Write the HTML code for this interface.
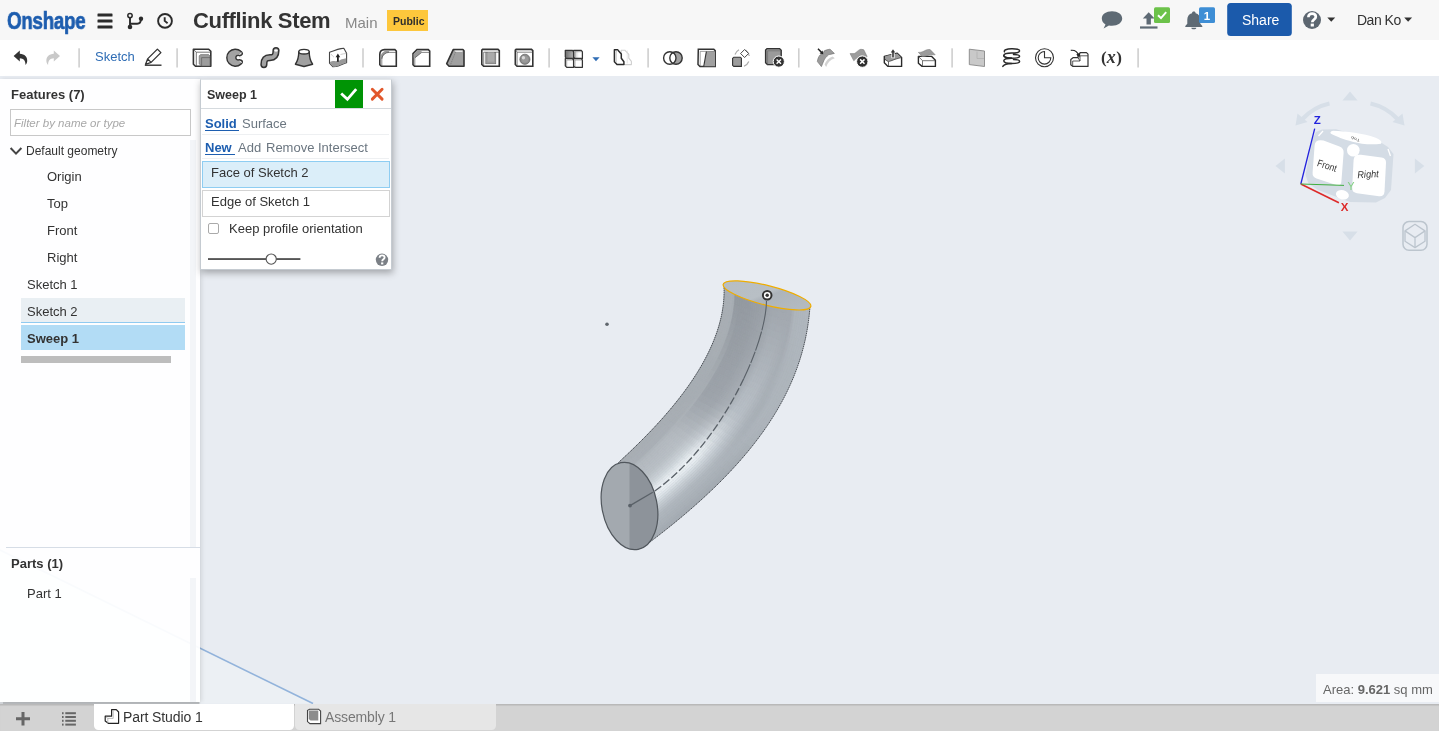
<!DOCTYPE html>
<html><head><meta charset="utf-8">
<style>
*{box-sizing:border-box}
html,body{margin:0;padding:0}
body{width:1439px;height:731px;overflow:hidden;position:relative;background:#e8ecf2;font-family:"Liberation Sans",sans-serif;color:#333}
.a{position:absolute;white-space:nowrap;line-height:1;will-change:transform}
svg{position:absolute;overflow:visible}
</style></head><body>
<!-- HEADER -->
<div class="a" style="left:0;top:0;width:1439px;height:40px;background:#f7f7f7"></div>
<div class="a" style="left:6.5px;top:9.8px;font-size:23px;font-weight:bold;color:#1d5daf;transform:scaleX(0.815);transform-origin:0 0;letter-spacing:-0.3px;-webkit-text-stroke:0.7px #1e5eae">Onshape</div>
<svg style="left:0;top:0" width="200" height="40">
 <g fill="#2b2b2b"><rect x="97.5" y="13.4" width="15" height="3.1" rx="0.6"/><rect x="97.5" y="19.4" width="15" height="3.1" rx="0.6"/><rect x="97.5" y="25.4" width="15" height="3.1" rx="0.6"/></g>
 <g stroke="#2b2b2b" fill="none" stroke-width="1.9"><circle cx="130" cy="15.6" r="2.2" stroke-width="1.5"/><path d="M130 17.8V27M130 23.7H137.2Q141 23.7 141 19"/><circle cx="165" cy="20.9" r="6.9"/><path d="M164.7 17.3V20.9L167.6 23.3"/></g>
 <g fill="#2b2b2b"><circle cx="130" cy="27" r="2.3"/><circle cx="141" cy="18.8" r="2.2"/></g>
</svg>
<div class="a" style="left:192.5px;top:10.4px;font-size:22px;font-weight:bold;color:#333;letter-spacing:-0.35px">Cufflink Stem</div>
<div class="a" style="left:344.8px;top:15.3px;font-size:15px;color:#888">Main</div>
<div class="a" style="left:387px;top:10px;width:41px;height:21px;background:#fdc73c"></div>
<div class="a" style="left:392.5px;top:15.5px;font-size:10.5px;font-weight:bold;color:#2d2d2d">Public</div>
<svg style="left:0;top:0" width="1439" height="40">
 <path fill="#5e6a74" d="M1112 11.3C1117.8 11.3 1122.2 14.4 1122.2 18.5C1122.2 22.6 1117.8 25.7 1112 25.7C1110.9 25.7 1109.9 25.6 1108.9 25.4L1103.6 28.6L1105.5 24.5C1103.2 23.2 1101.8 21 1101.8 18.5C1101.8 14.4 1106.2 11.3 1112 11.3Z"/>
 <g fill="#5e6a74"><rect x="1140" y="26.4" width="17.5" height="2.2"/><path d="M1148.7 12.3L1154.6 18.6H1150.9V24.6H1146.5V18.6H1142.8Z"/></g>
 <rect x="1154" y="7.3" width="16" height="15.8" rx="1.5" fill="#6cc24a"/>
 <path d="M1158 15.3L1161 18.2L1166.2 12.2" stroke="#fff" stroke-width="1.9" fill="none"/>
 <path fill="#5e6a74" d="M1193.8 11.5C1194.9 11.5 1195.6 12.2 1195.6 13.2C1198.6 13.9 1200.3 16.4 1200.3 19.6V23.8L1202.3 26.1V27H1185.3V26.1L1187.3 23.8V19.6C1187.3 16.4 1189 13.9 1192 13.2C1192 12.2 1192.7 11.5 1193.8 11.5ZM1191.3 27.7H1196.3C1196.3 28.7 1195.2 29.2 1193.8 29.2C1192.4 29.2 1191.3 28.7 1191.3 27.7Z"/>
 <rect x="1199" y="7.3" width="16" height="15.8" rx="1.5" fill="#3e8ed5"/>
 <text x="1207" y="19.6" font-family="Liberation Sans" font-size="11.5" font-weight="bold" fill="#fff" text-anchor="middle">1</text>
 <rect x="1227.2" y="3" width="64.6" height="32.9" rx="3.5" fill="#1b5aab"/>
 <circle cx="1312" cy="20" r="9" fill="#5c6670"/>
 <path d="M1308.4 17.2C1308.4 14.8 1310 13.6 1312.1 13.6C1314.3 13.6 1315.8 14.9 1315.8 16.8C1315.8 19.4 1312.3 19.6 1312.3 22.2" fill="none" stroke="#fff" stroke-width="2.7"/><rect x="1310.7" y="23.6" width="3.2" height="2.9" fill="#fff"/>
 <path d="M1327.3 17.5H1335.2L1331.25 21.7Z" fill="#333"/>
 <path d="M1404.2 17.5H1412.1L1408.15 21.7Z" fill="#333"/>
</svg>
<div class="a" style="left:1241.5px;top:13.2px;font-size:14px;color:#fff">Share</div>
<div class="a" style="left:1357px;top:13.3px;font-size:14px;color:#333;letter-spacing:-0.5px">Dan Ko</div>
<!-- TOOLBAR -->
<div class="a" style="left:0;top:40px;width:1439px;height:36px;background:#fff"></div>
<svg style="left:0;top:0" width="1439" height="76">
 <g fill="#cfcfcf"><rect x="78.3" y="48.3" width="1.6" height="19.2"/><rect x="176.3" y="48.3" width="1.6" height="19.2"/><rect x="362.2" y="48.3" width="1.6" height="19.2"/><rect x="548.3" y="48.3" width="1.6" height="19.2"/><rect x="647.3" y="48.3" width="1.6" height="19.2"/><rect x="798" y="48.3" width="1.6" height="19.2"/><rect x="951.3" y="48.3" width="1.6" height="19.2"/><rect x="1137.3" y="48.3" width="1.6" height="19.2"/></g>
 <path fill="#333" d="M13.6 56L19.8 50.4V53.7C24.6 53.9 27.6 56.8 27.2 61.2C27 62.8 26.3 64.1 25.5 65C25.6 60.8 23.6 58.3 19.8 58.2V61.5Z"/>
 <path fill="#c9c9c9" d="M60 56L53.8 50.4V53.7C49 53.9 46 56.8 46.4 61.2C46.6 62.8 47.3 64.1 48.1 65C48 60.8 50 58.3 53.8 58.2V61.5Z"/>
 <g fill="none" stroke="#333" stroke-width="1.3" stroke-linejoin="round"><path d="M145.6 64.3L147.6 58.9L157.4 49.1L160.9 52.6L151.1 62.4Z M147.6 58.9L151.1 62.4"/><path d="M144.8 65.2H161.5" stroke-width="1.4"/></g>
 <!-- extrude -->
 <path d="M193.4 49.2H208.7L210.8 51.3V66.3H195.5L193.4 64.2Z" fill="#fff" stroke="#333" stroke-width="1.6" stroke-linejoin="round"/>
 <path d="M196.3 66V52.2H210.6M193.6 49.5L196.3 52.2" fill="none" stroke="#555" stroke-width="0.8"/>
 <path d="M199.2 55.8L200.6 54.6H208.6L210 56V66H201.6L199.2 64Z" fill="#9c9c9c" stroke="#666" stroke-width="0.6"/>
 <path d="M201.6 66V57.6H210" fill="none" stroke="#555" stroke-width="0.6"/>
 <!-- revolve -->
 <path d="M240.9 51.3A8.5 8.5 0 1 0 240.9 64.1C242.7 63 242.9 61 241.2 60.2L239.3 59.7A2.3 2.3 0 1 1 239.3 55.7L241.2 55.2C242.9 54.4 242.7 52.4 240.9 51.3Z" fill="#a3a3a3" stroke="#333" stroke-width="1.4" stroke-linejoin="round"/><path d="M239.6 54.6L241.6 52.6M239.6 60.8L241.6 62.8M238.8 57.7H242" stroke="#eee" stroke-width="1"/>
 <!-- sweep -->
 <path d="M263.9 64.6C263.9 59.4 265.4 57.6 270 57.6C274.6 57.6 276 55.6 276 50.6" fill="none" stroke="#333" stroke-width="7.2" stroke-linecap="round"/>
 <path d="M263.9 64.6C263.9 59.4 265.4 57.6 270 57.6C274.6 57.6 276 55.6 276 50.6" fill="none" stroke="#a3a3a3" stroke-width="4.2" stroke-linecap="round"/>
 <ellipse cx="276" cy="50.6" rx="1.8" ry="1.1" fill="#fff"/>
 <!-- loft -->
 <path d="M298.8 51.7C298.8 58 297.6 61 295.4 64.2L304 66.5L312.6 64.2C310.4 61 309.2 58 309.2 51.7Z" fill="#a0a0a0" stroke="#333" stroke-width="1.4" stroke-linejoin="round"/>
 <ellipse cx="304" cy="51.7" rx="5.2" ry="2.3" fill="#fff" stroke="#333" stroke-width="1.4"/>
 <!-- thicken -->
 <path d="M329.5 52.3C333 51.2 337 49.2 341 48.6L343.8 48.3L346.6 53.3V62.8C343 63.5 340 65.5 336 66.5L333 66.8L329.5 63.2Z" fill="#fff" stroke="#444" stroke-width="1.1" stroke-linejoin="round"/>
 <path d="M330 62C333 60 337 62.5 341 59.5L346.2 58.2V63C343 63.5 340 65.5 336 66.4L333 66.6L330 63.5Z" fill="#999"/>
 <path d="M331 54C332 55.5 333 56.5 334 57M340.5 54.5C342.5 54 344.5 53.6 346.4 53.5" fill="none" stroke="#aaa" stroke-width="0.6"/><path d="M337.9 61.8V55.5" stroke="#222" stroke-width="1.8"/><path d="M335.6 57.2L337.9 53.4L340.2 57.2Z" fill="#222"/>
 <!-- fillet -->
 <path d="M384.3 49.6H394.9L396.3 51V66.2H381.3L379.8 64.7V54.2C379.8 51.6 381.6 49.6 384.3 49.6Z" fill="#fff" stroke="#333" stroke-width="1.6"/>
 <path d="M380.4 58.6C380.4 53.2 383.8 50.2 388.8 50.2L389.4 52.6C385.6 52.8 382.8 55.2 382.4 59Z" fill="#999"/>
 <path d="M381.8 66V58.2C382.6 54.6 385.6 52.4 389.2 52.4H396" fill="none" stroke="#555" stroke-width="0.7"/>
 <!-- chamfer -->
 <path d="M413 53.6L417 49.6H428.3L429.7 51V66.2H414.5L413 64.7Z" fill="#fff" stroke="#333" stroke-width="1.6"/>
 <path d="M413.7 53.9L417.3 50.3H421.8L421.4 52.5L415.2 58L413.7 57.5Z" fill="#999"/>
 <path d="M414.8 66V57.8L421.8 52.4H429.5" fill="none" stroke="#555" stroke-width="0.7"/>
 <!-- draft -->
 <path d="M453.2 49.6H462.9L464 50.8V66.2H449.1L446.7 63.7Z" fill="#a0a0a0" stroke="#333" stroke-width="1.6" stroke-linejoin="round"/>
 <path d="M454.3 50.4H462.8L462.3 51.8H455.5Z" fill="#fff"/>
 <path d="M455.6 51.8L450 66" stroke="#666" stroke-width="0.6" stroke-dasharray="1.2 0.8"/>
 <!-- shell -->
 <path d="M482.6 49.4H498L499.3 50.7V66.2H483.6L481.8 64.5V50.1Z" fill="#fff" stroke="#333" stroke-width="1.6"/>
 <path d="M483.7 66V52.2H499.2" fill="none" stroke="#555" stroke-width="0.7"/>
 <rect x="485.8" y="52.4" width="10" height="11.4" fill="#9c9c9c" stroke="#666" stroke-width="0.6"/>
 <rect x="487.7" y="52.4" width="6.3" height="9.3" fill="#ababab"/>
 <!-- hole -->
 <path d="M516.1 49.4H531.5L532.8 50.7V66.2H517L515.3 64.5V50.1Z" fill="#fff" stroke="#333" stroke-width="1.6"/>
 <path d="M517.1 66V52.2H532.6M515.6 49.8L517.1 52.2" fill="none" stroke="#555" stroke-width="0.7"/>
 <circle cx="524.9" cy="59.3" r="5.1" fill="#8c8c8c" stroke="#555" stroke-width="0.6"/>
 <circle cx="524.9" cy="59.3" r="3.4" fill="#9a9a9a"/>
 <circle cx="523.4" cy="57.8" r="1.7" fill="#d8d8d8"/>
 <!-- pattern -->
 <defs><linearGradient id="pg1" x1="0" y1="0" x2="1" y2="0"><stop offset="0" stop-color="#6f6f6f"/><stop offset="1" stop-color="#b5b5b5"/></linearGradient><linearGradient id="pg2" x1="0" y1="0" x2="1" y2="0"><stop offset="0" stop-color="#bdbdbd"/><stop offset="0.6" stop-color="#fff"/></linearGradient></defs>
 <path d="M565.3 50.3H572.2L573.6 51.7V58.4H566.7L565.3 57.0Z" fill="url(#pg1)" stroke="#333" stroke-width="1.25" stroke-linejoin="round"/><path d="M566.7 58.4V51.7H573.6" fill="none" stroke="#777" stroke-width="0.6"/><path d="M573.6 50.3H581.0L582.4 51.7V58.4H575.0L573.6 57.0Z" fill="url(#pg2)" stroke="#333" stroke-width="1.25" stroke-linejoin="round"/><path d="M575.0 58.4V51.7H582.4" fill="none" stroke="#777" stroke-width="0.6"/><path d="M565.3 58.6H572.2L573.6 60.0V67.3H566.7L565.3 65.9Z" fill="#fff" stroke="#333" stroke-width="1.25" stroke-linejoin="round"/><path d="M566.7 67.3V60.0H573.6" fill="none" stroke="#777" stroke-width="0.6"/><path d="M573.6 58.6H581.0L582.4 60.0V67.3H575.0L573.6 65.9Z" fill="#fff" stroke="#333" stroke-width="1.25" stroke-linejoin="round"/><path d="M575.0 67.3V60.0H582.4" fill="none" stroke="#777" stroke-width="0.6"/>
 <path d="M592.4 57.2H599.6L596 61.3Z" fill="#2f6db5"/>
 <!-- mirror -->
 <path d="M621.2 50.2H624.8L628.8 54.4V58.2L631.4 61.4V64.6H624.3L621 61.6Z" fill="#fff" stroke="#cfcfcf" stroke-width="1.1" stroke-linejoin="round"/>
 <path d="M627.2 50.6V63.5" stroke="#ddd" stroke-width="0.7"/>
 <path d="M614.4 49.8H617.6L621.3 53.9V58.2L623.9 61.8V64.5H617L614.4 61.8Z" fill="#fff" stroke="#2a2a2a" stroke-width="1.5" stroke-linejoin="round"/>
 <path d="M616.2 52V62.5M616.2 52L617.6 50.2" fill="none" stroke="#999" stroke-width="0.6"/>
 <!-- boolean -->
 <circle cx="676" cy="58" r="6.2" fill="#a0a0a0"/>
 <path d="M672.9 52.6A6.2 6.2 0 0 1 672.9 63.4A6.2 6.2 0 0 1 672.9 52.6Z" fill="#fff"/>
 <g fill="none" stroke="#333" stroke-width="1.4"><circle cx="669.8" cy="58" r="6.2"/><circle cx="676" cy="58" r="6.2"/></g>
 <!-- split -->
 <path d="M698.3 49.2H713.8L715.2 50.6V66.5H700L698 64.5Z" fill="#fff" stroke="#333" stroke-width="1.5"/>
 <path d="M706.2 51.5L712.5 51.3L715 51.6V66.2H704.2Z" fill="#a0a0a0"/>
 <path d="M706.4 51.4L703.8 66.2" stroke="#333" stroke-width="1.1"/>
 <path d="M700.2 66V51.4H715" fill="none" stroke="#666" stroke-width="0.6"/>
 <!-- transform -->
 <path d="M735 54.5A9 9 0 0 1 739 49.8M745.5 50A9 9 0 0 1 749.3 56M748.8 61.5A9 9 0 0 1 744 66.3" fill="none" stroke="#aaa" stroke-width="1.2"/>
 <path d="M732.6 58.3L733.8 57.2H740.4L741.4 58.2V66.4H733.8L732.6 65.3Z" fill="#9c9c9c" stroke="#333" stroke-width="1.1"/>
 <path d="M744.6 49.5L748.6 53.5L744.6 57.5L740.6 53.5Z" fill="#fff" stroke="#333" stroke-width="0.9"/>
 <!-- delete part -->
 <path d="M767 48.6H779.6L781.2 50.2V64.6H767.4L765.6 62.8V50Z" fill="#9a9a9a" stroke="#333" stroke-width="1.4"/>
 <path d="M767.6 64.4V50.8H781" fill="none" stroke="#666" stroke-width="0.6"/>
 <circle cx="778.8" cy="61.6" r="5.6" fill="#333" stroke="#fff" stroke-width="1"/>
 <path d="M776.6 59.4L781 63.8M781 59.4L776.6 63.8" stroke="#fff" stroke-width="1.4"/>
 <!-- move face -->
 <path d="M821.4 66.6L817.4 61.6C817.6 59 818.5 56.8 820 55L823 53.5L824.3 50.8C826 50 828 49.3 830 49.2L834.4 53.4C831.8 54 829.8 54.6 828.8 54.6C826.5 56.5 824.6 58.5 823.8 60.8Z" fill="#9c9c9c" stroke="#666" stroke-width="0.6" stroke-linejoin="round"/>
 <path d="M834.8 58.2C830.5 59.4 827.5 62.6 826.2 67L824.6 64.6C825.8 60.6 829 57.8 832.6 56.4Z" fill="#d2d2d2"/>
 <path d="M818 48.7L821.6 52.6" stroke="#222" stroke-width="1.5"/><path d="M819.6 53.6L823.3 54.3L822.6 50.6Z" fill="#222"/>
 <!-- delete face -->
 <path d="M850 53.6L853.8 60.8C856.3 58.6 858.5 56.2 861 55.3L867.2 56.6L863.8 49.8C862.5 49.3 861 49.2 860 49.4C857.8 50.5 856 52.8 854.2 53.6Z" fill="#9c9c9c" stroke="#777" stroke-width="0.5" stroke-linejoin="round"/>
 <circle cx="862.3" cy="61.6" r="5.7" fill="#2e2e2e" stroke="#fff" stroke-width="1"/>
 <path d="M860.1 59.4L864.5 63.8M864.5 59.4L860.1 63.8" stroke="#fff" stroke-width="1.5"/>
 <!-- replace face -->
 <path d="M884.3 56.4V62.8L888 66.4H901.6V57.4L897.2 53.3L884.3 56.4Z" fill="#fff" stroke="#2a2a2a" stroke-width="1.4" stroke-linejoin="round"/>
 <path d="M885 56.6C886.8 55.6 888.5 55.2 890 55C892.5 54.6 895 54 897.1 53.6L901.2 57.4C898.5 57.6 896 59.2 893.6 59.9C891.5 60.6 889.8 61.3 888.4 61.6L885 60.2Z" fill="#9a9a9a"/>
 <path d="M888.5 61.6V66.2M884.6 58.5C885.6 60 886.8 61 888.4 61.6C891.5 61 894.5 59 901.4 57.6" fill="none" stroke="#444" stroke-width="0.8"/>
 <path d="M893 58.2V51.8" stroke="#fff" stroke-width="3.2"/>
 <path d="M893 57.6V51.6" stroke="#333" stroke-width="1.6"/><path d="M890.8 52.6L893 49.3L895.2 52.6Z" fill="#333"/>
 <!-- modify fillet -->
 <path d="M918.4 56.4H931.7L935.4 60.3V66.4H922.1L918.4 63.2Z" fill="#fff" stroke="#2a2a2a" stroke-width="1.4" stroke-linejoin="round"/>
 <path d="M918.6 56.6L922.5 60.7H935.2M922.5 60.7V66.2" fill="none" stroke="#555" stroke-width="0.8"/>
 <path d="M918.3 52.4C921 52.6 923.5 51.5 925.5 50.3C927 49.5 928.5 49.3 930.2 49.6L935.2 54.8C933 54.8 930.5 54.4 928.6 55.2C926.4 56 924 56.6 921.8 56.5C921 55 919.8 53.6 918.3 52.4Z" fill="#9c9c9c" stroke="#777" stroke-width="0.5"/>
 <!-- plane -->
 <path d="M969.3 49.2L984.5 51V66.5L969.3 64.6Z" fill="#c9c9c9" stroke="#888" stroke-width="0.9"/>
 <path d="M977 51.5V58.5H984" fill="none" stroke="#aaa" stroke-width="0.6"/>
 <!-- helix -->
 <g fill="none" stroke="#2a2a2a" stroke-width="1.5" stroke-linecap="round">
  <path d="M1004.5 51.8C1003.5 50.2 1006.5 48.9 1011.5 48.8C1016.5 48.7 1019.8 49.6 1019.6 50.8C1019.4 52.2 1015.5 53 1011.5 53C1007.5 53 1004 53.8 1003.8 55.6C1003.6 57.3 1007.5 58.2 1011.5 58.2C1015.5 58.2 1019.6 57.6 1019.6 56.2C1019.6 55 1016.5 54.4 1013.5 54.4"/>
  <path d="M1003.8 55.6C1003.6 57.3 1007.5 58.2 1011.5 58.2"/>
  <path d="M1011.5 58.2C1007.5 58.2 1003.8 59 1003.8 60.8C1003.8 62.5 1007.5 63.4 1011.5 63.4C1015.5 63.4 1019.6 62.8 1019.6 61.4C1019.6 60.2 1016.5 59.6 1013.5 59.6"/>
  <path d="M1011.5 63.4C1007.5 63.4 1004 64.2 1002.8 66.4"/>
 </g>
 <!-- mate connector pie -->
 <g fill="none" stroke="#333"><circle cx="1044.5" cy="57.7" r="9" stroke-width="1.1"/><path d="M1044.5 51.5A6.3 6.3 0 1 0 1050.8 57.8H1044.5Z" stroke-width="1.1"/></g>
 <!-- import -->
 <path d="M1070.8 59.5L1073 57.7H1078V54.6L1080.2 52.7H1086.5L1088 54.2V66.4H1072.7L1070.8 64.7Z" fill="#fff" stroke="#333" stroke-width="1.2" stroke-linejoin="round"/>
 <path d="M1072.7 66.2V61H1080V55.8H1087.8M1080 61L1078 57.7M1080 55.8L1078 54.6" fill="none" stroke="#333" stroke-width="0.8"/>
 <path d="M1070.8 50.3C1074.8 49.9 1077.5 51.5 1078.6 55.5" fill="none" stroke="#222" stroke-width="1.2"/><path d="M1076.2 54.6L1079.4 57.6L1080.4 53.3Z" fill="#222"/>
</svg>
<div class="a" style="left:95.3px;top:49.8px;font-size:13px;color:#2f6db5">Sketch</div>
<div class="a" style="left:1101.2px;top:48.2px;font-size:17px;font-family:'Liberation Serif',serif;font-weight:bold;color:#333">(<span style="font-style:italic;font-size:18px;letter-spacing:0.5px">x</span>)</div>

<!-- VIEWPORT -->
<svg id="vp" style="left:0;top:0" width="1439" height="731">
 <defs>
  <clipPath id="bodyclip"><path d="M723.8 283C729.4 356.8 656.4 427.4 618 463L648 543.5C751.3 466 804.1 392.7 810 306Z"/></clipPath>
  <clipPath id="capc"><ellipse cx="629.5" cy="506" rx="44.2" ry="27.5" transform="rotate(78.6 629.5 506)"/></clipPath>
  <linearGradient id="capg" x1="0" y1="0" x2="1" y2="0.3"><stop offset="0" stop-color="#b6bdc3"/><stop offset="0.55" stop-color="#b8bfc5"/><stop offset="0.62" stop-color="#adb4bb"/><stop offset="1" stop-color="#b3bac0"/></linearGradient>
  <filter id="bl" x="-10%" y="-10%" width="120%" height="120%"><feGaussianBlur stdDeviation="0.7"/></filter>
 </defs>
 <path d="M0 550L313 703.5L0 703.5Z" fill="#ecf0f4"/>
 <path d="M0 550L313 703.5" stroke="#92b3db" stroke-width="1.6"/>
 <circle cx="607" cy="324.3" r="1.8" fill="#5f666d"/>
 <g clip-path="url(#bodyclip)">
  <path d="M723.8 283C729.4 356.8 656.4 427.4 618 463L648 543.5C751.3 466 804.1 392.7 810 306Z" fill="#a6acb3"/>
  <g filter="url(#bl)"><path d="M723.8 283.0L726.0 283.6L726.2 289.7L724.1 289.1Z" fill="#a8aeb4" stroke="#a8aeb4" stroke-width="0.4"/><path d="M726.0 283.6L728.1 284.1L728.4 290.3L726.2 289.7Z" fill="#a8aeb4" stroke="#a8aeb4" stroke-width="0.4"/><path d="M728.1 284.1L730.3 284.7L730.5 290.9L728.4 290.3Z" fill="#a9afb5" stroke="#a9afb5" stroke-width="0.4"/><path d="M730.3 284.7L732.4 285.3L732.6 291.5L730.5 290.9Z" fill="#a9afb5" stroke="#a9afb5" stroke-width="0.4"/><path d="M732.4 285.3L734.6 285.9L734.8 292.1L732.6 291.5Z" fill="#a7adb3" stroke="#a7adb3" stroke-width="0.4"/><path d="M734.6 285.9L736.7 286.4L736.9 292.7L734.8 292.1Z" fill="#92989f" stroke="#92989f" stroke-width="0.4"/><path d="M736.7 286.4L738.9 287.0L739.0 293.4L736.9 292.7Z" fill="#92989f" stroke="#92989f" stroke-width="0.4"/><path d="M738.9 287.0L741.0 287.6L741.1 294.0L739.0 293.4Z" fill="#9399a0" stroke="#9399a0" stroke-width="0.4"/><path d="M741.0 287.6L743.2 288.2L743.3 294.6L741.1 294.0Z" fill="#9399a0" stroke="#9399a0" stroke-width="0.4"/><path d="M743.2 288.2L745.3 288.8L745.4 295.2L743.3 294.6Z" fill="#9399a0" stroke="#9399a0" stroke-width="0.4"/><path d="M745.3 288.8L747.5 289.3L747.5 295.8L745.4 295.2Z" fill="#949aa1" stroke="#949aa1" stroke-width="0.4"/><path d="M747.5 289.3L749.7 289.9L749.7 296.4L747.5 295.8Z" fill="#949aa1" stroke="#949aa1" stroke-width="0.4"/><path d="M749.7 289.9L751.8 290.5L751.8 297.0L749.7 296.4Z" fill="#949aa1" stroke="#949aa1" stroke-width="0.4"/><path d="M751.8 290.5L754.0 291.1L753.9 297.6L751.8 297.0Z" fill="#959ba2" stroke="#959ba2" stroke-width="0.4"/><path d="M754.0 291.1L756.1 291.6L756.1 298.2L753.9 297.6Z" fill="#969ca3" stroke="#969ca3" stroke-width="0.4"/><path d="M756.1 291.6L758.3 292.2L758.2 298.8L756.1 298.2Z" fill="#979da4" stroke="#979da4" stroke-width="0.4"/><path d="M758.3 292.2L760.4 292.8L760.3 299.4L758.2 298.8Z" fill="#989ea5" stroke="#989ea5" stroke-width="0.4"/><path d="M760.4 292.8L762.6 293.4L762.5 300.0L760.3 299.4Z" fill="#999fa6" stroke="#999fa6" stroke-width="0.4"/><path d="M762.6 293.4L764.7 293.9L764.6 300.6L762.5 300.0Z" fill="#9aa0a7" stroke="#9aa0a7" stroke-width="0.4"/><path d="M764.7 293.9L766.9 294.5L766.7 301.2L764.6 300.6Z" fill="#9ba1a8" stroke="#9ba1a8" stroke-width="0.4"/><path d="M766.9 294.5L769.1 295.1L768.9 301.8L766.7 301.2Z" fill="#9ca2a9" stroke="#9ca2a9" stroke-width="0.4"/><path d="M769.1 295.1L771.2 295.6L771.0 302.4L768.9 301.8Z" fill="#9ea4ab" stroke="#9ea4ab" stroke-width="0.4"/><path d="M771.2 295.6L773.4 296.2L773.1 303.0L771.0 302.4Z" fill="#a0a6ad" stroke="#a0a6ad" stroke-width="0.4"/><path d="M773.4 296.2L775.5 296.8L775.3 303.6L773.1 303.0Z" fill="#a1a7ae" stroke="#a1a7ae" stroke-width="0.4"/><path d="M775.5 296.8L777.7 297.4L777.4 304.2L775.3 303.6Z" fill="#a1a7ae" stroke="#a1a7ae" stroke-width="0.4"/><path d="M777.7 297.4L779.8 297.9L779.5 304.8L777.4 304.2Z" fill="#a2a8af" stroke="#a2a8af" stroke-width="0.4"/><path d="M779.8 297.9L782.0 298.5L781.7 305.4L779.5 304.8Z" fill="#a2a8af" stroke="#a2a8af" stroke-width="0.4"/><path d="M782.0 298.5L784.1 299.1L783.8 306.0L781.7 305.4Z" fill="#a2a8af" stroke="#a2a8af" stroke-width="0.4"/><path d="M784.1 299.1L786.3 299.7L785.9 306.6L783.8 306.0Z" fill="#a2a8af" stroke="#a2a8af" stroke-width="0.4"/><path d="M786.3 299.7L788.5 300.2L788.1 307.2L785.9 306.6Z" fill="#a2a8af" stroke="#a2a8af" stroke-width="0.4"/><path d="M788.5 300.2L790.6 300.8L790.2 307.8L788.1 307.2Z" fill="#a3a9b0" stroke="#a3a9b0" stroke-width="0.4"/><path d="M790.6 300.8L792.8 301.4L792.3 308.4L790.2 307.8Z" fill="#a3a9b0" stroke="#a3a9b0" stroke-width="0.4"/><path d="M792.8 301.4L794.9 302.0L794.5 309.0L792.3 308.4Z" fill="#a8afb6" stroke="#a8afb6" stroke-width="0.4"/><path d="M794.9 302.0L797.1 302.6L796.6 309.6L794.5 309.0Z" fill="#aeb5bc" stroke="#aeb5bc" stroke-width="0.4"/><path d="M797.1 302.6L799.2 303.1L798.7 310.2L796.6 309.6Z" fill="#aeb5bc" stroke="#aeb5bc" stroke-width="0.4"/><path d="M799.2 303.1L801.4 303.7L800.9 310.8L798.7 310.2Z" fill="#afb6bd" stroke="#afb6bd" stroke-width="0.4"/><path d="M801.4 303.7L803.5 304.3L803.0 311.4L800.9 310.8Z" fill="#afb6bd" stroke="#afb6bd" stroke-width="0.4"/><path d="M803.5 304.3L805.7 304.9L805.1 312.0L803.0 311.4Z" fill="#afb6bd" stroke="#afb6bd" stroke-width="0.4"/><path d="M805.7 304.9L807.8 305.4L807.3 312.6L805.1 312.0Z" fill="#b0b7be" stroke="#b0b7be" stroke-width="0.4"/><path d="M807.8 305.4L810.0 306.0L809.4 313.2L807.3 312.6Z" fill="#b0b7be" stroke="#b0b7be" stroke-width="0.4"/><path d="M724.1 289.1L726.2 289.7L726.1 295.9L724.0 295.3Z" fill="#a8aeb4" stroke="#a8aeb4" stroke-width="0.4"/><path d="M726.2 289.7L728.4 290.3L728.3 296.5L726.1 295.9Z" fill="#a8aeb4" stroke="#a8aeb4" stroke-width="0.4"/><path d="M728.4 290.3L730.5 290.9L730.4 297.1L728.3 296.5Z" fill="#a9afb5" stroke="#a9afb5" stroke-width="0.4"/><path d="M730.5 290.9L732.6 291.5L732.5 297.8L730.4 297.1Z" fill="#a9afb5" stroke="#a9afb5" stroke-width="0.4"/><path d="M732.6 291.5L734.8 292.1L734.6 298.4L732.5 297.8Z" fill="#a7adb3" stroke="#a7adb3" stroke-width="0.4"/><path d="M734.8 292.1L736.9 292.7L736.7 299.0L734.6 298.4Z" fill="#92989f" stroke="#92989f" stroke-width="0.4"/><path d="M736.9 292.7L739.0 293.4L738.8 299.7L736.7 299.0Z" fill="#92989f" stroke="#92989f" stroke-width="0.4"/><path d="M739.0 293.4L741.1 294.0L740.9 300.3L738.8 299.7Z" fill="#9399a0" stroke="#9399a0" stroke-width="0.4"/><path d="M741.1 294.0L743.3 294.6L743.1 300.9L740.9 300.3Z" fill="#9399a0" stroke="#9399a0" stroke-width="0.4"/><path d="M743.3 294.6L745.4 295.2L745.2 301.5L743.1 300.9Z" fill="#9399a0" stroke="#9399a0" stroke-width="0.4"/><path d="M745.4 295.2L747.5 295.8L747.3 302.2L745.2 301.5Z" fill="#949aa1" stroke="#949aa1" stroke-width="0.4"/><path d="M747.5 295.8L749.7 296.4L749.4 302.8L747.3 302.2Z" fill="#949aa1" stroke="#949aa1" stroke-width="0.4"/><path d="M749.7 296.4L751.8 297.0L751.5 303.4L749.4 302.8Z" fill="#949aa1" stroke="#949aa1" stroke-width="0.4"/><path d="M751.8 297.0L753.9 297.6L753.6 304.0L751.5 303.4Z" fill="#959ba2" stroke="#959ba2" stroke-width="0.4"/><path d="M753.9 297.6L756.1 298.2L755.7 304.7L753.6 304.0Z" fill="#969ca3" stroke="#969ca3" stroke-width="0.4"/><path d="M756.1 298.2L758.2 298.8L757.8 305.3L755.7 304.7Z" fill="#979da4" stroke="#979da4" stroke-width="0.4"/><path d="M758.2 298.8L760.3 299.4L760.0 305.9L757.8 305.3Z" fill="#989ea5" stroke="#989ea5" stroke-width="0.4"/><path d="M760.3 299.4L762.5 300.0L762.1 306.5L760.0 305.9Z" fill="#999fa6" stroke="#999fa6" stroke-width="0.4"/><path d="M762.5 300.0L764.6 300.6L764.2 307.2L762.1 306.5Z" fill="#9aa0a7" stroke="#9aa0a7" stroke-width="0.4"/><path d="M764.6 300.6L766.7 301.2L766.3 307.8L764.2 307.2Z" fill="#9ba1a8" stroke="#9ba1a8" stroke-width="0.4"/><path d="M766.7 301.2L768.9 301.8L768.4 308.4L766.3 307.8Z" fill="#9ca2a9" stroke="#9ca2a9" stroke-width="0.4"/><path d="M768.9 301.8L771.0 302.4L770.5 309.1L768.4 308.4Z" fill="#9ea4ab" stroke="#9ea4ab" stroke-width="0.4"/><path d="M771.0 302.4L773.1 303.0L772.6 309.7L770.5 309.1Z" fill="#a0a6ad" stroke="#a0a6ad" stroke-width="0.4"/><path d="M773.1 303.0L775.3 303.6L774.8 310.3L772.6 309.7Z" fill="#a1a7ae" stroke="#a1a7ae" stroke-width="0.4"/><path d="M775.3 303.6L777.4 304.2L776.9 310.9L774.8 310.3Z" fill="#a1a7ae" stroke="#a1a7ae" stroke-width="0.4"/><path d="M777.4 304.2L779.5 304.8L779.0 311.6L776.9 310.9Z" fill="#a2a8af" stroke="#a2a8af" stroke-width="0.4"/><path d="M779.5 304.8L781.7 305.4L781.1 312.2L779.0 311.6Z" fill="#a2a8af" stroke="#a2a8af" stroke-width="0.4"/><path d="M781.7 305.4L783.8 306.0L783.2 312.8L781.1 312.2Z" fill="#a2a8af" stroke="#a2a8af" stroke-width="0.4"/><path d="M783.8 306.0L785.9 306.6L785.3 313.4L783.2 312.8Z" fill="#a2a8af" stroke="#a2a8af" stroke-width="0.4"/><path d="M785.9 306.6L788.1 307.2L787.4 314.1L785.3 313.4Z" fill="#a2a8af" stroke="#a2a8af" stroke-width="0.4"/><path d="M788.1 307.2L790.2 307.8L789.6 314.7L787.4 314.1Z" fill="#a3a9b0" stroke="#a3a9b0" stroke-width="0.4"/><path d="M790.2 307.8L792.3 308.4L791.7 315.3L789.6 314.7Z" fill="#a3a9b0" stroke="#a3a9b0" stroke-width="0.4"/><path d="M792.3 308.4L794.5 309.0L793.8 315.9L791.7 315.3Z" fill="#a8afb6" stroke="#a8afb6" stroke-width="0.4"/><path d="M794.5 309.0L796.6 309.6L795.9 316.6L793.8 315.9Z" fill="#aeb5bc" stroke="#aeb5bc" stroke-width="0.4"/><path d="M796.6 309.6L798.7 310.2L798.0 317.2L795.9 316.6Z" fill="#aeb5bc" stroke="#aeb5bc" stroke-width="0.4"/><path d="M798.7 310.2L800.9 310.8L800.1 317.8L798.0 317.2Z" fill="#afb6bd" stroke="#afb6bd" stroke-width="0.4"/><path d="M800.9 310.8L803.0 311.4L802.2 318.4L800.1 317.8Z" fill="#afb6bd" stroke="#afb6bd" stroke-width="0.4"/><path d="M803.0 311.4L805.1 312.0L804.4 319.1L802.2 318.4Z" fill="#afb6bd" stroke="#afb6bd" stroke-width="0.4"/><path d="M805.1 312.0L807.3 312.6L806.5 319.7L804.4 319.1Z" fill="#b0b7be" stroke="#b0b7be" stroke-width="0.4"/><path d="M807.3 312.6L809.4 313.2L808.6 320.3L806.5 319.7Z" fill="#b0b7be" stroke="#b0b7be" stroke-width="0.4"/><path d="M724.0 295.3L726.1 295.9L725.7 302.0L723.6 301.4Z" fill="#a8aeb4" stroke="#a8aeb4" stroke-width="0.4"/><path d="M726.1 295.9L728.3 296.5L727.8 302.7L725.7 302.0Z" fill="#a8aeb4" stroke="#a8aeb4" stroke-width="0.4"/><path d="M728.3 296.5L730.4 297.1L729.9 303.3L727.8 302.7Z" fill="#a8aeb4" stroke="#a8aeb4" stroke-width="0.4"/><path d="M730.4 297.1L732.5 297.8L732.0 304.0L729.9 303.3Z" fill="#a9afb5" stroke="#a9afb5" stroke-width="0.4"/><path d="M732.5 297.8L734.6 298.4L734.1 304.6L732.0 304.0Z" fill="#a7adb3" stroke="#a7adb3" stroke-width="0.4"/><path d="M734.6 298.4L736.7 299.0L736.2 305.3L734.1 304.6Z" fill="#9399a0" stroke="#9399a0" stroke-width="0.4"/><path d="M736.7 299.0L738.8 299.7L738.3 305.9L736.2 305.3Z" fill="#9399a0" stroke="#9399a0" stroke-width="0.4"/><path d="M738.8 299.7L740.9 300.3L740.4 306.6L738.3 305.9Z" fill="#9399a0" stroke="#9399a0" stroke-width="0.4"/><path d="M740.9 300.3L743.1 300.9L742.5 307.2L740.4 306.6Z" fill="#9399a0" stroke="#9399a0" stroke-width="0.4"/><path d="M743.1 300.9L745.2 301.5L744.6 307.9L742.5 307.2Z" fill="#949aa1" stroke="#949aa1" stroke-width="0.4"/><path d="M745.2 301.5L747.3 302.2L746.7 308.5L744.6 307.9Z" fill="#949aa1" stroke="#949aa1" stroke-width="0.4"/><path d="M747.3 302.2L749.4 302.8L748.8 309.2L746.7 308.5Z" fill="#949aa1" stroke="#949aa1" stroke-width="0.4"/><path d="M749.4 302.8L751.5 303.4L750.9 309.8L748.8 309.2Z" fill="#959ba2" stroke="#959ba2" stroke-width="0.4"/><path d="M751.5 303.4L753.6 304.0L753.0 310.5L750.9 309.8Z" fill="#969ca3" stroke="#969ca3" stroke-width="0.4"/><path d="M753.6 304.0L755.7 304.7L755.1 311.1L753.0 310.5Z" fill="#979da4" stroke="#979da4" stroke-width="0.4"/><path d="M755.7 304.7L757.8 305.3L757.2 311.8L755.1 311.1Z" fill="#979da4" stroke="#979da4" stroke-width="0.4"/><path d="M757.8 305.3L760.0 305.9L759.3 312.4L757.2 311.8Z" fill="#989ea5" stroke="#989ea5" stroke-width="0.4"/><path d="M760.0 305.9L762.1 306.5L761.4 313.1L759.3 312.4Z" fill="#999fa6" stroke="#999fa6" stroke-width="0.4"/><path d="M762.1 306.5L764.2 307.2L763.5 313.7L761.4 313.1Z" fill="#9aa0a7" stroke="#9aa0a7" stroke-width="0.4"/><path d="M764.2 307.2L766.3 307.8L765.6 314.4L763.5 313.7Z" fill="#9ba1a8" stroke="#9ba1a8" stroke-width="0.4"/><path d="M766.3 307.8L768.4 308.4L767.7 315.0L765.6 314.4Z" fill="#9da3aa" stroke="#9da3aa" stroke-width="0.4"/><path d="M768.4 308.4L770.5 309.1L769.8 315.7L767.7 315.0Z" fill="#9fa5ac" stroke="#9fa5ac" stroke-width="0.4"/><path d="M770.5 309.1L772.6 309.7L771.9 316.3L769.8 315.7Z" fill="#a1a7ae" stroke="#a1a7ae" stroke-width="0.4"/><path d="M772.6 309.7L774.8 310.3L774.0 317.0L771.9 316.3Z" fill="#a2a8af" stroke="#a2a8af" stroke-width="0.4"/><path d="M774.8 310.3L776.9 310.9L776.1 317.6L774.0 317.0Z" fill="#a2a8af" stroke="#a2a8af" stroke-width="0.4"/><path d="M776.9 310.9L779.0 311.6L778.2 318.3L776.1 317.6Z" fill="#a2a9b0" stroke="#a2a9b0" stroke-width="0.4"/><path d="M779.0 311.6L781.1 312.2L780.3 318.9L778.2 318.3Z" fill="#a3a9b0" stroke="#a3a9b0" stroke-width="0.4"/><path d="M781.1 312.2L783.2 312.8L782.4 319.6L780.3 318.9Z" fill="#a3a9b0" stroke="#a3a9b0" stroke-width="0.4"/><path d="M783.2 312.8L785.3 313.4L784.5 320.2L782.4 319.6Z" fill="#a3a9b0" stroke="#a3a9b0" stroke-width="0.4"/><path d="M785.3 313.4L787.4 314.1L786.6 320.9L784.5 320.2Z" fill="#a3a9b0" stroke="#a3a9b0" stroke-width="0.4"/><path d="M787.4 314.1L789.6 314.7L788.7 321.5L786.6 320.9Z" fill="#a3a9b0" stroke="#a3a9b0" stroke-width="0.4"/><path d="M789.6 314.7L791.7 315.3L790.8 322.2L788.7 321.5Z" fill="#a3a9b0" stroke="#a3a9b0" stroke-width="0.4"/><path d="M791.7 315.3L793.8 315.9L792.9 322.8L790.8 322.2Z" fill="#a9afb6" stroke="#a9afb6" stroke-width="0.4"/><path d="M793.8 315.9L795.9 316.6L795.0 323.5L792.9 322.8Z" fill="#aeb5bc" stroke="#aeb5bc" stroke-width="0.4"/><path d="M795.9 316.6L798.0 317.2L797.1 324.2L795.0 323.5Z" fill="#aeb5bc" stroke="#aeb5bc" stroke-width="0.4"/><path d="M798.0 317.2L800.1 317.8L799.2 324.8L797.1 324.2Z" fill="#afb6bd" stroke="#afb6bd" stroke-width="0.4"/><path d="M800.1 317.8L802.2 318.4L801.3 325.5L799.2 324.8Z" fill="#afb6bd" stroke="#afb6bd" stroke-width="0.4"/><path d="M802.2 318.4L804.4 319.1L803.3 326.1L801.3 325.5Z" fill="#afb6bd" stroke="#afb6bd" stroke-width="0.4"/><path d="M804.4 319.1L806.5 319.7L805.4 326.8L803.3 326.1Z" fill="#afb6bd" stroke="#afb6bd" stroke-width="0.4"/><path d="M806.5 319.7L808.6 320.3L807.5 327.4L805.4 326.8Z" fill="#b0b7be" stroke="#b0b7be" stroke-width="0.4"/><path d="M723.6 301.4L725.7 302.0L725.0 308.1L722.9 307.4Z" fill="#a8aeb4" stroke="#a8aeb4" stroke-width="0.4"/><path d="M725.7 302.0L727.8 302.7L727.1 308.8L725.0 308.1Z" fill="#a8aeb4" stroke="#a8aeb4" stroke-width="0.4"/><path d="M727.8 302.7L729.9 303.3L729.2 309.5L727.1 308.8Z" fill="#a8aeb4" stroke="#a8aeb4" stroke-width="0.4"/><path d="M729.9 303.3L732.0 304.0L731.2 310.1L729.2 309.5Z" fill="#a9afb5" stroke="#a9afb5" stroke-width="0.4"/><path d="M732.0 304.0L734.1 304.6L733.3 310.8L731.2 310.1Z" fill="#a7adb3" stroke="#a7adb3" stroke-width="0.4"/><path d="M734.1 304.6L736.2 305.3L735.4 311.5L733.3 310.8Z" fill="#959ba1" stroke="#959ba1" stroke-width="0.4"/><path d="M736.2 305.3L738.3 305.9L737.5 312.2L735.4 311.5Z" fill="#959ba2" stroke="#959ba2" stroke-width="0.4"/><path d="M738.3 305.9L740.4 306.6L739.6 312.8L737.5 312.2Z" fill="#949aa1" stroke="#949aa1" stroke-width="0.4"/><path d="M740.4 306.6L742.5 307.2L741.7 313.5L739.6 312.8Z" fill="#949aa1" stroke="#949aa1" stroke-width="0.4"/><path d="M742.5 307.2L744.6 307.9L743.8 314.2L741.7 313.5Z" fill="#949aa1" stroke="#949aa1" stroke-width="0.4"/><path d="M744.6 307.9L746.7 308.5L745.8 314.9L743.8 314.2Z" fill="#959ba2" stroke="#959ba2" stroke-width="0.4"/><path d="M746.7 308.5L748.8 309.2L747.9 315.5L745.8 314.9Z" fill="#959ba2" stroke="#959ba2" stroke-width="0.4"/><path d="M748.8 309.2L750.9 309.8L750.0 316.2L747.9 315.5Z" fill="#959ba2" stroke="#959ba2" stroke-width="0.4"/><path d="M750.9 309.8L753.0 310.5L752.1 316.9L750.0 316.2Z" fill="#969ca3" stroke="#969ca3" stroke-width="0.4"/><path d="M753.0 310.5L755.1 311.1L754.2 317.6L752.1 316.9Z" fill="#979da4" stroke="#979da4" stroke-width="0.4"/><path d="M755.1 311.1L757.2 311.8L756.3 318.2L754.2 317.6Z" fill="#989ea5" stroke="#989ea5" stroke-width="0.4"/><path d="M757.2 311.8L759.3 312.4L758.3 318.9L756.3 318.2Z" fill="#999fa6" stroke="#999fa6" stroke-width="0.4"/><path d="M759.3 312.4L761.4 313.1L760.4 319.6L758.3 318.9Z" fill="#9aa0a7" stroke="#9aa0a7" stroke-width="0.4"/><path d="M761.4 313.1L763.5 313.7L762.5 320.3L760.4 319.6Z" fill="#9ba1a8" stroke="#9ba1a8" stroke-width="0.4"/><path d="M763.5 313.7L765.6 314.4L764.6 320.9L762.5 320.3Z" fill="#9ca2a9" stroke="#9ca2a9" stroke-width="0.4"/><path d="M765.6 314.4L767.7 315.0L766.7 321.6L764.6 320.9Z" fill="#9ea4ab" stroke="#9ea4ab" stroke-width="0.4"/><path d="M767.7 315.0L769.8 315.7L768.8 322.3L766.7 321.6Z" fill="#a0a6ad" stroke="#a0a6ad" stroke-width="0.4"/><path d="M769.8 315.7L771.9 316.3L770.9 323.0L768.8 322.3Z" fill="#a2a8af" stroke="#a2a8af" stroke-width="0.4"/><path d="M771.9 316.3L774.0 317.0L772.9 323.6L770.9 323.0Z" fill="#a3aab1" stroke="#a3aab1" stroke-width="0.4"/><path d="M774.0 317.0L776.1 317.6L775.0 324.3L772.9 323.6Z" fill="#a4aab1" stroke="#a4aab1" stroke-width="0.4"/><path d="M776.1 317.6L778.2 318.3L777.1 325.0L775.0 324.3Z" fill="#a4aab1" stroke="#a4aab1" stroke-width="0.4"/><path d="M778.2 318.3L780.3 318.9L779.2 325.7L777.1 325.0Z" fill="#a4aab1" stroke="#a4aab1" stroke-width="0.4"/><path d="M780.3 318.9L782.4 319.6L781.3 326.3L779.2 325.7Z" fill="#a4aab1" stroke="#a4aab1" stroke-width="0.4"/><path d="M782.4 319.6L784.5 320.2L783.4 327.0L781.3 326.3Z" fill="#a4aab1" stroke="#a4aab1" stroke-width="0.4"/><path d="M784.5 320.2L786.6 320.9L785.4 327.7L783.4 327.0Z" fill="#a4aab1" stroke="#a4aab1" stroke-width="0.4"/><path d="M786.6 320.9L788.7 321.5L787.5 328.4L785.4 327.7Z" fill="#a4aab1" stroke="#a4aab1" stroke-width="0.4"/><path d="M788.7 321.5L790.8 322.2L789.6 329.0L787.5 328.4Z" fill="#a4aab1" stroke="#a4aab1" stroke-width="0.4"/><path d="M790.8 322.2L792.9 322.8L791.7 329.7L789.6 329.0Z" fill="#a9afb6" stroke="#a9afb6" stroke-width="0.4"/><path d="M792.9 322.8L795.0 323.5L793.8 330.4L791.7 329.7Z" fill="#aeb5bc" stroke="#aeb5bc" stroke-width="0.4"/><path d="M795.0 323.5L797.1 324.2L795.9 331.1L793.8 330.4Z" fill="#aeb5bc" stroke="#aeb5bc" stroke-width="0.4"/><path d="M797.1 324.2L799.2 324.8L798.0 331.7L795.9 331.1Z" fill="#afb6bd" stroke="#afb6bd" stroke-width="0.4"/><path d="M799.2 324.8L801.3 325.5L800.0 332.4L798.0 331.7Z" fill="#afb6bd" stroke="#afb6bd" stroke-width="0.4"/><path d="M801.3 325.5L803.3 326.1L802.1 333.1L800.0 332.4Z" fill="#afb6bd" stroke="#afb6bd" stroke-width="0.4"/><path d="M803.3 326.1L805.4 326.8L804.2 333.8L802.1 333.1Z" fill="#afb6bd" stroke="#afb6bd" stroke-width="0.4"/><path d="M805.4 326.8L807.5 327.4L806.3 334.4L804.2 333.8Z" fill="#b0b7be" stroke="#b0b7be" stroke-width="0.4"/><path d="M722.9 307.4L725.0 308.1L724.0 314.2L721.9 313.5Z" fill="#a8aeb4" stroke="#a8aeb4" stroke-width="0.4"/><path d="M725.0 308.1L727.1 308.8L726.0 314.9L724.0 314.2Z" fill="#a8aeb4" stroke="#a8aeb4" stroke-width="0.4"/><path d="M727.1 308.8L729.2 309.5L728.1 315.6L726.0 314.9Z" fill="#a8aeb4" stroke="#a8aeb4" stroke-width="0.4"/><path d="M729.2 309.5L731.2 310.1L730.2 316.3L728.1 315.6Z" fill="#a8aeb4" stroke="#a8aeb4" stroke-width="0.4"/><path d="M731.2 310.1L733.3 310.8L732.3 317.0L730.2 316.3Z" fill="#a7adb3" stroke="#a7adb3" stroke-width="0.4"/><path d="M733.3 310.8L735.4 311.5L734.3 317.7L732.3 317.0Z" fill="#969ca3" stroke="#969ca3" stroke-width="0.4"/><path d="M735.4 311.5L737.5 312.2L736.4 318.4L734.3 317.7Z" fill="#969ca3" stroke="#969ca3" stroke-width="0.4"/><path d="M737.5 312.2L739.6 312.8L738.5 319.1L736.4 318.4Z" fill="#949aa1" stroke="#949aa1" stroke-width="0.4"/><path d="M739.6 312.8L741.7 313.5L740.5 319.8L738.5 319.1Z" fill="#959ba2" stroke="#959ba2" stroke-width="0.4"/><path d="M741.7 313.5L743.8 314.2L742.6 320.5L740.5 319.8Z" fill="#959ba2" stroke="#959ba2" stroke-width="0.4"/><path d="M743.8 314.2L745.8 314.9L744.7 321.2L742.6 320.5Z" fill="#959ba2" stroke="#959ba2" stroke-width="0.4"/><path d="M745.8 314.9L747.9 315.5L746.8 321.9L744.7 321.2Z" fill="#959ba2" stroke="#959ba2" stroke-width="0.4"/><path d="M747.9 315.5L750.0 316.2L748.8 322.6L746.8 321.9Z" fill="#969ca3" stroke="#969ca3" stroke-width="0.4"/><path d="M750.0 316.2L752.1 316.9L750.9 323.3L748.8 322.6Z" fill="#979da4" stroke="#979da4" stroke-width="0.4"/><path d="M752.1 316.9L754.2 317.6L753.0 323.9L750.9 323.3Z" fill="#989ea5" stroke="#989ea5" stroke-width="0.4"/><path d="M754.2 317.6L756.3 318.2L755.1 324.6L753.0 323.9Z" fill="#999fa6" stroke="#999fa6" stroke-width="0.4"/><path d="M756.3 318.2L758.3 318.9L757.1 325.3L755.1 324.6Z" fill="#9aa0a7" stroke="#9aa0a7" stroke-width="0.4"/><path d="M758.3 318.9L760.4 319.6L759.2 326.0L757.1 325.3Z" fill="#9ba1a8" stroke="#9ba1a8" stroke-width="0.4"/><path d="M760.4 319.6L762.5 320.3L761.3 326.7L759.2 326.0Z" fill="#9ca2a9" stroke="#9ca2a9" stroke-width="0.4"/><path d="M762.5 320.3L764.6 320.9L763.4 327.4L761.3 326.7Z" fill="#9da3aa" stroke="#9da3aa" stroke-width="0.4"/><path d="M764.6 320.9L766.7 321.6L765.4 328.1L763.4 327.4Z" fill="#9fa5ac" stroke="#9fa5ac" stroke-width="0.4"/><path d="M766.7 321.6L768.8 322.3L767.5 328.8L765.4 328.1Z" fill="#a1a7ae" stroke="#a1a7ae" stroke-width="0.4"/><path d="M768.8 322.3L770.9 323.0L769.6 329.5L767.5 328.8Z" fill="#a3a9b0" stroke="#a3a9b0" stroke-width="0.4"/><path d="M770.9 323.0L772.9 323.6L771.6 330.2L769.6 329.5Z" fill="#a5abb2" stroke="#a5abb2" stroke-width="0.4"/><path d="M772.9 323.6L775.0 324.3L773.7 330.9L771.6 330.2Z" fill="#a5abb2" stroke="#a5abb2" stroke-width="0.4"/><path d="M775.0 324.3L777.1 325.0L775.8 331.6L773.7 330.9Z" fill="#a5abb2" stroke="#a5abb2" stroke-width="0.4"/><path d="M777.1 325.0L779.2 325.7L777.9 332.3L775.8 331.6Z" fill="#a6acb3" stroke="#a6acb3" stroke-width="0.4"/><path d="M779.2 325.7L781.3 326.3L779.9 333.0L777.9 332.3Z" fill="#a6acb3" stroke="#a6acb3" stroke-width="0.4"/><path d="M781.3 326.3L783.4 327.0L782.0 333.7L779.9 333.0Z" fill="#a5abb2" stroke="#a5abb2" stroke-width="0.4"/><path d="M783.4 327.0L785.4 327.7L784.1 334.4L782.0 333.7Z" fill="#a5abb2" stroke="#a5abb2" stroke-width="0.4"/><path d="M785.4 327.7L787.5 328.4L786.2 335.1L784.1 334.4Z" fill="#a5abb2" stroke="#a5abb2" stroke-width="0.4"/><path d="M787.5 328.4L789.6 329.0L788.2 335.8L786.2 335.1Z" fill="#a4aab1" stroke="#a4aab1" stroke-width="0.4"/><path d="M789.6 329.0L791.7 329.7L790.3 336.5L788.2 335.8Z" fill="#a9afb6" stroke="#a9afb6" stroke-width="0.4"/><path d="M791.7 329.7L793.8 330.4L792.4 337.2L790.3 336.5Z" fill="#adb4bb" stroke="#adb4bb" stroke-width="0.4"/><path d="M793.8 330.4L795.9 331.1L794.5 337.9L792.4 337.2Z" fill="#aeb5bc" stroke="#aeb5bc" stroke-width="0.4"/><path d="M795.9 331.1L798.0 331.7L796.5 338.6L794.5 337.9Z" fill="#afb6bd" stroke="#afb6bd" stroke-width="0.4"/><path d="M798.0 331.7L800.0 332.4L798.6 339.3L796.5 338.6Z" fill="#afb6bd" stroke="#afb6bd" stroke-width="0.4"/><path d="M800.0 332.4L802.1 333.1L800.7 340.0L798.6 339.3Z" fill="#afb6bd" stroke="#afb6bd" stroke-width="0.4"/><path d="M802.1 333.1L804.2 333.8L802.7 340.7L800.7 340.0Z" fill="#afb6bd" stroke="#afb6bd" stroke-width="0.4"/><path d="M804.2 333.8L806.3 334.4L804.8 341.4L802.7 340.7Z" fill="#afb6bd" stroke="#afb6bd" stroke-width="0.4"/><path d="M721.9 313.5L724.0 314.2L722.6 320.2L720.6 319.5Z" fill="#a8aeb4" stroke="#a8aeb4" stroke-width="0.4"/><path d="M724.0 314.2L726.0 314.9L724.7 320.9L722.6 320.2Z" fill="#a8aeb4" stroke="#a8aeb4" stroke-width="0.4"/><path d="M726.0 314.9L728.1 315.6L726.8 321.6L724.7 320.9Z" fill="#a8aeb4" stroke="#a8aeb4" stroke-width="0.4"/><path d="M728.1 315.6L730.2 316.3L728.8 322.4L726.8 321.6Z" fill="#a8aeb4" stroke="#a8aeb4" stroke-width="0.4"/><path d="M730.2 316.3L732.3 317.0L730.9 323.1L728.8 322.4Z" fill="#a7adb3" stroke="#a7adb3" stroke-width="0.4"/><path d="M732.3 317.0L734.3 317.7L733.0 323.8L730.9 323.1Z" fill="#979da4" stroke="#979da4" stroke-width="0.4"/><path d="M734.3 317.7L736.4 318.4L735.0 324.5L733.0 323.8Z" fill="#989ea4" stroke="#989ea4" stroke-width="0.4"/><path d="M736.4 318.4L738.5 319.1L737.1 325.3L735.0 324.5Z" fill="#959ba2" stroke="#959ba2" stroke-width="0.4"/><path d="M738.5 319.1L740.5 319.8L739.1 326.0L737.1 325.3Z" fill="#959ba2" stroke="#959ba2" stroke-width="0.4"/><path d="M740.5 319.8L742.6 320.5L741.2 326.7L739.1 326.0Z" fill="#959ba2" stroke="#959ba2" stroke-width="0.4"/><path d="M742.6 320.5L744.7 321.2L743.3 327.4L741.2 326.7Z" fill="#969ca3" stroke="#969ca3" stroke-width="0.4"/><path d="M744.7 321.2L746.8 321.9L745.3 328.1L743.3 327.4Z" fill="#969ca3" stroke="#969ca3" stroke-width="0.4"/><path d="M746.8 321.9L748.8 322.6L747.4 328.9L745.3 328.1Z" fill="#979da4" stroke="#979da4" stroke-width="0.4"/><path d="M748.8 322.6L750.9 323.3L749.5 329.6L747.4 328.9Z" fill="#979da4" stroke="#979da4" stroke-width="0.4"/><path d="M750.9 323.3L753.0 323.9L751.5 330.3L749.5 329.6Z" fill="#989ea5" stroke="#989ea5" stroke-width="0.4"/><path d="M753.0 323.9L755.1 324.6L753.6 331.0L751.5 330.3Z" fill="#999fa6" stroke="#999fa6" stroke-width="0.4"/><path d="M755.1 324.6L757.1 325.3L755.7 331.7L753.6 331.0Z" fill="#9aa0a7" stroke="#9aa0a7" stroke-width="0.4"/><path d="M757.1 325.3L759.2 326.0L757.7 332.5L755.7 331.7Z" fill="#9ca2a9" stroke="#9ca2a9" stroke-width="0.4"/><path d="M759.2 326.0L761.3 326.7L759.8 333.2L757.7 332.5Z" fill="#9da3aa" stroke="#9da3aa" stroke-width="0.4"/><path d="M761.3 326.7L763.4 327.4L761.8 333.9L759.8 333.2Z" fill="#9ea4ab" stroke="#9ea4ab" stroke-width="0.4"/><path d="M763.4 327.4L765.4 328.1L763.9 334.6L761.8 333.9Z" fill="#a0a6ad" stroke="#a0a6ad" stroke-width="0.4"/><path d="M765.4 328.1L767.5 328.8L766.0 335.3L763.9 334.6Z" fill="#a2a8af" stroke="#a2a8af" stroke-width="0.4"/><path d="M767.5 328.8L769.6 329.5L768.0 336.1L766.0 335.3Z" fill="#a4abb2" stroke="#a4abb2" stroke-width="0.4"/><path d="M769.6 329.5L771.6 330.2L770.1 336.8L768.0 336.1Z" fill="#a6acb3" stroke="#a6acb3" stroke-width="0.4"/><path d="M771.6 330.2L773.7 330.9L772.2 337.5L770.1 336.8Z" fill="#a6adb4" stroke="#a6adb4" stroke-width="0.4"/><path d="M773.7 330.9L775.8 331.6L774.2 338.2L772.2 337.5Z" fill="#a7adb4" stroke="#a7adb4" stroke-width="0.4"/><path d="M775.8 331.6L777.9 332.3L776.3 338.9L774.2 338.2Z" fill="#a7adb4" stroke="#a7adb4" stroke-width="0.4"/><path d="M777.9 332.3L779.9 333.0L778.4 339.7L776.3 338.9Z" fill="#a7adb4" stroke="#a7adb4" stroke-width="0.4"/><path d="M779.9 333.0L782.0 333.7L780.4 340.4L778.4 339.7Z" fill="#a6adb4" stroke="#a6adb4" stroke-width="0.4"/><path d="M782.0 333.7L784.1 334.4L782.5 341.1L780.4 340.4Z" fill="#a6acb3" stroke="#a6acb3" stroke-width="0.4"/><path d="M784.1 334.4L786.2 335.1L784.6 341.8L782.5 341.1Z" fill="#a5acb3" stroke="#a5acb3" stroke-width="0.4"/><path d="M786.2 335.1L788.2 335.8L786.6 342.5L784.6 341.8Z" fill="#a5abb2" stroke="#a5abb2" stroke-width="0.4"/><path d="M788.2 335.8L790.3 336.5L788.7 343.3L786.6 342.5Z" fill="#a9afb6" stroke="#a9afb6" stroke-width="0.4"/><path d="M790.3 336.5L792.4 337.2L790.7 344.0L788.7 343.3Z" fill="#adb4bb" stroke="#adb4bb" stroke-width="0.4"/><path d="M792.4 337.2L794.5 337.9L792.8 344.7L790.7 344.0Z" fill="#aeb5bc" stroke="#aeb5bc" stroke-width="0.4"/><path d="M794.5 337.9L796.5 338.6L794.9 345.4L792.8 344.7Z" fill="#aeb5bc" stroke="#aeb5bc" stroke-width="0.4"/><path d="M796.5 338.6L798.6 339.3L796.9 346.2L794.9 345.4Z" fill="#afb6bd" stroke="#afb6bd" stroke-width="0.4"/><path d="M798.6 339.3L800.7 340.0L799.0 346.9L796.9 346.2Z" fill="#afb6bd" stroke="#afb6bd" stroke-width="0.4"/><path d="M800.7 340.0L802.7 340.7L801.1 347.6L799.0 346.9Z" fill="#afb6bd" stroke="#afb6bd" stroke-width="0.4"/><path d="M802.7 340.7L804.8 341.4L803.1 348.3L801.1 347.6Z" fill="#afb6bd" stroke="#afb6bd" stroke-width="0.4"/><path d="M720.6 319.5L722.6 320.2L721.0 326.2L719.0 325.5Z" fill="#a8aeb4" stroke="#a8aeb4" stroke-width="0.4"/><path d="M722.6 320.2L724.7 320.9L723.1 326.9L721.0 326.2Z" fill="#a8aeb4" stroke="#a8aeb4" stroke-width="0.4"/><path d="M724.7 320.9L726.8 321.6L725.2 327.7L723.1 326.9Z" fill="#a8aeb4" stroke="#a8aeb4" stroke-width="0.4"/><path d="M726.8 321.6L728.8 322.4L727.2 328.4L725.2 327.7Z" fill="#a8aeb4" stroke="#a8aeb4" stroke-width="0.4"/><path d="M728.8 322.4L730.9 323.1L729.3 329.2L727.2 328.4Z" fill="#a7adb3" stroke="#a7adb3" stroke-width="0.4"/><path d="M730.9 323.1L733.0 323.8L731.3 329.9L729.3 329.2Z" fill="#999fa6" stroke="#999fa6" stroke-width="0.4"/><path d="M733.0 323.8L735.0 324.5L733.4 330.7L731.3 329.9Z" fill="#999fa6" stroke="#999fa6" stroke-width="0.4"/><path d="M735.0 324.5L737.1 325.3L735.4 331.4L733.4 330.7Z" fill="#969ca3" stroke="#969ca3" stroke-width="0.4"/><path d="M737.1 325.3L739.1 326.0L737.5 332.1L735.4 331.4Z" fill="#969ca3" stroke="#969ca3" stroke-width="0.4"/><path d="M739.1 326.0L741.2 326.7L739.5 332.9L737.5 332.1Z" fill="#969ca3" stroke="#969ca3" stroke-width="0.4"/><path d="M741.2 326.7L743.3 327.4L741.6 333.6L739.5 332.9Z" fill="#969ca3" stroke="#969ca3" stroke-width="0.4"/><path d="M743.3 327.4L745.3 328.1L743.7 334.4L741.6 333.6Z" fill="#979da4" stroke="#979da4" stroke-width="0.4"/><path d="M745.3 328.1L747.4 328.9L745.7 335.1L743.7 334.4Z" fill="#979da4" stroke="#979da4" stroke-width="0.4"/><path d="M747.4 328.9L749.5 329.6L747.8 335.9L745.7 335.1Z" fill="#989ea5" stroke="#989ea5" stroke-width="0.4"/><path d="M749.5 329.6L751.5 330.3L749.8 336.6L747.8 335.9Z" fill="#999fa6" stroke="#999fa6" stroke-width="0.4"/><path d="M751.5 330.3L753.6 331.0L751.9 337.3L749.8 336.6Z" fill="#9aa0a7" stroke="#9aa0a7" stroke-width="0.4"/><path d="M753.6 331.0L755.7 331.7L753.9 338.1L751.9 337.3Z" fill="#9ba1a8" stroke="#9ba1a8" stroke-width="0.4"/><path d="M755.7 331.7L757.7 332.5L756.0 338.8L753.9 338.1Z" fill="#9ca2a9" stroke="#9ca2a9" stroke-width="0.4"/><path d="M757.7 332.5L759.8 333.2L758.0 339.6L756.0 338.8Z" fill="#9da3aa" stroke="#9da3aa" stroke-width="0.4"/><path d="M759.8 333.2L761.8 333.9L760.1 340.3L758.0 339.6Z" fill="#9fa5ac" stroke="#9fa5ac" stroke-width="0.4"/><path d="M761.8 333.9L763.9 334.6L762.2 341.1L760.1 340.3Z" fill="#a1a7ae" stroke="#a1a7ae" stroke-width="0.4"/><path d="M763.9 334.6L766.0 335.3L764.2 341.8L762.2 341.1Z" fill="#a3a9b0" stroke="#a3a9b0" stroke-width="0.4"/><path d="M766.0 335.3L768.0 336.1L766.3 342.5L764.2 341.8Z" fill="#a6acb3" stroke="#a6acb3" stroke-width="0.4"/><path d="M768.0 336.1L770.1 336.8L768.3 343.3L766.3 342.5Z" fill="#a8aeb5" stroke="#a8aeb5" stroke-width="0.4"/><path d="M770.1 336.8L772.2 337.5L770.4 344.0L768.3 343.3Z" fill="#a8aeb5" stroke="#a8aeb5" stroke-width="0.4"/><path d="M772.2 337.5L774.2 338.2L772.4 344.8L770.4 344.0Z" fill="#a8aeb5" stroke="#a8aeb5" stroke-width="0.4"/><path d="M774.2 338.2L776.3 338.9L774.5 345.5L772.4 344.8Z" fill="#a8afb6" stroke="#a8afb6" stroke-width="0.4"/><path d="M776.3 338.9L778.4 339.7L776.5 346.3L774.5 345.5Z" fill="#a8afb6" stroke="#a8afb6" stroke-width="0.4"/><path d="M778.4 339.7L780.4 340.4L778.6 347.0L776.5 346.3Z" fill="#a8aeb5" stroke="#a8aeb5" stroke-width="0.4"/><path d="M780.4 340.4L782.5 341.1L780.7 347.8L778.6 347.0Z" fill="#a7adb4" stroke="#a7adb4" stroke-width="0.4"/><path d="M782.5 341.1L784.6 341.8L782.7 348.5L780.7 347.8Z" fill="#a6acb3" stroke="#a6acb3" stroke-width="0.4"/><path d="M784.6 341.8L786.6 342.5L784.8 349.2L782.7 348.5Z" fill="#a5acb3" stroke="#a5acb3" stroke-width="0.4"/><path d="M786.6 342.5L788.7 343.3L786.8 350.0L784.8 349.2Z" fill="#a9afb6" stroke="#a9afb6" stroke-width="0.4"/><path d="M788.7 343.3L790.7 344.0L788.9 350.7L786.8 350.0Z" fill="#acb3ba" stroke="#acb3ba" stroke-width="0.4"/><path d="M790.7 344.0L792.8 344.7L790.9 351.5L788.9 350.7Z" fill="#aeb5bc" stroke="#aeb5bc" stroke-width="0.4"/><path d="M792.8 344.7L794.9 345.4L793.0 352.2L790.9 351.5Z" fill="#aeb5bc" stroke="#aeb5bc" stroke-width="0.4"/><path d="M794.9 345.4L796.9 346.2L795.0 353.0L793.0 352.2Z" fill="#afb6bd" stroke="#afb6bd" stroke-width="0.4"/><path d="M796.9 346.2L799.0 346.9L797.1 353.7L795.0 353.0Z" fill="#afb6bd" stroke="#afb6bd" stroke-width="0.4"/><path d="M799.0 346.9L801.1 347.6L799.2 354.4L797.1 353.7Z" fill="#afb6bd" stroke="#afb6bd" stroke-width="0.4"/><path d="M801.1 347.6L803.1 348.3L801.2 355.2L799.2 354.4Z" fill="#afb6bd" stroke="#afb6bd" stroke-width="0.4"/><path d="M719.0 325.5L721.0 326.2L719.2 332.1L717.1 331.4Z" fill="#a8aeb4" stroke="#a8aeb4" stroke-width="0.4"/><path d="M721.0 326.2L723.1 326.9L721.2 332.9L719.2 332.1Z" fill="#a8aeb4" stroke="#a8aeb4" stroke-width="0.4"/><path d="M723.1 326.9L725.2 327.7L723.3 333.7L721.2 332.9Z" fill="#a8aeb4" stroke="#a8aeb4" stroke-width="0.4"/><path d="M725.2 327.7L727.2 328.4L725.3 334.4L723.3 333.7Z" fill="#a8aeb4" stroke="#a8aeb4" stroke-width="0.4"/><path d="M727.2 328.4L729.3 329.2L727.4 335.2L725.3 334.4Z" fill="#a7adb3" stroke="#a7adb3" stroke-width="0.4"/><path d="M729.3 329.2L731.3 329.9L729.4 336.0L727.4 335.2Z" fill="#9aa0a7" stroke="#9aa0a7" stroke-width="0.4"/><path d="M731.3 329.9L733.4 330.7L731.5 336.7L729.4 336.0Z" fill="#9ba1a7" stroke="#9ba1a7" stroke-width="0.4"/><path d="M733.4 330.7L735.4 331.4L733.5 337.5L731.5 336.7Z" fill="#979da3" stroke="#979da3" stroke-width="0.4"/><path d="M735.4 331.4L737.5 332.1L735.6 338.3L733.5 337.5Z" fill="#969ca3" stroke="#969ca3" stroke-width="0.4"/><path d="M737.5 332.1L739.5 332.9L737.6 339.0L735.6 338.3Z" fill="#979da4" stroke="#979da4" stroke-width="0.4"/><path d="M739.5 332.9L741.6 333.6L739.7 339.8L737.6 339.0Z" fill="#979da4" stroke="#979da4" stroke-width="0.4"/><path d="M741.6 333.6L743.7 334.4L741.7 340.6L739.7 339.8Z" fill="#979da4" stroke="#979da4" stroke-width="0.4"/><path d="M743.7 334.4L745.7 335.1L743.8 341.3L741.7 340.6Z" fill="#989ea5" stroke="#989ea5" stroke-width="0.4"/><path d="M745.7 335.1L747.8 335.9L745.8 342.1L743.8 341.3Z" fill="#989ea5" stroke="#989ea5" stroke-width="0.4"/><path d="M747.8 335.9L749.8 336.6L747.9 342.9L745.8 342.1Z" fill="#999fa6" stroke="#999fa6" stroke-width="0.4"/><path d="M749.8 336.6L751.9 337.3L749.9 343.6L747.9 342.9Z" fill="#9ba1a8" stroke="#9ba1a8" stroke-width="0.4"/><path d="M751.9 337.3L753.9 338.1L752.0 344.4L749.9 343.6Z" fill="#9ca2a9" stroke="#9ca2a9" stroke-width="0.4"/><path d="M753.9 338.1L756.0 338.8L754.0 345.2L752.0 344.4Z" fill="#9da3aa" stroke="#9da3aa" stroke-width="0.4"/><path d="M756.0 338.8L758.0 339.6L756.1 345.9L754.0 345.2Z" fill="#9ea4ab" stroke="#9ea4ab" stroke-width="0.4"/><path d="M758.0 339.6L760.1 340.3L758.1 346.7L756.1 345.9Z" fill="#a0a6ad" stroke="#a0a6ad" stroke-width="0.4"/><path d="M760.1 340.3L762.2 341.1L760.2 347.5L758.1 346.7Z" fill="#a2a8af" stroke="#a2a8af" stroke-width="0.4"/><path d="M762.2 341.1L764.2 341.8L762.2 348.2L760.2 347.5Z" fill="#a4aab1" stroke="#a4aab1" stroke-width="0.4"/><path d="M764.2 341.8L766.3 342.5L764.3 349.0L762.2 348.2Z" fill="#a7adb4" stroke="#a7adb4" stroke-width="0.4"/><path d="M766.3 342.5L768.3 343.3L766.3 349.8L764.3 349.0Z" fill="#a9afb6" stroke="#a9afb6" stroke-width="0.4"/><path d="M768.3 343.3L770.4 344.0L768.3 350.5L766.3 349.8Z" fill="#a9b0b7" stroke="#a9b0b7" stroke-width="0.4"/><path d="M770.4 344.0L772.4 344.8L770.4 351.3L768.3 350.5Z" fill="#a9b0b7" stroke="#a9b0b7" stroke-width="0.4"/><path d="M772.4 344.8L774.5 345.5L772.4 352.1L770.4 351.3Z" fill="#aab0b7" stroke="#aab0b7" stroke-width="0.4"/><path d="M774.5 345.5L776.5 346.3L774.5 352.8L772.4 352.1Z" fill="#aab0b7" stroke="#aab0b7" stroke-width="0.4"/><path d="M776.5 346.3L778.6 347.0L776.5 353.6L774.5 352.8Z" fill="#a9afb6" stroke="#a9afb6" stroke-width="0.4"/><path d="M778.6 347.0L780.7 347.8L778.6 354.4L776.5 353.6Z" fill="#a8aeb5" stroke="#a8aeb5" stroke-width="0.4"/><path d="M780.7 347.8L782.7 348.5L780.6 355.1L778.6 354.4Z" fill="#a7adb4" stroke="#a7adb4" stroke-width="0.4"/><path d="M782.7 348.5L784.8 349.2L782.7 355.9L780.6 355.1Z" fill="#a6acb3" stroke="#a6acb3" stroke-width="0.4"/><path d="M784.8 349.2L786.8 350.0L784.7 356.6L782.7 355.9Z" fill="#a9afb6" stroke="#a9afb6" stroke-width="0.4"/><path d="M786.8 350.0L788.9 350.7L786.8 357.4L784.7 356.6Z" fill="#acb3ba" stroke="#acb3ba" stroke-width="0.4"/><path d="M788.9 350.7L790.9 351.5L788.8 358.2L786.8 357.4Z" fill="#aeb5bc" stroke="#aeb5bc" stroke-width="0.4"/><path d="M790.9 351.5L793.0 352.2L790.9 358.9L788.8 358.2Z" fill="#aeb5bc" stroke="#aeb5bc" stroke-width="0.4"/><path d="M793.0 352.2L795.0 353.0L792.9 359.7L790.9 358.9Z" fill="#aeb5bc" stroke="#aeb5bc" stroke-width="0.4"/><path d="M795.0 353.0L797.1 353.7L795.0 360.5L792.9 359.7Z" fill="#afb6bd" stroke="#afb6bd" stroke-width="0.4"/><path d="M797.1 353.7L799.2 354.4L797.0 361.2L795.0 360.5Z" fill="#afb6bd" stroke="#afb6bd" stroke-width="0.4"/><path d="M799.2 354.4L801.2 355.2L799.1 362.0L797.0 361.2Z" fill="#afb6bd" stroke="#afb6bd" stroke-width="0.4"/><path d="M717.1 331.4L719.2 332.1L717.1 338.0L715.0 337.3Z" fill="#a8aeb4" stroke="#a8aeb4" stroke-width="0.4"/><path d="M719.2 332.1L721.2 332.9L719.1 338.8L717.1 338.0Z" fill="#a8aeb4" stroke="#a8aeb4" stroke-width="0.4"/><path d="M721.2 332.9L723.3 333.7L721.2 339.6L719.1 338.8Z" fill="#a8aeb4" stroke="#a8aeb4" stroke-width="0.4"/><path d="M723.3 333.7L725.3 334.4L723.2 340.4L721.2 339.6Z" fill="#a8aeb4" stroke="#a8aeb4" stroke-width="0.4"/><path d="M725.3 334.4L727.4 335.2L725.2 341.2L723.2 340.4Z" fill="#a7adb3" stroke="#a7adb3" stroke-width="0.4"/><path d="M727.4 335.2L729.4 336.0L727.3 342.0L725.2 341.2Z" fill="#9ca2a8" stroke="#9ca2a8" stroke-width="0.4"/><path d="M729.4 336.0L731.5 336.7L729.3 342.8L727.3 342.0Z" fill="#9ca2a8" stroke="#9ca2a8" stroke-width="0.4"/><path d="M731.5 336.7L733.5 337.5L731.4 343.6L729.3 342.8Z" fill="#979da4" stroke="#979da4" stroke-width="0.4"/><path d="M733.5 337.5L735.6 338.3L733.4 344.3L731.4 343.6Z" fill="#979da4" stroke="#979da4" stroke-width="0.4"/><path d="M735.6 338.3L737.6 339.0L735.5 345.1L733.4 344.3Z" fill="#979da4" stroke="#979da4" stroke-width="0.4"/><path d="M737.6 339.0L739.7 339.8L737.5 345.9L735.5 345.1Z" fill="#979da4" stroke="#979da4" stroke-width="0.4"/><path d="M739.7 339.8L741.7 340.6L739.5 346.7L737.5 345.9Z" fill="#989ea5" stroke="#989ea5" stroke-width="0.4"/><path d="M741.7 340.6L743.8 341.3L741.6 347.5L739.5 346.7Z" fill="#989ea5" stroke="#989ea5" stroke-width="0.4"/><path d="M743.8 341.3L745.8 342.1L743.6 348.3L741.6 347.5Z" fill="#999fa6" stroke="#999fa6" stroke-width="0.4"/><path d="M745.8 342.1L747.9 342.9L745.7 349.1L743.6 348.3Z" fill="#9aa0a7" stroke="#9aa0a7" stroke-width="0.4"/><path d="M747.9 342.9L749.9 343.6L747.7 349.9L745.7 349.1Z" fill="#9ba1a8" stroke="#9ba1a8" stroke-width="0.4"/><path d="M749.9 343.6L752.0 344.4L749.8 350.7L747.7 349.9Z" fill="#9ca2a9" stroke="#9ca2a9" stroke-width="0.4"/><path d="M752.0 344.4L754.0 345.2L751.8 351.4L749.8 350.7Z" fill="#9ea4ab" stroke="#9ea4ab" stroke-width="0.4"/><path d="M754.0 345.2L756.1 345.9L753.8 352.2L751.8 351.4Z" fill="#9fa5ac" stroke="#9fa5ac" stroke-width="0.4"/><path d="M756.1 345.9L758.1 346.7L755.9 353.0L753.8 352.2Z" fill="#a0a6ad" stroke="#a0a6ad" stroke-width="0.4"/><path d="M758.1 346.7L760.2 347.5L757.9 353.8L755.9 353.0Z" fill="#a2a9b0" stroke="#a2a9b0" stroke-width="0.4"/><path d="M760.2 347.5L762.2 348.2L760.0 354.6L757.9 353.8Z" fill="#a5acb3" stroke="#a5acb3" stroke-width="0.4"/><path d="M762.2 348.2L764.3 349.0L762.0 355.4L760.0 354.6Z" fill="#a8afb6" stroke="#a8afb6" stroke-width="0.4"/><path d="M764.3 349.0L766.3 349.8L764.0 356.2L762.0 355.4Z" fill="#aab1b8" stroke="#aab1b8" stroke-width="0.4"/><path d="M766.3 349.8L768.3 350.5L766.1 357.0L764.0 356.2Z" fill="#abb1b8" stroke="#abb1b8" stroke-width="0.4"/><path d="M768.3 350.5L770.4 351.3L768.1 357.8L766.1 357.0Z" fill="#abb1b8" stroke="#abb1b8" stroke-width="0.4"/><path d="M770.4 351.3L772.4 352.1L770.2 358.5L768.1 357.8Z" fill="#abb2b9" stroke="#abb2b9" stroke-width="0.4"/><path d="M772.4 352.1L774.5 352.8L772.2 359.3L770.2 358.5Z" fill="#abb1b8" stroke="#abb1b8" stroke-width="0.4"/><path d="M774.5 352.8L776.5 353.6L774.3 360.1L772.2 359.3Z" fill="#aab0b7" stroke="#aab0b7" stroke-width="0.4"/><path d="M776.5 353.6L778.6 354.4L776.3 360.9L774.3 360.1Z" fill="#a9afb6" stroke="#a9afb6" stroke-width="0.4"/><path d="M778.6 354.4L780.6 355.1L778.3 361.7L776.3 360.9Z" fill="#a7aeb5" stroke="#a7aeb5" stroke-width="0.4"/><path d="M780.6 355.1L782.7 355.9L780.4 362.5L778.3 361.7Z" fill="#a6adb4" stroke="#a6adb4" stroke-width="0.4"/><path d="M782.7 355.9L784.7 356.6L782.4 363.3L780.4 362.5Z" fill="#a9afb6" stroke="#a9afb6" stroke-width="0.4"/><path d="M784.7 356.6L786.8 357.4L784.5 364.1L782.4 363.3Z" fill="#acb3ba" stroke="#acb3ba" stroke-width="0.4"/><path d="M786.8 357.4L788.8 358.2L786.5 364.8L784.5 364.1Z" fill="#adb4bb" stroke="#adb4bb" stroke-width="0.4"/><path d="M788.8 358.2L790.9 358.9L788.6 365.6L786.5 364.8Z" fill="#aeb5bc" stroke="#aeb5bc" stroke-width="0.4"/><path d="M790.9 358.9L792.9 359.7L790.6 366.4L788.6 365.6Z" fill="#aeb5bc" stroke="#aeb5bc" stroke-width="0.4"/><path d="M792.9 359.7L795.0 360.5L792.6 367.2L790.6 366.4Z" fill="#aeb5bc" stroke="#aeb5bc" stroke-width="0.4"/><path d="M795.0 360.5L797.0 361.2L794.7 368.0L792.6 367.2Z" fill="#afb6bd" stroke="#afb6bd" stroke-width="0.4"/><path d="M797.0 361.2L799.1 362.0L796.7 368.8L794.7 368.0Z" fill="#afb6bd" stroke="#afb6bd" stroke-width="0.4"/><path d="M715.0 337.3L717.1 338.0L714.7 343.9L712.7 343.1Z" fill="#a8aeb4" stroke="#a8aeb4" stroke-width="0.4"/><path d="M717.1 338.0L719.1 338.8L716.8 344.7L714.7 343.9Z" fill="#a8aeb4" stroke="#a8aeb4" stroke-width="0.4"/><path d="M719.1 338.8L721.2 339.6L718.8 345.5L716.8 344.7Z" fill="#a8aeb4" stroke="#a8aeb4" stroke-width="0.4"/><path d="M721.2 339.6L723.2 340.4L720.8 346.3L718.8 345.5Z" fill="#a8aeb4" stroke="#a8aeb4" stroke-width="0.4"/><path d="M723.2 340.4L725.2 341.2L722.9 347.1L720.8 346.3Z" fill="#a7adb3" stroke="#a7adb3" stroke-width="0.4"/><path d="M725.2 341.2L727.3 342.0L724.9 347.9L722.9 347.1Z" fill="#9da3aa" stroke="#9da3aa" stroke-width="0.4"/><path d="M727.3 342.0L729.3 342.8L727.0 348.8L724.9 347.9Z" fill="#9da3aa" stroke="#9da3aa" stroke-width="0.4"/><path d="M729.3 342.8L731.4 343.6L729.0 349.6L727.0 348.8Z" fill="#989ea5" stroke="#989ea5" stroke-width="0.4"/><path d="M731.4 343.6L733.4 344.3L731.0 350.4L729.0 349.6Z" fill="#979da4" stroke="#979da4" stroke-width="0.4"/><path d="M733.4 344.3L735.5 345.1L733.1 351.2L731.0 350.4Z" fill="#989ea5" stroke="#989ea5" stroke-width="0.4"/><path d="M735.5 345.1L737.5 345.9L735.1 352.0L733.1 351.2Z" fill="#989ea5" stroke="#989ea5" stroke-width="0.4"/><path d="M737.5 345.9L739.5 346.7L737.1 352.8L735.1 352.0Z" fill="#989ea5" stroke="#989ea5" stroke-width="0.4"/><path d="M739.5 346.7L741.6 347.5L739.2 353.6L737.1 352.8Z" fill="#999fa6" stroke="#999fa6" stroke-width="0.4"/><path d="M741.6 347.5L743.6 348.3L741.2 354.4L739.2 353.6Z" fill="#999fa6" stroke="#999fa6" stroke-width="0.4"/><path d="M743.6 348.3L745.7 349.1L743.2 355.2L741.2 354.4Z" fill="#9aa0a7" stroke="#9aa0a7" stroke-width="0.4"/><path d="M745.7 349.1L747.7 349.9L745.3 356.1L743.2 355.2Z" fill="#9ca2a9" stroke="#9ca2a9" stroke-width="0.4"/><path d="M747.7 349.9L749.8 350.7L747.3 356.9L745.3 356.1Z" fill="#9da3aa" stroke="#9da3aa" stroke-width="0.4"/><path d="M749.8 350.7L751.8 351.4L749.4 357.7L747.3 356.9Z" fill="#9ea4ab" stroke="#9ea4ab" stroke-width="0.4"/><path d="M751.8 351.4L753.8 352.2L751.4 358.5L749.4 357.7Z" fill="#a0a6ad" stroke="#a0a6ad" stroke-width="0.4"/><path d="M753.8 352.2L755.9 353.0L753.4 359.3L751.4 358.5Z" fill="#a1a7ae" stroke="#a1a7ae" stroke-width="0.4"/><path d="M755.9 353.0L757.9 353.8L755.5 360.1L753.4 359.3Z" fill="#a3aab1" stroke="#a3aab1" stroke-width="0.4"/><path d="M757.9 353.8L760.0 354.6L757.5 360.9L755.5 360.1Z" fill="#a7adb4" stroke="#a7adb4" stroke-width="0.4"/><path d="M760.0 354.6L762.0 355.4L759.5 361.7L757.5 360.9Z" fill="#aab0b7" stroke="#aab0b7" stroke-width="0.4"/><path d="M762.0 355.4L764.0 356.2L761.6 362.5L759.5 361.7Z" fill="#acb2b9" stroke="#acb2b9" stroke-width="0.4"/><path d="M764.0 356.2L766.1 357.0L763.6 363.4L761.6 362.5Z" fill="#acb3ba" stroke="#acb3ba" stroke-width="0.4"/><path d="M766.1 357.0L768.1 357.8L765.6 364.2L763.6 363.4Z" fill="#acb3ba" stroke="#acb3ba" stroke-width="0.4"/><path d="M768.1 357.8L770.2 358.5L767.7 365.0L765.6 364.2Z" fill="#acb3ba" stroke="#acb3ba" stroke-width="0.4"/><path d="M770.2 358.5L772.2 359.3L769.7 365.8L767.7 365.0Z" fill="#acb3ba" stroke="#acb3ba" stroke-width="0.4"/><path d="M772.2 359.3L774.3 360.1L771.8 366.6L769.7 365.8Z" fill="#abb1b8" stroke="#abb1b8" stroke-width="0.4"/><path d="M774.3 360.1L776.3 360.9L773.8 367.4L771.8 366.6Z" fill="#aab0b7" stroke="#aab0b7" stroke-width="0.4"/><path d="M776.3 360.9L778.3 361.7L775.8 368.2L773.8 367.4Z" fill="#a8afb6" stroke="#a8afb6" stroke-width="0.4"/><path d="M778.3 361.7L780.4 362.5L777.9 369.0L775.8 368.2Z" fill="#a7adb4" stroke="#a7adb4" stroke-width="0.4"/><path d="M780.4 362.5L782.4 363.3L779.9 369.8L777.9 369.0Z" fill="#a9b0b7" stroke="#a9b0b7" stroke-width="0.4"/><path d="M782.4 363.3L784.5 364.1L781.9 370.7L779.9 369.8Z" fill="#abb2b9" stroke="#abb2b9" stroke-width="0.4"/><path d="M784.5 364.1L786.5 364.8L784.0 371.5L781.9 370.7Z" fill="#adb4bb" stroke="#adb4bb" stroke-width="0.4"/><path d="M786.5 364.8L788.6 365.6L786.0 372.3L784.0 371.5Z" fill="#aeb5bc" stroke="#aeb5bc" stroke-width="0.4"/><path d="M788.6 365.6L790.6 366.4L788.0 373.1L786.0 372.3Z" fill="#aeb5bc" stroke="#aeb5bc" stroke-width="0.4"/><path d="M790.6 366.4L792.6 367.2L790.1 373.9L788.0 373.1Z" fill="#aeb5bc" stroke="#aeb5bc" stroke-width="0.4"/><path d="M792.6 367.2L794.7 368.0L792.1 374.7L790.1 373.9Z" fill="#aeb5bc" stroke="#aeb5bc" stroke-width="0.4"/><path d="M794.7 368.0L796.7 368.8L794.1 375.5L792.1 374.7Z" fill="#aeb5bc" stroke="#aeb5bc" stroke-width="0.4"/><path d="M712.7 343.1L714.7 343.9L712.2 349.7L710.1 348.8Z" fill="#a7adb3" stroke="#a7adb3" stroke-width="0.4"/><path d="M714.7 343.9L716.8 344.7L714.2 350.5L712.2 349.7Z" fill="#a8aeb4" stroke="#a8aeb4" stroke-width="0.4"/><path d="M716.8 344.7L718.8 345.5L716.2 351.3L714.2 350.5Z" fill="#a8aeb4" stroke="#a8aeb4" stroke-width="0.4"/><path d="M718.8 345.5L720.8 346.3L718.3 352.2L716.2 351.3Z" fill="#a8aeb4" stroke="#a8aeb4" stroke-width="0.4"/><path d="M720.8 346.3L722.9 347.1L720.3 353.0L718.3 352.2Z" fill="#a7adb3" stroke="#a7adb3" stroke-width="0.4"/><path d="M722.9 347.1L724.9 347.9L722.3 353.9L720.3 353.0Z" fill="#9fa5ab" stroke="#9fa5ab" stroke-width="0.4"/><path d="M724.9 347.9L727.0 348.8L724.4 354.7L722.3 353.9Z" fill="#9fa5ab" stroke="#9fa5ab" stroke-width="0.4"/><path d="M727.0 348.8L729.0 349.6L726.4 355.5L724.4 354.7Z" fill="#999fa6" stroke="#999fa6" stroke-width="0.4"/><path d="M729.0 349.6L731.0 350.4L728.4 356.4L726.4 355.5Z" fill="#989ea5" stroke="#989ea5" stroke-width="0.4"/><path d="M731.0 350.4L733.1 351.2L730.4 357.2L728.4 356.4Z" fill="#989ea5" stroke="#989ea5" stroke-width="0.4"/><path d="M733.1 351.2L735.1 352.0L732.5 358.0L730.4 357.2Z" fill="#999fa6" stroke="#999fa6" stroke-width="0.4"/><path d="M735.1 352.0L737.1 352.8L734.5 358.9L732.5 358.0Z" fill="#999fa6" stroke="#999fa6" stroke-width="0.4"/><path d="M737.1 352.8L739.2 353.6L736.5 359.7L734.5 358.9Z" fill="#999fa6" stroke="#999fa6" stroke-width="0.4"/><path d="M739.2 353.6L741.2 354.4L738.6 360.5L736.5 359.7Z" fill="#9aa0a7" stroke="#9aa0a7" stroke-width="0.4"/><path d="M741.2 354.4L743.2 355.2L740.6 361.4L738.6 360.5Z" fill="#9ba1a8" stroke="#9ba1a8" stroke-width="0.4"/><path d="M743.2 355.2L745.3 356.1L742.6 362.2L740.6 361.4Z" fill="#9ca2a9" stroke="#9ca2a9" stroke-width="0.4"/><path d="M745.3 356.1L747.3 356.9L744.7 363.0L742.6 362.2Z" fill="#9ea4ab" stroke="#9ea4ab" stroke-width="0.4"/><path d="M747.3 356.9L749.4 357.7L746.7 363.9L744.7 363.0Z" fill="#9fa5ac" stroke="#9fa5ac" stroke-width="0.4"/><path d="M749.4 357.7L751.4 358.5L748.7 364.7L746.7 363.9Z" fill="#a1a7ae" stroke="#a1a7ae" stroke-width="0.4"/><path d="M751.4 358.5L753.4 359.3L750.8 365.5L748.7 364.7Z" fill="#a2a8af" stroke="#a2a8af" stroke-width="0.4"/><path d="M753.4 359.3L755.5 360.1L752.8 366.4L750.8 365.5Z" fill="#a4abb2" stroke="#a4abb2" stroke-width="0.4"/><path d="M755.5 360.1L757.5 360.9L754.8 367.2L752.8 366.4Z" fill="#a8aeb5" stroke="#a8aeb5" stroke-width="0.4"/><path d="M757.5 360.9L759.5 361.7L756.8 368.0L754.8 367.2Z" fill="#abb1b8" stroke="#abb1b8" stroke-width="0.4"/><path d="M759.5 361.7L761.6 362.5L758.9 368.9L756.8 368.0Z" fill="#adb4bb" stroke="#adb4bb" stroke-width="0.4"/><path d="M761.6 362.5L763.6 363.4L760.9 369.7L758.9 368.9Z" fill="#adb4bb" stroke="#adb4bb" stroke-width="0.4"/><path d="M763.6 363.4L765.6 364.2L762.9 370.5L760.9 369.7Z" fill="#aeb4bb" stroke="#aeb4bb" stroke-width="0.4"/><path d="M765.6 364.2L767.7 365.0L765.0 371.4L762.9 370.5Z" fill="#aeb4bb" stroke="#aeb4bb" stroke-width="0.4"/><path d="M767.7 365.0L769.7 365.8L767.0 372.2L765.0 371.4Z" fill="#aeb4bb" stroke="#aeb4bb" stroke-width="0.4"/><path d="M769.7 365.8L771.8 366.6L769.0 373.0L767.0 372.2Z" fill="#acb3ba" stroke="#acb3ba" stroke-width="0.4"/><path d="M771.8 366.6L773.8 367.4L771.1 373.9L769.0 373.0Z" fill="#aab1b8" stroke="#aab1b8" stroke-width="0.4"/><path d="M773.8 367.4L775.8 368.2L773.1 374.7L771.1 373.9Z" fill="#a9b0b7" stroke="#a9b0b7" stroke-width="0.4"/><path d="M775.8 368.2L777.9 369.0L775.1 375.5L773.1 374.7Z" fill="#a7aeb5" stroke="#a7aeb5" stroke-width="0.4"/><path d="M777.9 369.0L779.9 369.8L777.1 376.4L775.1 375.5Z" fill="#a9b0b7" stroke="#a9b0b7" stroke-width="0.4"/><path d="M779.9 369.8L781.9 370.7L779.2 377.2L777.1 376.4Z" fill="#abb2b9" stroke="#abb2b9" stroke-width="0.4"/><path d="M781.9 370.7L784.0 371.5L781.2 378.1L779.2 377.2Z" fill="#adb4bb" stroke="#adb4bb" stroke-width="0.4"/><path d="M784.0 371.5L786.0 372.3L783.2 378.9L781.2 378.1Z" fill="#aeb5bc" stroke="#aeb5bc" stroke-width="0.4"/><path d="M786.0 372.3L788.0 373.1L785.3 379.7L783.2 378.9Z" fill="#aeb5bc" stroke="#aeb5bc" stroke-width="0.4"/><path d="M788.0 373.1L790.1 373.9L787.3 380.6L785.3 379.7Z" fill="#aeb5bc" stroke="#aeb5bc" stroke-width="0.4"/><path d="M790.1 373.9L792.1 374.7L789.3 381.4L787.3 380.6Z" fill="#aeb5bc" stroke="#aeb5bc" stroke-width="0.4"/><path d="M792.1 374.7L794.1 375.5L791.4 382.2L789.3 381.4Z" fill="#aeb5bc" stroke="#aeb5bc" stroke-width="0.4"/><path d="M710.1 348.8L712.2 349.7L709.4 355.4L707.4 354.6Z" fill="#a7adb3" stroke="#a7adb3" stroke-width="0.4"/><path d="M712.2 349.7L714.2 350.5L711.4 356.3L709.4 355.4Z" fill="#a7adb3" stroke="#a7adb3" stroke-width="0.4"/><path d="M714.2 350.5L716.2 351.3L713.5 357.1L711.4 356.3Z" fill="#a8aeb4" stroke="#a8aeb4" stroke-width="0.4"/><path d="M716.2 351.3L718.3 352.2L715.5 358.0L713.5 357.1Z" fill="#a8aeb4" stroke="#a8aeb4" stroke-width="0.4"/><path d="M718.3 352.2L720.3 353.0L717.5 358.8L715.5 358.0Z" fill="#a7adb3" stroke="#a7adb3" stroke-width="0.4"/><path d="M720.3 353.0L722.3 353.9L719.5 359.7L717.5 358.8Z" fill="#a0a6ac" stroke="#a0a6ac" stroke-width="0.4"/><path d="M722.3 353.9L724.4 354.7L721.6 360.6L719.5 359.7Z" fill="#a0a6ad" stroke="#a0a6ad" stroke-width="0.4"/><path d="M724.4 354.7L726.4 355.5L723.6 361.4L721.6 360.6Z" fill="#999fa6" stroke="#999fa6" stroke-width="0.4"/><path d="M726.4 355.5L728.4 356.4L725.6 362.3L723.6 361.4Z" fill="#999fa6" stroke="#999fa6" stroke-width="0.4"/><path d="M728.4 356.4L730.4 357.2L727.6 363.1L725.6 362.3Z" fill="#999fa6" stroke="#999fa6" stroke-width="0.4"/><path d="M730.4 357.2L732.5 358.0L729.7 364.0L727.6 363.1Z" fill="#999fa6" stroke="#999fa6" stroke-width="0.4"/><path d="M732.5 358.0L734.5 358.9L731.7 364.9L729.7 364.0Z" fill="#999fa6" stroke="#999fa6" stroke-width="0.4"/><path d="M734.5 358.9L736.5 359.7L733.7 365.7L731.7 364.9Z" fill="#9aa0a7" stroke="#9aa0a7" stroke-width="0.4"/><path d="M736.5 359.7L738.6 360.5L735.7 366.6L733.7 365.7Z" fill="#9aa0a7" stroke="#9aa0a7" stroke-width="0.4"/><path d="M738.6 360.5L740.6 361.4L737.7 367.4L735.7 366.6Z" fill="#9ba1a8" stroke="#9ba1a8" stroke-width="0.4"/><path d="M740.6 361.4L742.6 362.2L739.8 368.3L737.7 367.4Z" fill="#9da3aa" stroke="#9da3aa" stroke-width="0.4"/><path d="M742.6 362.2L744.7 363.0L741.8 369.1L739.8 368.3Z" fill="#9ea4ab" stroke="#9ea4ab" stroke-width="0.4"/><path d="M744.7 363.0L746.7 363.9L743.8 370.0L741.8 369.1Z" fill="#a0a6ad" stroke="#a0a6ad" stroke-width="0.4"/><path d="M746.7 363.9L748.7 364.7L745.8 370.9L743.8 370.0Z" fill="#a1a7ae" stroke="#a1a7ae" stroke-width="0.4"/><path d="M748.7 364.7L750.8 365.5L747.9 371.7L745.8 370.9Z" fill="#a3a9b0" stroke="#a3a9b0" stroke-width="0.4"/><path d="M750.8 365.5L752.8 366.4L749.9 372.6L747.9 371.7Z" fill="#a5acb3" stroke="#a5acb3" stroke-width="0.4"/><path d="M752.8 366.4L754.8 367.2L751.9 373.4L749.9 372.6Z" fill="#a9afb6" stroke="#a9afb6" stroke-width="0.4"/><path d="M754.8 367.2L756.8 368.0L753.9 374.3L751.9 373.4Z" fill="#acb3ba" stroke="#acb3ba" stroke-width="0.4"/><path d="M756.8 368.0L758.9 368.9L756.0 375.2L753.9 374.3Z" fill="#afb5bc" stroke="#afb5bc" stroke-width="0.4"/><path d="M758.9 368.9L760.9 369.7L758.0 376.0L756.0 375.2Z" fill="#afb5bc" stroke="#afb5bc" stroke-width="0.4"/><path d="M760.9 369.7L762.9 370.5L760.0 376.9L758.0 376.0Z" fill="#afb6bd" stroke="#afb6bd" stroke-width="0.4"/><path d="M762.9 370.5L765.0 371.4L762.0 377.7L760.0 376.9Z" fill="#afb6bd" stroke="#afb6bd" stroke-width="0.4"/><path d="M765.0 371.4L767.0 372.2L764.1 378.6L762.0 377.7Z" fill="#afb6bd" stroke="#afb6bd" stroke-width="0.4"/><path d="M767.0 372.2L769.0 373.0L766.1 379.4L764.1 378.6Z" fill="#adb4bb" stroke="#adb4bb" stroke-width="0.4"/><path d="M769.0 373.0L771.1 373.9L768.1 380.3L766.1 379.4Z" fill="#abb2b9" stroke="#abb2b9" stroke-width="0.4"/><path d="M771.1 373.9L773.1 374.7L770.1 381.2L768.1 380.3Z" fill="#aab0b7" stroke="#aab0b7" stroke-width="0.4"/><path d="M773.1 374.7L775.1 375.5L772.1 382.0L770.1 381.2Z" fill="#a8afb6" stroke="#a8afb6" stroke-width="0.4"/><path d="M775.1 375.5L777.1 376.4L774.2 382.9L772.1 382.0Z" fill="#a9b0b7" stroke="#a9b0b7" stroke-width="0.4"/><path d="M777.1 376.4L779.2 377.2L776.2 383.7L774.2 382.9Z" fill="#abb2b9" stroke="#abb2b9" stroke-width="0.4"/><path d="M779.2 377.2L781.2 378.1L778.2 384.6L776.2 383.7Z" fill="#adb4bb" stroke="#adb4bb" stroke-width="0.4"/><path d="M781.2 378.1L783.2 378.9L780.2 385.5L778.2 384.6Z" fill="#aeb5bc" stroke="#aeb5bc" stroke-width="0.4"/><path d="M783.2 378.9L785.3 379.7L782.3 386.3L780.2 385.5Z" fill="#aeb5bc" stroke="#aeb5bc" stroke-width="0.4"/><path d="M785.3 379.7L787.3 380.6L784.3 387.2L782.3 386.3Z" fill="#aeb5bc" stroke="#aeb5bc" stroke-width="0.4"/><path d="M787.3 380.6L789.3 381.4L786.3 388.0L784.3 387.2Z" fill="#aeb5bc" stroke="#aeb5bc" stroke-width="0.4"/><path d="M789.3 381.4L791.4 382.2L788.3 388.9L786.3 388.0Z" fill="#aeb5bc" stroke="#aeb5bc" stroke-width="0.4"/><path d="M707.4 354.6L709.4 355.4L706.5 361.1L704.4 360.2Z" fill="#a7adb3" stroke="#a7adb3" stroke-width="0.4"/><path d="M709.4 355.4L711.4 356.3L708.5 362.0L706.5 361.1Z" fill="#a7adb3" stroke="#a7adb3" stroke-width="0.4"/><path d="M711.4 356.3L713.5 357.1L710.5 362.8L708.5 362.0Z" fill="#a7adb3" stroke="#a7adb3" stroke-width="0.4"/><path d="M713.5 357.1L715.5 358.0L712.5 363.7L710.5 362.8Z" fill="#a7adb3" stroke="#a7adb3" stroke-width="0.4"/><path d="M715.5 358.0L717.5 358.8L714.5 364.6L712.5 363.7Z" fill="#a7adb3" stroke="#a7adb3" stroke-width="0.4"/><path d="M717.5 358.8L719.5 359.7L716.5 365.5L714.5 364.6Z" fill="#a2a8ae" stroke="#a2a8ae" stroke-width="0.4"/><path d="M719.5 359.7L721.6 360.6L718.6 366.4L716.5 365.5Z" fill="#a2a8ae" stroke="#a2a8ae" stroke-width="0.4"/><path d="M721.6 360.6L723.6 361.4L720.6 367.3L718.6 366.4Z" fill="#9aa0a7" stroke="#9aa0a7" stroke-width="0.4"/><path d="M723.6 361.4L725.6 362.3L722.6 368.1L720.6 367.3Z" fill="#999fa6" stroke="#999fa6" stroke-width="0.4"/><path d="M725.6 362.3L727.6 363.1L724.6 369.0L722.6 368.1Z" fill="#999fa6" stroke="#999fa6" stroke-width="0.4"/><path d="M727.6 363.1L729.7 364.0L726.6 369.9L724.6 369.0Z" fill="#9aa0a7" stroke="#9aa0a7" stroke-width="0.4"/><path d="M729.7 364.0L731.7 364.9L728.6 370.8L726.6 369.9Z" fill="#9aa0a7" stroke="#9aa0a7" stroke-width="0.4"/><path d="M731.7 364.9L733.7 365.7L730.7 371.7L728.6 370.8Z" fill="#9aa0a7" stroke="#9aa0a7" stroke-width="0.4"/><path d="M733.7 365.7L735.7 366.6L732.7 372.6L730.7 371.7Z" fill="#9ba1a8" stroke="#9ba1a8" stroke-width="0.4"/><path d="M735.7 366.6L737.7 367.4L734.7 373.4L732.7 372.6Z" fill="#9ca2a9" stroke="#9ca2a9" stroke-width="0.4"/><path d="M737.7 367.4L739.8 368.3L736.7 374.3L734.7 373.4Z" fill="#9ea4ab" stroke="#9ea4ab" stroke-width="0.4"/><path d="M739.8 368.3L741.8 369.1L738.7 375.2L736.7 374.3Z" fill="#9fa5ac" stroke="#9fa5ac" stroke-width="0.4"/><path d="M741.8 369.1L743.8 370.0L740.7 376.1L738.7 375.2Z" fill="#a1a7ae" stroke="#a1a7ae" stroke-width="0.4"/><path d="M743.8 370.0L745.8 370.9L742.8 377.0L740.7 376.1Z" fill="#a2a8af" stroke="#a2a8af" stroke-width="0.4"/><path d="M745.8 370.9L747.9 371.7L744.8 377.9L742.8 377.0Z" fill="#a4aab1" stroke="#a4aab1" stroke-width="0.4"/><path d="M747.9 371.7L749.9 372.6L746.8 378.7L744.8 377.9Z" fill="#a6adb4" stroke="#a6adb4" stroke-width="0.4"/><path d="M749.9 372.6L751.9 373.4L748.8 379.6L746.8 378.7Z" fill="#aab0b7" stroke="#aab0b7" stroke-width="0.4"/><path d="M751.9 373.4L753.9 374.3L750.8 380.5L748.8 379.6Z" fill="#adb4bb" stroke="#adb4bb" stroke-width="0.4"/><path d="M753.9 374.3L756.0 375.2L752.8 381.4L750.8 380.5Z" fill="#b0b7be" stroke="#b0b7be" stroke-width="0.4"/><path d="M756.0 375.2L758.0 376.0L754.9 382.3L752.8 381.4Z" fill="#b0b7be" stroke="#b0b7be" stroke-width="0.4"/><path d="M758.0 376.0L760.0 376.9L756.9 383.2L754.9 382.3Z" fill="#b0b7be" stroke="#b0b7be" stroke-width="0.4"/><path d="M760.0 376.9L762.0 377.7L758.9 384.0L756.9 383.2Z" fill="#b1b7be" stroke="#b1b7be" stroke-width="0.4"/><path d="M762.0 377.7L764.1 378.6L760.9 384.9L758.9 384.0Z" fill="#b0b7be" stroke="#b0b7be" stroke-width="0.4"/><path d="M764.1 378.6L766.1 379.4L762.9 385.8L760.9 384.9Z" fill="#aeb5bc" stroke="#aeb5bc" stroke-width="0.4"/><path d="M766.1 379.4L768.1 380.3L764.9 386.7L762.9 385.8Z" fill="#acb3ba" stroke="#acb3ba" stroke-width="0.4"/><path d="M768.1 380.3L770.1 381.2L766.9 387.6L764.9 386.7Z" fill="#aab1b8" stroke="#aab1b8" stroke-width="0.4"/><path d="M770.1 381.2L772.1 382.0L769.0 388.4L766.9 387.6Z" fill="#a8afb6" stroke="#a8afb6" stroke-width="0.4"/><path d="M772.1 382.0L774.2 382.9L771.0 389.3L769.0 388.4Z" fill="#a9b0b7" stroke="#a9b0b7" stroke-width="0.4"/><path d="M774.2 382.9L776.2 383.7L773.0 390.2L771.0 389.3Z" fill="#aab1b8" stroke="#aab1b8" stroke-width="0.4"/><path d="M776.2 383.7L778.2 384.6L775.0 391.1L773.0 390.2Z" fill="#adb4bb" stroke="#adb4bb" stroke-width="0.4"/><path d="M778.2 384.6L780.2 385.5L777.0 392.0L775.0 391.1Z" fill="#aeb5bc" stroke="#aeb5bc" stroke-width="0.4"/><path d="M780.2 385.5L782.3 386.3L779.0 392.9L777.0 392.0Z" fill="#aeb5bc" stroke="#aeb5bc" stroke-width="0.4"/><path d="M782.3 386.3L784.3 387.2L781.1 393.7L779.0 392.9Z" fill="#aeb5bc" stroke="#aeb5bc" stroke-width="0.4"/><path d="M784.3 387.2L786.3 388.0L783.1 394.6L781.1 393.7Z" fill="#aeb5bc" stroke="#aeb5bc" stroke-width="0.4"/><path d="M786.3 388.0L788.3 388.9L785.1 395.5L783.1 394.6Z" fill="#aeb5bc" stroke="#aeb5bc" stroke-width="0.4"/><path d="M704.4 360.2L706.5 361.1L703.3 366.7L701.3 365.8Z" fill="#a7adb3" stroke="#a7adb3" stroke-width="0.4"/><path d="M706.5 361.1L708.5 362.0L705.3 367.6L703.3 366.7Z" fill="#a7adb3" stroke="#a7adb3" stroke-width="0.4"/><path d="M708.5 362.0L710.5 362.8L707.4 368.5L705.3 367.6Z" fill="#a7adb3" stroke="#a7adb3" stroke-width="0.4"/><path d="M710.5 362.8L712.5 363.7L709.4 369.4L707.4 368.5Z" fill="#a7adb3" stroke="#a7adb3" stroke-width="0.4"/><path d="M712.5 363.7L714.5 364.6L711.4 370.3L709.4 369.4Z" fill="#a7adb3" stroke="#a7adb3" stroke-width="0.4"/><path d="M714.5 364.6L716.5 365.5L713.4 371.2L711.4 370.3Z" fill="#a3a9af" stroke="#a3a9af" stroke-width="0.4"/><path d="M716.5 365.5L718.6 366.4L715.4 372.1L713.4 371.2Z" fill="#a3a9af" stroke="#a3a9af" stroke-width="0.4"/><path d="M718.6 366.4L720.6 367.3L717.4 373.0L715.4 372.1Z" fill="#9ba1a8" stroke="#9ba1a8" stroke-width="0.4"/><path d="M720.6 367.3L722.6 368.1L719.4 374.0L717.4 373.0Z" fill="#9aa0a7" stroke="#9aa0a7" stroke-width="0.4"/><path d="M722.6 368.1L724.6 369.0L721.4 374.9L719.4 374.0Z" fill="#9aa0a7" stroke="#9aa0a7" stroke-width="0.4"/><path d="M724.6 369.0L726.6 369.9L723.4 375.8L721.4 374.9Z" fill="#9aa0a7" stroke="#9aa0a7" stroke-width="0.4"/><path d="M726.6 369.9L728.6 370.8L725.4 376.7L723.4 375.8Z" fill="#9ba1a8" stroke="#9ba1a8" stroke-width="0.4"/><path d="M728.6 370.8L730.7 371.7L727.4 377.6L725.4 376.7Z" fill="#9ba1a8" stroke="#9ba1a8" stroke-width="0.4"/><path d="M730.7 371.7L732.7 372.6L729.4 378.5L727.4 377.6Z" fill="#9ba1a8" stroke="#9ba1a8" stroke-width="0.4"/><path d="M732.7 372.6L734.7 373.4L731.4 379.4L729.4 378.5Z" fill="#9ca2a9" stroke="#9ca2a9" stroke-width="0.4"/><path d="M734.7 373.4L736.7 374.3L733.4 380.3L731.4 379.4Z" fill="#9ea4ab" stroke="#9ea4ab" stroke-width="0.4"/><path d="M736.7 374.3L738.7 375.2L735.5 381.2L733.4 380.3Z" fill="#a0a6ad" stroke="#a0a6ad" stroke-width="0.4"/><path d="M738.7 375.2L740.7 376.1L737.5 382.1L735.5 381.2Z" fill="#a1a7ae" stroke="#a1a7ae" stroke-width="0.4"/><path d="M740.7 376.1L742.8 377.0L739.5 383.0L737.5 382.1Z" fill="#a3a9b0" stroke="#a3a9b0" stroke-width="0.4"/><path d="M742.8 377.0L744.8 377.9L741.5 383.9L739.5 383.0Z" fill="#a5abb2" stroke="#a5abb2" stroke-width="0.4"/><path d="M744.8 377.9L746.8 378.7L743.5 384.8L741.5 383.9Z" fill="#a7aeb5" stroke="#a7aeb5" stroke-width="0.4"/><path d="M746.8 378.7L748.8 379.6L745.5 385.8L743.5 384.8Z" fill="#abb1b8" stroke="#abb1b8" stroke-width="0.4"/><path d="M748.8 379.6L750.8 380.5L747.5 386.7L745.5 385.8Z" fill="#afb5bc" stroke="#afb5bc" stroke-width="0.4"/><path d="M750.8 380.5L752.8 381.4L749.5 387.6L747.5 386.7Z" fill="#b1b8bf" stroke="#b1b8bf" stroke-width="0.4"/><path d="M752.8 381.4L754.9 382.3L751.5 388.5L749.5 387.6Z" fill="#b2b8bf" stroke="#b2b8bf" stroke-width="0.4"/><path d="M754.9 382.3L756.9 383.2L753.5 389.4L751.5 388.5Z" fill="#b2b9c0" stroke="#b2b9c0" stroke-width="0.4"/><path d="M756.9 383.2L758.9 384.0L755.5 390.3L753.5 389.4Z" fill="#b2b9c0" stroke="#b2b9c0" stroke-width="0.4"/><path d="M758.9 384.0L760.9 384.9L757.5 391.2L755.5 390.3Z" fill="#b2b8bf" stroke="#b2b8bf" stroke-width="0.4"/><path d="M760.9 384.9L762.9 385.8L759.5 392.1L757.5 391.2Z" fill="#afb6bd" stroke="#afb6bd" stroke-width="0.4"/><path d="M762.9 385.8L764.9 386.7L761.6 393.0L759.5 392.1Z" fill="#adb4bb" stroke="#adb4bb" stroke-width="0.4"/><path d="M764.9 386.7L766.9 387.6L763.6 393.9L761.6 393.0Z" fill="#abb2b9" stroke="#abb2b9" stroke-width="0.4"/><path d="M766.9 387.6L769.0 388.4L765.6 394.8L763.6 393.9Z" fill="#a9b0b7" stroke="#a9b0b7" stroke-width="0.4"/><path d="M769.0 388.4L771.0 389.3L767.6 395.7L765.6 394.8Z" fill="#a9b0b7" stroke="#a9b0b7" stroke-width="0.4"/><path d="M771.0 389.3L773.0 390.2L769.6 396.7L767.6 395.7Z" fill="#aab1b8" stroke="#aab1b8" stroke-width="0.4"/><path d="M773.0 390.2L775.0 391.1L771.6 397.6L769.6 396.7Z" fill="#adb4bb" stroke="#adb4bb" stroke-width="0.4"/><path d="M775.0 391.1L777.0 392.0L773.6 398.5L771.6 397.6Z" fill="#aeb5bc" stroke="#aeb5bc" stroke-width="0.4"/><path d="M777.0 392.0L779.0 392.9L775.6 399.4L773.6 398.5Z" fill="#aeb5bc" stroke="#aeb5bc" stroke-width="0.4"/><path d="M779.0 392.9L781.1 393.7L777.6 400.3L775.6 399.4Z" fill="#aeb5bc" stroke="#aeb5bc" stroke-width="0.4"/><path d="M781.1 393.7L783.1 394.6L779.6 401.2L777.6 400.3Z" fill="#aeb5bc" stroke="#aeb5bc" stroke-width="0.4"/><path d="M783.1 394.6L785.1 395.5L781.6 402.1L779.6 401.2Z" fill="#aeb5bc" stroke="#aeb5bc" stroke-width="0.4"/><path d="M701.3 365.8L703.3 366.7L700.0 372.2L698.1 371.3Z" fill="#a7adb3" stroke="#a7adb3" stroke-width="0.4"/><path d="M703.3 366.7L705.3 367.6L702.0 373.2L700.0 372.2Z" fill="#a7adb3" stroke="#a7adb3" stroke-width="0.4"/><path d="M705.3 367.6L707.4 368.5L704.0 374.1L702.0 373.2Z" fill="#a7adb3" stroke="#a7adb3" stroke-width="0.4"/><path d="M707.4 368.5L709.4 369.4L706.0 375.0L704.0 374.1Z" fill="#a7adb3" stroke="#a7adb3" stroke-width="0.4"/><path d="M709.4 369.4L711.4 370.3L708.0 376.0L706.0 375.0Z" fill="#a7adb3" stroke="#a7adb3" stroke-width="0.4"/><path d="M711.4 370.3L713.4 371.2L710.0 376.9L708.0 376.0Z" fill="#a5abb1" stroke="#a5abb1" stroke-width="0.4"/><path d="M713.4 371.2L715.4 372.1L712.0 377.8L710.0 376.9Z" fill="#a5abb1" stroke="#a5abb1" stroke-width="0.4"/><path d="M715.4 372.1L717.4 373.0L714.0 378.8L712.0 377.8Z" fill="#9ba1a8" stroke="#9ba1a8" stroke-width="0.4"/><path d="M717.4 373.0L719.4 374.0L716.0 379.7L714.0 378.8Z" fill="#9aa0a7" stroke="#9aa0a7" stroke-width="0.4"/><path d="M719.4 374.0L721.4 374.9L718.0 380.6L716.0 379.7Z" fill="#9ba1a8" stroke="#9ba1a8" stroke-width="0.4"/><path d="M721.4 374.9L723.4 375.8L720.0 381.6L718.0 380.6Z" fill="#9ba1a8" stroke="#9ba1a8" stroke-width="0.4"/><path d="M723.4 375.8L725.4 376.7L722.0 382.5L720.0 381.6Z" fill="#9ba1a8" stroke="#9ba1a8" stroke-width="0.4"/><path d="M725.4 376.7L727.4 377.6L724.0 383.4L722.0 382.5Z" fill="#9ca2a9" stroke="#9ca2a9" stroke-width="0.4"/><path d="M727.4 377.6L729.4 378.5L726.0 384.4L724.0 383.4Z" fill="#9ca2a9" stroke="#9ca2a9" stroke-width="0.4"/><path d="M729.4 378.5L731.4 379.4L728.0 385.3L726.0 384.4Z" fill="#9da3aa" stroke="#9da3aa" stroke-width="0.4"/><path d="M731.4 379.4L733.4 380.3L730.0 386.2L728.0 385.3Z" fill="#9fa5ac" stroke="#9fa5ac" stroke-width="0.4"/><path d="M733.4 380.3L735.5 381.2L732.0 387.2L730.0 386.2Z" fill="#a0a6ad" stroke="#a0a6ad" stroke-width="0.4"/><path d="M735.5 381.2L737.5 382.1L734.0 388.1L732.0 387.2Z" fill="#a2a8af" stroke="#a2a8af" stroke-width="0.4"/><path d="M737.5 382.1L739.5 383.0L736.0 389.0L734.0 388.1Z" fill="#a4aab1" stroke="#a4aab1" stroke-width="0.4"/><path d="M739.5 383.0L741.5 383.9L738.0 390.0L736.0 389.0Z" fill="#a6acb3" stroke="#a6acb3" stroke-width="0.4"/><path d="M741.5 383.9L743.5 384.8L740.0 390.9L738.0 390.0Z" fill="#a8afb6" stroke="#a8afb6" stroke-width="0.4"/><path d="M743.5 384.8L745.5 385.8L742.0 391.8L740.0 390.9Z" fill="#acb3ba" stroke="#acb3ba" stroke-width="0.4"/><path d="M745.5 385.8L747.5 386.7L744.0 392.8L742.0 391.8Z" fill="#b0b7be" stroke="#b0b7be" stroke-width="0.4"/><path d="M747.5 386.7L749.5 387.6L746.0 393.7L744.0 392.8Z" fill="#b3bac1" stroke="#b3bac1" stroke-width="0.4"/><path d="M749.5 387.6L751.5 388.5L748.0 394.6L746.0 393.7Z" fill="#b3bac1" stroke="#b3bac1" stroke-width="0.4"/><path d="M751.5 388.5L753.5 389.4L750.0 395.6L748.0 394.6Z" fill="#b3bac1" stroke="#b3bac1" stroke-width="0.4"/><path d="M753.5 389.4L755.5 390.3L752.0 396.5L750.0 395.6Z" fill="#b3bac1" stroke="#b3bac1" stroke-width="0.4"/><path d="M755.5 390.3L757.5 391.2L754.0 397.5L752.0 396.5Z" fill="#b3bac1" stroke="#b3bac1" stroke-width="0.4"/><path d="M757.5 391.2L759.5 392.1L756.0 398.4L754.0 397.5Z" fill="#b1b7be" stroke="#b1b7be" stroke-width="0.4"/><path d="M759.5 392.1L761.6 393.0L758.0 399.3L756.0 398.4Z" fill="#aeb5bc" stroke="#aeb5bc" stroke-width="0.4"/><path d="M761.6 393.0L763.6 393.9L760.0 400.3L758.0 399.3Z" fill="#acb3ba" stroke="#acb3ba" stroke-width="0.4"/><path d="M763.6 393.9L765.6 394.8L762.0 401.2L760.0 400.3Z" fill="#a9b0b7" stroke="#a9b0b7" stroke-width="0.4"/><path d="M765.6 394.8L767.6 395.7L764.0 402.1L762.0 401.2Z" fill="#a9b0b7" stroke="#a9b0b7" stroke-width="0.4"/><path d="M767.6 395.7L769.6 396.7L766.0 403.1L764.0 402.1Z" fill="#aab1b8" stroke="#aab1b8" stroke-width="0.4"/><path d="M769.6 396.7L771.6 397.6L768.0 404.0L766.0 403.1Z" fill="#acb3ba" stroke="#acb3ba" stroke-width="0.4"/><path d="M771.6 397.6L773.6 398.5L769.9 404.9L768.0 404.0Z" fill="#aeb5bc" stroke="#aeb5bc" stroke-width="0.4"/><path d="M773.6 398.5L775.6 399.4L771.9 405.9L769.9 404.9Z" fill="#aeb5bc" stroke="#aeb5bc" stroke-width="0.4"/><path d="M775.6 399.4L777.6 400.3L773.9 406.8L771.9 405.9Z" fill="#aeb5bc" stroke="#aeb5bc" stroke-width="0.4"/><path d="M777.6 400.3L779.6 401.2L775.9 407.7L773.9 406.8Z" fill="#aeb5bc" stroke="#aeb5bc" stroke-width="0.4"/><path d="M779.6 401.2L781.6 402.1L777.9 408.7L775.9 407.7Z" fill="#adb4bb" stroke="#adb4bb" stroke-width="0.4"/><path d="M698.1 371.3L700.0 372.2L696.6 377.7L694.6 376.7Z" fill="#a7adb3" stroke="#a7adb3" stroke-width="0.4"/><path d="M700.0 372.2L702.0 373.2L698.6 378.6L696.6 377.7Z" fill="#a7adb3" stroke="#a7adb3" stroke-width="0.4"/><path d="M702.0 373.2L704.0 374.1L700.6 379.6L698.6 378.6Z" fill="#a7adb3" stroke="#a7adb3" stroke-width="0.4"/><path d="M704.0 374.1L706.0 375.0L702.6 380.6L700.6 379.6Z" fill="#a7adb3" stroke="#a7adb3" stroke-width="0.4"/><path d="M706.0 375.0L708.0 376.0L704.6 381.5L702.6 380.6Z" fill="#a7adb3" stroke="#a7adb3" stroke-width="0.4"/><path d="M708.0 376.0L710.0 376.9L706.5 382.5L704.6 381.5Z" fill="#a6acb2" stroke="#a6acb2" stroke-width="0.4"/><path d="M710.0 376.9L712.0 377.8L708.5 383.4L706.5 382.5Z" fill="#a6acb2" stroke="#a6acb2" stroke-width="0.4"/><path d="M712.0 377.8L714.0 378.8L710.5 384.4L708.5 383.4Z" fill="#9ca2a9" stroke="#9ca2a9" stroke-width="0.4"/><path d="M714.0 378.8L716.0 379.7L712.5 385.4L710.5 384.4Z" fill="#9ba1a8" stroke="#9ba1a8" stroke-width="0.4"/><path d="M716.0 379.7L718.0 380.6L714.5 386.3L712.5 385.4Z" fill="#9ba1a8" stroke="#9ba1a8" stroke-width="0.4"/><path d="M718.0 380.6L720.0 381.6L716.5 387.3L714.5 386.3Z" fill="#9ba1a8" stroke="#9ba1a8" stroke-width="0.4"/><path d="M720.0 381.6L722.0 382.5L718.4 388.3L716.5 387.3Z" fill="#9ca2a9" stroke="#9ca2a9" stroke-width="0.4"/><path d="M722.0 382.5L724.0 383.4L720.4 389.2L718.4 388.3Z" fill="#9ca2a9" stroke="#9ca2a9" stroke-width="0.4"/><path d="M724.0 383.4L726.0 384.4L722.4 390.2L720.4 389.2Z" fill="#9ca2a9" stroke="#9ca2a9" stroke-width="0.4"/><path d="M726.0 384.4L728.0 385.3L724.4 391.1L722.4 390.2Z" fill="#9ea4ab" stroke="#9ea4ab" stroke-width="0.4"/><path d="M728.0 385.3L730.0 386.2L726.4 392.1L724.4 391.1Z" fill="#9fa5ac" stroke="#9fa5ac" stroke-width="0.4"/><path d="M730.0 386.2L732.0 387.2L728.4 393.1L726.4 392.1Z" fill="#a1a7ae" stroke="#a1a7ae" stroke-width="0.4"/><path d="M732.0 387.2L734.0 388.1L730.4 394.0L728.4 393.1Z" fill="#a3a9b0" stroke="#a3a9b0" stroke-width="0.4"/><path d="M734.0 388.1L736.0 389.0L732.3 395.0L730.4 394.0Z" fill="#a5abb2" stroke="#a5abb2" stroke-width="0.4"/><path d="M736.0 389.0L738.0 390.0L734.3 396.0L732.3 395.0Z" fill="#a6acb3" stroke="#a6acb3" stroke-width="0.4"/><path d="M738.0 390.0L740.0 390.9L736.3 396.9L734.3 396.0Z" fill="#a9afb6" stroke="#a9afb6" stroke-width="0.4"/><path d="M740.0 390.9L742.0 391.8L738.3 397.9L736.3 396.9Z" fill="#adb4bb" stroke="#adb4bb" stroke-width="0.4"/><path d="M742.0 391.8L744.0 392.8L740.3 398.8L738.3 397.9Z" fill="#b1b8bf" stroke="#b1b8bf" stroke-width="0.4"/><path d="M744.0 392.8L746.0 393.7L742.3 399.8L740.3 398.8Z" fill="#b4bbc2" stroke="#b4bbc2" stroke-width="0.4"/><path d="M746.0 393.7L748.0 394.6L744.3 400.8L742.3 399.8Z" fill="#b4bbc2" stroke="#b4bbc2" stroke-width="0.4"/><path d="M748.0 394.6L750.0 395.6L746.2 401.7L744.3 400.8Z" fill="#b5bcc3" stroke="#b5bcc3" stroke-width="0.4"/><path d="M750.0 395.6L752.0 396.5L748.2 402.7L746.2 401.7Z" fill="#b5bcc3" stroke="#b5bcc3" stroke-width="0.4"/><path d="M752.0 396.5L754.0 397.5L750.2 403.7L748.2 402.7Z" fill="#b4bbc2" stroke="#b4bbc2" stroke-width="0.4"/><path d="M754.0 397.5L756.0 398.4L752.2 404.6L750.2 403.7Z" fill="#b2b9c0" stroke="#b2b9c0" stroke-width="0.4"/><path d="M756.0 398.4L758.0 399.3L754.2 405.6L752.2 404.6Z" fill="#afb6bd" stroke="#afb6bd" stroke-width="0.4"/><path d="M758.0 399.3L760.0 400.3L756.2 406.5L754.2 405.6Z" fill="#adb4bb" stroke="#adb4bb" stroke-width="0.4"/><path d="M760.0 400.3L762.0 401.2L758.1 407.5L756.2 406.5Z" fill="#aab1b8" stroke="#aab1b8" stroke-width="0.4"/><path d="M762.0 401.2L764.0 402.1L760.1 408.5L758.1 407.5Z" fill="#a9b0b7" stroke="#a9b0b7" stroke-width="0.4"/><path d="M764.0 402.1L766.0 403.1L762.1 409.4L760.1 408.5Z" fill="#a9b0b7" stroke="#a9b0b7" stroke-width="0.4"/><path d="M766.0 403.1L768.0 404.0L764.1 410.4L762.1 409.4Z" fill="#acb3ba" stroke="#acb3ba" stroke-width="0.4"/><path d="M768.0 404.0L769.9 404.9L766.1 411.4L764.1 410.4Z" fill="#aeb5bc" stroke="#aeb5bc" stroke-width="0.4"/><path d="M769.9 404.9L771.9 405.9L768.1 412.3L766.1 411.4Z" fill="#aeb5bc" stroke="#aeb5bc" stroke-width="0.4"/><path d="M771.9 405.9L773.9 406.8L770.1 413.3L768.1 412.3Z" fill="#aeb5bc" stroke="#aeb5bc" stroke-width="0.4"/><path d="M773.9 406.8L775.9 407.7L772.0 414.2L770.1 413.3Z" fill="#adb4bb" stroke="#adb4bb" stroke-width="0.4"/><path d="M775.9 407.7L777.9 408.7L774.0 415.2L772.0 414.2Z" fill="#adb4bb" stroke="#adb4bb" stroke-width="0.4"/><path d="M694.6 376.7L696.6 377.7L693.0 383.1L691.1 382.1Z" fill="#a7adb3" stroke="#a7adb3" stroke-width="0.4"/><path d="M696.6 377.7L698.6 378.6L695.0 384.0L693.0 383.1Z" fill="#a7adb3" stroke="#a7adb3" stroke-width="0.4"/><path d="M698.6 378.6L700.6 379.6L697.0 385.0L695.0 384.0Z" fill="#a7adb3" stroke="#a7adb3" stroke-width="0.4"/><path d="M700.6 379.6L702.6 380.6L699.0 386.0L697.0 385.0Z" fill="#a7adb3" stroke="#a7adb3" stroke-width="0.4"/><path d="M702.6 380.6L704.6 381.5L700.9 387.0L699.0 386.0Z" fill="#a7adb3" stroke="#a7adb3" stroke-width="0.4"/><path d="M704.6 381.5L706.5 382.5L702.9 388.0L700.9 387.0Z" fill="#a7adb3" stroke="#a7adb3" stroke-width="0.4"/><path d="M706.5 382.5L708.5 383.4L704.9 389.0L702.9 388.0Z" fill="#a7adb3" stroke="#a7adb3" stroke-width="0.4"/><path d="M708.5 383.4L710.5 384.4L706.8 390.0L704.9 389.0Z" fill="#9da3a9" stroke="#9da3a9" stroke-width="0.4"/><path d="M710.5 384.4L712.5 385.4L708.8 391.0L706.8 390.0Z" fill="#9ba1a8" stroke="#9ba1a8" stroke-width="0.4"/><path d="M712.5 385.4L714.5 386.3L710.8 392.0L708.8 391.0Z" fill="#9ca2a9" stroke="#9ca2a9" stroke-width="0.4"/><path d="M714.5 386.3L716.5 387.3L712.7 393.0L710.8 392.0Z" fill="#9ca2a9" stroke="#9ca2a9" stroke-width="0.4"/><path d="M716.5 387.3L718.4 388.3L714.7 394.0L712.7 393.0Z" fill="#9ca2a9" stroke="#9ca2a9" stroke-width="0.4"/><path d="M718.4 388.3L720.4 389.2L716.7 394.9L714.7 394.0Z" fill="#9da3aa" stroke="#9da3aa" stroke-width="0.4"/><path d="M720.4 389.2L722.4 390.2L718.7 395.9L716.7 394.9Z" fill="#9da3aa" stroke="#9da3aa" stroke-width="0.4"/><path d="M722.4 390.2L724.4 391.1L720.6 396.9L718.7 395.9Z" fill="#9ea4ab" stroke="#9ea4ab" stroke-width="0.4"/><path d="M724.4 391.1L726.4 392.1L722.6 397.9L720.6 396.9Z" fill="#a0a6ad" stroke="#a0a6ad" stroke-width="0.4"/><path d="M726.4 392.1L728.4 393.1L724.6 398.9L722.6 397.9Z" fill="#a2a8af" stroke="#a2a8af" stroke-width="0.4"/><path d="M728.4 393.1L730.4 394.0L726.5 399.9L724.6 398.9Z" fill="#a4aab0" stroke="#a4aab0" stroke-width="0.4"/><path d="M730.4 394.0L732.3 395.0L728.5 400.9L726.5 399.9Z" fill="#a5abb2" stroke="#a5abb2" stroke-width="0.4"/><path d="M732.3 395.0L734.3 396.0L730.5 401.9L728.5 400.9Z" fill="#a7adb4" stroke="#a7adb4" stroke-width="0.4"/><path d="M734.3 396.0L736.3 396.9L732.4 402.9L730.5 401.9Z" fill="#aab0b7" stroke="#aab0b7" stroke-width="0.4"/><path d="M736.3 396.9L738.3 397.9L734.4 403.9L732.4 402.9Z" fill="#aeb5bc" stroke="#aeb5bc" stroke-width="0.4"/><path d="M738.3 397.9L740.3 398.8L736.4 404.9L734.4 403.9Z" fill="#b2b9c0" stroke="#b2b9c0" stroke-width="0.4"/><path d="M740.3 398.8L742.3 399.8L738.4 405.9L736.4 404.9Z" fill="#b5bcc3" stroke="#b5bcc3" stroke-width="0.4"/><path d="M742.3 399.8L744.3 400.8L740.3 406.8L738.4 405.9Z" fill="#b5bcc3" stroke="#b5bcc3" stroke-width="0.4"/><path d="M744.3 400.8L746.2 401.7L742.3 407.8L740.3 406.8Z" fill="#b6bdc4" stroke="#b6bdc4" stroke-width="0.4"/><path d="M746.2 401.7L748.2 402.7L744.3 408.8L742.3 407.8Z" fill="#b6bdc4" stroke="#b6bdc4" stroke-width="0.4"/><path d="M748.2 402.7L750.2 403.7L746.2 409.8L744.3 408.8Z" fill="#b5bcc3" stroke="#b5bcc3" stroke-width="0.4"/><path d="M750.2 403.7L752.2 404.6L748.2 410.8L746.2 409.8Z" fill="#b3bac1" stroke="#b3bac1" stroke-width="0.4"/><path d="M752.2 404.6L754.2 405.6L750.2 411.8L748.2 410.8Z" fill="#b0b7be" stroke="#b0b7be" stroke-width="0.4"/><path d="M754.2 405.6L756.2 406.5L752.2 412.8L750.2 411.8Z" fill="#adb4bb" stroke="#adb4bb" stroke-width="0.4"/><path d="M756.2 406.5L758.1 407.5L754.1 413.8L752.2 412.8Z" fill="#aab1b8" stroke="#aab1b8" stroke-width="0.4"/><path d="M758.1 407.5L760.1 408.5L756.1 414.8L754.1 413.8Z" fill="#a9b0b7" stroke="#a9b0b7" stroke-width="0.4"/><path d="M760.1 408.5L762.1 409.4L758.1 415.8L756.1 414.8Z" fill="#a9b0b7" stroke="#a9b0b7" stroke-width="0.4"/><path d="M762.1 409.4L764.1 410.4L760.0 416.8L758.1 415.8Z" fill="#acb3ba" stroke="#acb3ba" stroke-width="0.4"/><path d="M764.1 410.4L766.1 411.4L762.0 417.7L760.0 416.8Z" fill="#aeb5bc" stroke="#aeb5bc" stroke-width="0.4"/><path d="M766.1 411.4L768.1 412.3L764.0 418.7L762.0 417.7Z" fill="#aeb5bc" stroke="#aeb5bc" stroke-width="0.4"/><path d="M768.1 412.3L770.1 413.3L765.9 419.7L764.0 418.7Z" fill="#adb4bb" stroke="#adb4bb" stroke-width="0.4"/><path d="M770.1 413.3L772.0 414.2L767.9 420.7L765.9 419.7Z" fill="#adb4bb" stroke="#adb4bb" stroke-width="0.4"/><path d="M772.0 414.2L774.0 415.2L769.9 421.7L767.9 420.7Z" fill="#adb4bb" stroke="#adb4bb" stroke-width="0.4"/><path d="M691.1 382.1L693.0 383.1L689.4 388.3L687.4 387.3Z" fill="#a7adb3" stroke="#a7adb3" stroke-width="0.4"/><path d="M693.0 383.1L695.0 384.0L691.3 389.4L689.4 388.3Z" fill="#a7adb3" stroke="#a7adb3" stroke-width="0.4"/><path d="M695.0 384.0L697.0 385.0L693.3 390.4L691.3 389.4Z" fill="#a7adb3" stroke="#a7adb3" stroke-width="0.4"/><path d="M697.0 385.0L699.0 386.0L695.2 391.4L693.3 390.4Z" fill="#a7adb3" stroke="#a7adb3" stroke-width="0.4"/><path d="M699.0 386.0L700.9 387.0L697.2 392.4L695.2 391.4Z" fill="#a7adb3" stroke="#a7adb3" stroke-width="0.4"/><path d="M700.9 387.0L702.9 388.0L699.1 393.5L697.2 392.4Z" fill="#a7adb3" stroke="#a7adb3" stroke-width="0.4"/><path d="M702.9 388.0L704.9 389.0L701.1 394.5L699.1 393.5Z" fill="#a7adb3" stroke="#a7adb3" stroke-width="0.4"/><path d="M704.9 389.0L706.8 390.0L703.0 395.5L701.1 394.5Z" fill="#9da3aa" stroke="#9da3aa" stroke-width="0.4"/><path d="M706.8 390.0L708.8 391.0L705.0 396.5L703.0 395.5Z" fill="#9ca2a9" stroke="#9ca2a9" stroke-width="0.4"/><path d="M708.8 391.0L710.8 392.0L706.9 397.5L705.0 396.5Z" fill="#9da3aa" stroke="#9da3aa" stroke-width="0.4"/><path d="M710.8 392.0L712.7 393.0L708.9 398.6L706.9 397.5Z" fill="#9da3aa" stroke="#9da3aa" stroke-width="0.4"/><path d="M712.7 393.0L714.7 394.0L710.8 399.6L708.9 398.6Z" fill="#9da3aa" stroke="#9da3aa" stroke-width="0.4"/><path d="M714.7 394.0L716.7 394.9L712.8 400.6L710.8 399.6Z" fill="#9ea4ab" stroke="#9ea4ab" stroke-width="0.4"/><path d="M716.7 394.9L718.7 395.9L714.7 401.6L712.8 400.6Z" fill="#9ea4ab" stroke="#9ea4ab" stroke-width="0.4"/><path d="M718.7 395.9L720.6 396.9L716.7 402.7L714.7 401.6Z" fill="#9fa5ac" stroke="#9fa5ac" stroke-width="0.4"/><path d="M720.6 396.9L722.6 397.9L718.6 403.7L716.7 402.7Z" fill="#a1a7ae" stroke="#a1a7ae" stroke-width="0.4"/><path d="M722.6 397.9L724.6 398.9L720.6 404.7L718.6 403.7Z" fill="#a3a9b0" stroke="#a3a9b0" stroke-width="0.4"/><path d="M724.6 398.9L726.5 399.9L722.6 405.7L720.6 404.7Z" fill="#a5abb2" stroke="#a5abb2" stroke-width="0.4"/><path d="M726.5 399.9L728.5 400.9L724.5 406.7L722.6 405.7Z" fill="#a7adb4" stroke="#a7adb4" stroke-width="0.4"/><path d="M728.5 400.9L730.5 401.9L726.5 407.8L724.5 406.7Z" fill="#a9afb6" stroke="#a9afb6" stroke-width="0.4"/><path d="M730.5 401.9L732.4 402.9L728.4 408.8L726.5 407.8Z" fill="#acb2b9" stroke="#acb2b9" stroke-width="0.4"/><path d="M732.4 402.9L734.4 403.9L730.4 409.8L728.4 408.8Z" fill="#b0b7be" stroke="#b0b7be" stroke-width="0.4"/><path d="M734.4 403.9L736.4 404.9L732.3 410.8L730.4 409.8Z" fill="#b4bbc2" stroke="#b4bbc2" stroke-width="0.4"/><path d="M736.4 404.9L738.4 405.9L734.3 411.8L732.3 410.8Z" fill="#b7bec5" stroke="#b7bec5" stroke-width="0.4"/><path d="M738.4 405.9L740.3 406.8L736.2 412.9L734.3 411.8Z" fill="#b7bec5" stroke="#b7bec5" stroke-width="0.4"/><path d="M740.3 406.8L742.3 407.8L738.2 413.9L736.2 412.9Z" fill="#b7bec5" stroke="#b7bec5" stroke-width="0.4"/><path d="M742.3 407.8L744.3 408.8L740.1 414.9L738.2 413.9Z" fill="#b7bec5" stroke="#b7bec5" stroke-width="0.4"/><path d="M744.3 408.8L746.2 409.8L742.1 415.9L740.1 414.9Z" fill="#b6bdc4" stroke="#b6bdc4" stroke-width="0.4"/><path d="M746.2 409.8L748.2 410.8L744.0 417.0L742.1 415.9Z" fill="#b3bac1" stroke="#b3bac1" stroke-width="0.4"/><path d="M748.2 410.8L750.2 411.8L746.0 418.0L744.0 417.0Z" fill="#b0b7be" stroke="#b0b7be" stroke-width="0.4"/><path d="M750.2 411.8L752.2 412.8L747.9 419.0L746.0 418.0Z" fill="#aeb5bc" stroke="#aeb5bc" stroke-width="0.4"/><path d="M752.2 412.8L754.1 413.8L749.9 420.0L747.9 419.0Z" fill="#abb2b9" stroke="#abb2b9" stroke-width="0.4"/><path d="M754.1 413.8L756.1 414.8L751.9 421.0L749.9 420.0Z" fill="#a9b0b7" stroke="#a9b0b7" stroke-width="0.4"/><path d="M756.1 414.8L758.1 415.8L753.8 422.1L751.9 421.0Z" fill="#a9b0b7" stroke="#a9b0b7" stroke-width="0.4"/><path d="M758.1 415.8L760.0 416.8L755.8 423.1L753.8 422.1Z" fill="#acb3ba" stroke="#acb3ba" stroke-width="0.4"/><path d="M760.0 416.8L762.0 417.7L757.7 424.1L755.8 423.1Z" fill="#aeb5bc" stroke="#aeb5bc" stroke-width="0.4"/><path d="M762.0 417.7L764.0 418.7L759.7 425.1L757.7 424.1Z" fill="#adb4bb" stroke="#adb4bb" stroke-width="0.4"/><path d="M764.0 418.7L765.9 419.7L761.6 426.2L759.7 425.1Z" fill="#adb4bb" stroke="#adb4bb" stroke-width="0.4"/><path d="M765.9 419.7L767.9 420.7L763.6 427.2L761.6 426.2Z" fill="#adb4bb" stroke="#adb4bb" stroke-width="0.4"/><path d="M767.9 420.7L769.9 421.7L765.5 428.2L763.6 427.2Z" fill="#adb4bb" stroke="#adb4bb" stroke-width="0.4"/><path d="M687.4 387.3L689.4 388.3L685.6 393.6L683.6 392.5Z" fill="#a7adb3" stroke="#a7adb3" stroke-width="0.4"/><path d="M689.4 388.3L691.3 389.4L687.5 394.6L685.6 393.6Z" fill="#a7adb3" stroke="#a7adb3" stroke-width="0.4"/><path d="M691.3 389.4L693.3 390.4L689.4 395.7L687.5 394.6Z" fill="#a7adb3" stroke="#a7adb3" stroke-width="0.4"/><path d="M693.3 390.4L695.2 391.4L691.4 396.7L689.4 395.7Z" fill="#a7adb3" stroke="#a7adb3" stroke-width="0.4"/><path d="M695.2 391.4L697.2 392.4L693.3 397.8L691.4 396.7Z" fill="#a7adb3" stroke="#a7adb3" stroke-width="0.4"/><path d="M697.2 392.4L699.1 393.5L695.2 398.8L693.3 397.8Z" fill="#a7adb3" stroke="#a7adb3" stroke-width="0.4"/><path d="M699.1 393.5L701.1 394.5L697.2 399.9L695.2 398.8Z" fill="#a8aeb4" stroke="#a8aeb4" stroke-width="0.4"/><path d="M701.1 394.5L703.0 395.5L699.1 400.9L697.2 399.9Z" fill="#9fa5ac" stroke="#9fa5ac" stroke-width="0.4"/><path d="M703.0 395.5L705.0 396.5L701.0 402.0L699.1 400.9Z" fill="#9ea4ab" stroke="#9ea4ab" stroke-width="0.4"/><path d="M705.0 396.5L706.9 397.5L703.0 403.0L701.0 402.0Z" fill="#9fa5ab" stroke="#9fa5ab" stroke-width="0.4"/><path d="M706.9 397.5L708.9 398.6L704.9 404.1L703.0 403.0Z" fill="#9fa5ac" stroke="#9fa5ac" stroke-width="0.4"/><path d="M708.9 398.6L710.8 399.6L706.8 405.2L704.9 404.1Z" fill="#9fa5ac" stroke="#9fa5ac" stroke-width="0.4"/><path d="M710.8 399.6L712.8 400.6L708.8 406.2L706.8 405.2Z" fill="#a0a6ad" stroke="#a0a6ad" stroke-width="0.4"/><path d="M712.8 400.6L714.7 401.6L710.7 407.3L708.8 406.2Z" fill="#a0a6ad" stroke="#a0a6ad" stroke-width="0.4"/><path d="M714.7 401.6L716.7 402.7L712.6 408.3L710.7 407.3Z" fill="#a1a7ae" stroke="#a1a7ae" stroke-width="0.4"/><path d="M716.7 402.7L718.6 403.7L714.6 409.4L712.6 408.3Z" fill="#a4aab0" stroke="#a4aab0" stroke-width="0.4"/><path d="M718.6 403.7L720.6 404.7L716.5 410.4L714.6 409.4Z" fill="#a6acb3" stroke="#a6acb3" stroke-width="0.4"/><path d="M720.6 404.7L722.6 405.7L718.4 411.5L716.5 410.4Z" fill="#a8aeb5" stroke="#a8aeb5" stroke-width="0.4"/><path d="M722.6 405.7L724.5 406.7L720.3 412.5L718.4 411.5Z" fill="#aab0b7" stroke="#aab0b7" stroke-width="0.4"/><path d="M724.5 406.7L726.5 407.8L722.3 413.6L720.3 412.5Z" fill="#adb3b9" stroke="#adb3b9" stroke-width="0.4"/><path d="M726.5 407.8L728.4 408.8L724.2 414.6L722.3 413.6Z" fill="#b0b6bd" stroke="#b0b6bd" stroke-width="0.4"/><path d="M728.4 408.8L730.4 409.8L726.1 415.7L724.2 414.6Z" fill="#b5bbc2" stroke="#b5bbc2" stroke-width="0.4"/><path d="M730.4 409.8L732.3 410.8L728.1 416.7L726.1 415.7Z" fill="#b9c0c6" stroke="#b9c0c6" stroke-width="0.4"/><path d="M732.3 410.8L734.3 411.8L730.0 417.8L728.1 416.7Z" fill="#bbc2c9" stroke="#bbc2c9" stroke-width="0.4"/><path d="M734.3 411.8L736.2 412.9L731.9 418.9L730.0 417.8Z" fill="#bbc2c8" stroke="#bbc2c8" stroke-width="0.4"/><path d="M736.2 412.9L738.2 413.9L733.9 419.9L731.9 418.9Z" fill="#bac1c8" stroke="#bac1c8" stroke-width="0.4"/><path d="M738.2 413.9L740.1 414.9L735.8 421.0L733.9 419.9Z" fill="#b9c0c7" stroke="#b9c0c7" stroke-width="0.4"/><path d="M740.1 414.9L742.1 415.9L737.7 422.0L735.8 421.0Z" fill="#b8bfc6" stroke="#b8bfc6" stroke-width="0.4"/><path d="M742.1 415.9L744.0 417.0L739.7 423.1L737.7 422.0Z" fill="#b5bcc3" stroke="#b5bcc3" stroke-width="0.4"/><path d="M744.0 417.0L746.0 418.0L741.6 424.1L739.7 423.1Z" fill="#b2b9bf" stroke="#b2b9bf" stroke-width="0.4"/><path d="M746.0 418.0L747.9 419.0L743.5 425.2L741.6 424.1Z" fill="#aeb5bc" stroke="#aeb5bc" stroke-width="0.4"/><path d="M747.9 419.0L749.9 420.0L745.5 426.2L743.5 425.2Z" fill="#abb2b9" stroke="#abb2b9" stroke-width="0.4"/><path d="M749.9 420.0L751.9 421.0L747.4 427.3L745.5 426.2Z" fill="#aab1b8" stroke="#aab1b8" stroke-width="0.4"/><path d="M751.9 421.0L753.8 422.1L749.3 428.3L747.4 427.3Z" fill="#aab1b8" stroke="#aab1b8" stroke-width="0.4"/><path d="M753.8 422.1L755.8 423.1L751.3 429.4L749.3 428.3Z" fill="#acb3ba" stroke="#acb3ba" stroke-width="0.4"/><path d="M755.8 423.1L757.7 424.1L753.2 430.4L751.3 429.4Z" fill="#adb4bb" stroke="#adb4bb" stroke-width="0.4"/><path d="M757.7 424.1L759.7 425.1L755.1 431.5L753.2 430.4Z" fill="#adb4bb" stroke="#adb4bb" stroke-width="0.4"/><path d="M759.7 425.1L761.6 426.2L757.1 432.6L755.1 431.5Z" fill="#adb4bb" stroke="#adb4bb" stroke-width="0.4"/><path d="M761.6 426.2L763.6 427.2L759.0 433.6L757.1 432.6Z" fill="#acb3ba" stroke="#acb3ba" stroke-width="0.4"/><path d="M763.6 427.2L765.5 428.2L760.9 434.7L759.0 433.6Z" fill="#acb3ba" stroke="#acb3ba" stroke-width="0.4"/><path d="M683.6 392.5L685.6 393.6L681.7 398.7L679.8 397.6Z" fill="#a7adb3" stroke="#a7adb3" stroke-width="0.4"/><path d="M685.6 393.6L687.5 394.6L683.6 399.8L681.7 398.7Z" fill="#a7adb3" stroke="#a7adb3" stroke-width="0.4"/><path d="M687.5 394.6L689.4 395.7L685.5 400.8L683.6 399.8Z" fill="#a7adb3" stroke="#a7adb3" stroke-width="0.4"/><path d="M689.4 395.7L691.4 396.7L687.4 401.9L685.5 400.8Z" fill="#a7adb3" stroke="#a7adb3" stroke-width="0.4"/><path d="M691.4 396.7L693.3 397.8L689.3 403.0L687.4 401.9Z" fill="#a7adb3" stroke="#a7adb3" stroke-width="0.4"/><path d="M693.3 397.8L695.2 398.8L691.2 404.1L689.3 403.0Z" fill="#a7adb3" stroke="#a7adb3" stroke-width="0.4"/><path d="M695.2 398.8L697.2 399.9L693.1 405.2L691.2 404.1Z" fill="#a9afb5" stroke="#a9afb5" stroke-width="0.4"/><path d="M697.2 399.9L699.1 400.9L695.0 406.3L693.1 405.2Z" fill="#a1a7ae" stroke="#a1a7ae" stroke-width="0.4"/><path d="M699.1 400.9L701.0 402.0L696.9 407.4L695.0 406.3Z" fill="#a1a7ae" stroke="#a1a7ae" stroke-width="0.4"/><path d="M701.0 402.0L703.0 403.0L698.9 408.5L696.9 407.4Z" fill="#a1a7ae" stroke="#a1a7ae" stroke-width="0.4"/><path d="M703.0 403.0L704.9 404.1L700.8 409.6L698.9 408.5Z" fill="#a2a8af" stroke="#a2a8af" stroke-width="0.4"/><path d="M704.9 404.1L706.8 405.2L702.7 410.6L700.8 409.6Z" fill="#a2a8af" stroke="#a2a8af" stroke-width="0.4"/><path d="M706.8 405.2L708.8 406.2L704.6 411.7L702.7 410.6Z" fill="#a3a9b0" stroke="#a3a9b0" stroke-width="0.4"/><path d="M708.8 406.2L710.7 407.3L706.5 412.8L704.6 411.7Z" fill="#a3a9b0" stroke="#a3a9b0" stroke-width="0.4"/><path d="M710.7 407.3L712.6 408.3L708.4 413.9L706.5 412.8Z" fill="#a5abb1" stroke="#a5abb1" stroke-width="0.4"/><path d="M712.6 408.3L714.6 409.4L710.3 415.0L708.4 413.9Z" fill="#a7adb4" stroke="#a7adb4" stroke-width="0.4"/><path d="M714.6 409.4L716.5 410.4L712.2 416.1L710.3 415.0Z" fill="#a9b0b6" stroke="#a9b0b6" stroke-width="0.4"/><path d="M716.5 410.4L718.4 411.5L714.1 417.2L712.2 416.1Z" fill="#acb2b9" stroke="#acb2b9" stroke-width="0.4"/><path d="M718.4 411.5L720.3 412.5L716.0 418.3L714.1 417.2Z" fill="#afb5bb" stroke="#afb5bb" stroke-width="0.4"/><path d="M720.3 412.5L722.3 413.6L717.9 419.3L716.0 418.3Z" fill="#b2b8be" stroke="#b2b8be" stroke-width="0.4"/><path d="M722.3 413.6L724.2 414.6L719.9 420.4L717.9 419.3Z" fill="#b6bcc2" stroke="#b6bcc2" stroke-width="0.4"/><path d="M724.2 414.6L726.1 415.7L721.8 421.5L719.9 420.4Z" fill="#bbc1c7" stroke="#bbc1c7" stroke-width="0.4"/><path d="M726.1 415.7L728.1 416.7L723.7 422.6L721.8 421.5Z" fill="#bfc6cc" stroke="#bfc6cc" stroke-width="0.4"/><path d="M728.1 416.7L730.0 417.8L725.6 423.7L723.7 422.6Z" fill="#c1c8ce" stroke="#c1c8ce" stroke-width="0.4"/><path d="M730.0 417.8L731.9 418.9L727.5 424.8L725.6 423.7Z" fill="#c0c7cd" stroke="#c0c7cd" stroke-width="0.4"/><path d="M731.9 418.9L733.9 419.9L729.4 425.9L727.5 424.8Z" fill="#bfc5cc" stroke="#bfc5cc" stroke-width="0.4"/><path d="M733.9 419.9L735.8 421.0L731.3 427.0L729.4 425.9Z" fill="#bdc4ca" stroke="#bdc4ca" stroke-width="0.4"/><path d="M735.8 421.0L737.7 422.0L733.2 428.1L731.3 427.0Z" fill="#bac1c8" stroke="#bac1c8" stroke-width="0.4"/><path d="M737.7 422.0L739.7 423.1L735.1 429.1L733.2 428.1Z" fill="#b7bec4" stroke="#b7bec4" stroke-width="0.4"/><path d="M739.7 423.1L741.6 424.1L737.0 430.2L735.1 429.1Z" fill="#b3bac1" stroke="#b3bac1" stroke-width="0.4"/><path d="M741.6 424.1L743.5 425.2L738.9 431.3L737.0 430.2Z" fill="#b0b7be" stroke="#b0b7be" stroke-width="0.4"/><path d="M743.5 425.2L745.5 426.2L740.9 432.4L738.9 431.3Z" fill="#acb3ba" stroke="#acb3ba" stroke-width="0.4"/><path d="M745.5 426.2L747.4 427.3L742.8 433.5L740.9 432.4Z" fill="#aab1b8" stroke="#aab1b8" stroke-width="0.4"/><path d="M747.4 427.3L749.3 428.3L744.7 434.6L742.8 433.5Z" fill="#aab1b8" stroke="#aab1b8" stroke-width="0.4"/><path d="M749.3 428.3L751.3 429.4L746.6 435.7L744.7 434.6Z" fill="#acb3ba" stroke="#acb3ba" stroke-width="0.4"/><path d="M751.3 429.4L753.2 430.4L748.5 436.8L746.6 435.7Z" fill="#adb4bb" stroke="#adb4bb" stroke-width="0.4"/><path d="M753.2 430.4L755.1 431.5L750.4 437.8L748.5 436.8Z" fill="#adb4bb" stroke="#adb4bb" stroke-width="0.4"/><path d="M755.1 431.5L757.1 432.6L752.3 438.9L750.4 437.8Z" fill="#acb3ba" stroke="#acb3ba" stroke-width="0.4"/><path d="M757.1 432.6L759.0 433.6L754.2 440.0L752.3 438.9Z" fill="#acb3ba" stroke="#acb3ba" stroke-width="0.4"/><path d="M759.0 433.6L760.9 434.7L756.1 441.1L754.2 440.0Z" fill="#abb2b9" stroke="#abb2b9" stroke-width="0.4"/><path d="M679.8 397.6L681.7 398.7L677.7 403.7L675.8 402.6Z" fill="#a7adb3" stroke="#a7adb3" stroke-width="0.4"/><path d="M681.7 398.7L683.6 399.8L679.6 404.8L677.7 403.7Z" fill="#a7adb3" stroke="#a7adb3" stroke-width="0.4"/><path d="M683.6 399.8L685.5 400.8L681.5 405.9L679.6 404.8Z" fill="#a7adb3" stroke="#a7adb3" stroke-width="0.4"/><path d="M685.5 400.8L687.4 401.9L683.4 407.1L681.5 405.9Z" fill="#a8aeb4" stroke="#a8aeb4" stroke-width="0.4"/><path d="M687.4 401.9L689.3 403.0L685.2 408.2L683.4 407.1Z" fill="#a8aeb4" stroke="#a8aeb4" stroke-width="0.4"/><path d="M689.3 403.0L691.2 404.1L687.1 409.3L685.2 408.2Z" fill="#a8aeb4" stroke="#a8aeb4" stroke-width="0.4"/><path d="M691.2 404.1L693.1 405.2L689.0 410.4L687.1 409.3Z" fill="#aab0b6" stroke="#aab0b6" stroke-width="0.4"/><path d="M693.1 405.2L695.0 406.3L690.9 411.6L689.0 410.4Z" fill="#a4aab1" stroke="#a4aab1" stroke-width="0.4"/><path d="M695.0 406.3L696.9 407.4L692.8 412.7L690.9 411.6Z" fill="#a4aab1" stroke="#a4aab1" stroke-width="0.4"/><path d="M696.9 407.4L698.9 408.5L694.6 413.8L692.8 412.7Z" fill="#a4aab1" stroke="#a4aab1" stroke-width="0.4"/><path d="M698.9 408.5L700.8 409.6L696.5 414.9L694.6 413.8Z" fill="#a5abb2" stroke="#a5abb2" stroke-width="0.4"/><path d="M700.8 409.6L702.7 410.6L698.4 416.1L696.5 414.9Z" fill="#a6acb2" stroke="#a6acb2" stroke-width="0.4"/><path d="M702.7 410.6L704.6 411.7L700.3 417.2L698.4 416.1Z" fill="#a6acb3" stroke="#a6acb3" stroke-width="0.4"/><path d="M704.6 411.7L706.5 412.8L702.2 418.3L700.3 417.2Z" fill="#a7adb3" stroke="#a7adb3" stroke-width="0.4"/><path d="M706.5 412.8L708.4 413.9L704.1 419.4L702.2 418.3Z" fill="#a8afb5" stroke="#a8afb5" stroke-width="0.4"/><path d="M708.4 413.9L710.3 415.0L705.9 420.6L704.1 419.4Z" fill="#abb1b8" stroke="#abb1b8" stroke-width="0.4"/><path d="M710.3 415.0L712.2 416.1L707.8 421.7L705.9 420.6Z" fill="#aeb4ba" stroke="#aeb4ba" stroke-width="0.4"/><path d="M712.2 416.1L714.1 417.2L709.7 422.8L707.8 421.7Z" fill="#b1b7bd" stroke="#b1b7bd" stroke-width="0.4"/><path d="M714.1 417.2L716.0 418.3L711.6 423.9L709.7 422.8Z" fill="#b4bac0" stroke="#b4bac0" stroke-width="0.4"/><path d="M716.0 418.3L717.9 419.3L713.5 425.1L711.6 423.9Z" fill="#b8bec4" stroke="#b8bec4" stroke-width="0.4"/><path d="M717.9 419.3L719.9 420.4L715.3 426.2L713.5 425.1Z" fill="#bdc3c9" stroke="#bdc3c9" stroke-width="0.4"/><path d="M719.9 420.4L721.8 421.5L717.2 427.3L715.3 426.2Z" fill="#c2c8ce" stroke="#c2c8ce" stroke-width="0.4"/><path d="M721.8 421.5L723.7 422.6L719.1 428.4L717.2 427.3Z" fill="#c6cdd2" stroke="#c6cdd2" stroke-width="0.4"/><path d="M723.7 422.6L725.6 423.7L721.0 429.6L719.1 428.4Z" fill="#c8ced4" stroke="#c8ced4" stroke-width="0.4"/><path d="M725.6 423.7L727.5 424.8L722.9 430.7L721.0 429.6Z" fill="#c6cdd3" stroke="#c6cdd3" stroke-width="0.4"/><path d="M727.5 424.8L729.4 425.9L724.7 431.8L722.9 430.7Z" fill="#c4cad0" stroke="#c4cad0" stroke-width="0.4"/><path d="M729.4 425.9L731.3 427.0L726.6 432.9L724.7 431.8Z" fill="#c1c8ce" stroke="#c1c8ce" stroke-width="0.4"/><path d="M731.3 427.0L733.2 428.1L728.5 434.0L726.6 432.9Z" fill="#bdc4cb" stroke="#bdc4cb" stroke-width="0.4"/><path d="M733.2 428.1L735.1 429.1L730.4 435.2L728.5 434.0Z" fill="#b9c0c7" stroke="#b9c0c7" stroke-width="0.4"/><path d="M735.1 429.1L737.0 430.2L732.3 436.3L730.4 435.2Z" fill="#b5bcc3" stroke="#b5bcc3" stroke-width="0.4"/><path d="M737.0 430.2L738.9 431.3L734.2 437.4L732.3 436.3Z" fill="#b1b8bf" stroke="#b1b8bf" stroke-width="0.4"/><path d="M738.9 431.3L740.9 432.4L736.0 438.5L734.2 437.4Z" fill="#adb4bb" stroke="#adb4bb" stroke-width="0.4"/><path d="M740.9 432.4L742.8 433.5L737.9 439.7L736.0 438.5Z" fill="#abb2b9" stroke="#abb2b9" stroke-width="0.4"/><path d="M742.8 433.5L744.7 434.6L739.8 440.8L737.9 439.7Z" fill="#abb2b9" stroke="#abb2b9" stroke-width="0.4"/><path d="M744.7 434.6L746.6 435.7L741.7 441.9L739.8 440.8Z" fill="#acb3ba" stroke="#acb3ba" stroke-width="0.4"/><path d="M746.6 435.7L748.5 436.8L743.6 443.0L741.7 441.9Z" fill="#adb4bb" stroke="#adb4bb" stroke-width="0.4"/><path d="M748.5 436.8L750.4 437.8L745.4 444.2L743.6 443.0Z" fill="#acb3ba" stroke="#acb3ba" stroke-width="0.4"/><path d="M750.4 437.8L752.3 438.9L747.3 445.3L745.4 444.2Z" fill="#abb2b9" stroke="#abb2b9" stroke-width="0.4"/><path d="M752.3 438.9L754.2 440.0L749.2 446.4L747.3 445.3Z" fill="#abb2b9" stroke="#abb2b9" stroke-width="0.4"/><path d="M754.2 440.0L756.1 441.1L751.1 447.5L749.2 446.4Z" fill="#aab1b8" stroke="#aab1b8" stroke-width="0.4"/><path d="M675.8 402.6L677.7 403.7L673.7 408.6L671.8 407.5Z" fill="#a8aeb4" stroke="#a8aeb4" stroke-width="0.4"/><path d="M677.7 403.7L679.6 404.8L675.5 409.8L673.7 408.6Z" fill="#a8aeb4" stroke="#a8aeb4" stroke-width="0.4"/><path d="M679.6 404.8L681.5 405.9L677.4 410.9L675.5 409.8Z" fill="#a8aeb4" stroke="#a8aeb4" stroke-width="0.4"/><path d="M681.5 405.9L683.4 407.1L679.2 412.1L677.4 410.9Z" fill="#a8aeb4" stroke="#a8aeb4" stroke-width="0.4"/><path d="M683.4 407.1L685.2 408.2L681.1 413.3L679.2 412.1Z" fill="#a8aeb4" stroke="#a8aeb4" stroke-width="0.4"/><path d="M685.2 408.2L687.1 409.3L682.9 414.4L681.1 413.3Z" fill="#a8aeb4" stroke="#a8aeb4" stroke-width="0.4"/><path d="M687.1 409.3L689.0 410.4L684.8 415.6L682.9 414.4Z" fill="#abb1b7" stroke="#abb1b7" stroke-width="0.4"/><path d="M689.0 410.4L690.9 411.6L686.6 416.8L684.8 415.6Z" fill="#a7adb4" stroke="#a7adb4" stroke-width="0.4"/><path d="M690.9 411.6L692.8 412.7L688.5 417.9L686.6 416.8Z" fill="#a7adb4" stroke="#a7adb4" stroke-width="0.4"/><path d="M692.8 412.7L694.6 413.8L690.3 419.1L688.5 417.9Z" fill="#a8aeb4" stroke="#a8aeb4" stroke-width="0.4"/><path d="M694.6 413.8L696.5 414.9L692.2 420.2L690.3 419.1Z" fill="#a9afb5" stroke="#a9afb5" stroke-width="0.4"/><path d="M696.5 414.9L698.4 416.1L694.0 421.4L692.2 420.2Z" fill="#a9afb6" stroke="#a9afb6" stroke-width="0.4"/><path d="M698.4 416.1L700.3 417.2L695.9 422.6L694.0 421.4Z" fill="#aab0b7" stroke="#aab0b7" stroke-width="0.4"/><path d="M700.3 417.2L702.2 418.3L697.7 423.7L695.9 422.6Z" fill="#abb1b7" stroke="#abb1b7" stroke-width="0.4"/><path d="M702.2 418.3L704.1 419.4L699.6 424.9L697.7 423.7Z" fill="#adb3b9" stroke="#adb3b9" stroke-width="0.4"/><path d="M704.1 419.4L705.9 420.6L701.4 426.1L699.6 424.9Z" fill="#b0b6bc" stroke="#b0b6bc" stroke-width="0.4"/><path d="M705.9 420.6L707.8 421.7L703.3 427.2L701.4 426.1Z" fill="#b3b9bf" stroke="#b3b9bf" stroke-width="0.4"/><path d="M707.8 421.7L709.7 422.8L705.1 428.4L703.3 427.2Z" fill="#b6bcc2" stroke="#b6bcc2" stroke-width="0.4"/><path d="M709.7 422.8L711.6 423.9L707.0 429.5L705.1 428.4Z" fill="#bac0c6" stroke="#bac0c6" stroke-width="0.4"/><path d="M711.6 423.9L713.5 425.1L708.8 430.7L707.0 429.5Z" fill="#bfc5cb" stroke="#bfc5cb" stroke-width="0.4"/><path d="M713.5 425.1L715.3 426.2L710.7 431.9L708.8 430.7Z" fill="#c4cad0" stroke="#c4cad0" stroke-width="0.4"/><path d="M715.3 426.2L717.2 427.3L712.5 433.0L710.7 431.9Z" fill="#c9cfd5" stroke="#c9cfd5" stroke-width="0.4"/><path d="M717.2 427.3L719.1 428.4L714.4 434.2L712.5 433.0Z" fill="#ced4d9" stroke="#ced4d9" stroke-width="0.4"/><path d="M719.1 428.4L721.0 429.6L716.2 435.4L714.4 434.2Z" fill="#cfd5da" stroke="#cfd5da" stroke-width="0.4"/><path d="M721.0 429.6L722.9 430.7L718.1 436.5L716.2 435.4Z" fill="#cdd3d9" stroke="#cdd3d9" stroke-width="0.4"/><path d="M722.9 430.7L724.7 431.8L719.9 437.7L718.1 436.5Z" fill="#c9d0d6" stroke="#c9d0d6" stroke-width="0.4"/><path d="M724.7 431.8L726.6 432.9L721.8 438.8L719.9 437.7Z" fill="#c5ccd2" stroke="#c5ccd2" stroke-width="0.4"/><path d="M726.6 432.9L728.5 434.0L723.6 440.0L721.8 438.8Z" fill="#c0c7ce" stroke="#c0c7ce" stroke-width="0.4"/><path d="M728.5 434.0L730.4 435.2L725.5 441.2L723.6 440.0Z" fill="#bbc2c9" stroke="#bbc2c9" stroke-width="0.4"/><path d="M730.4 435.2L732.3 436.3L727.3 442.3L725.5 441.2Z" fill="#b7bec5" stroke="#b7bec5" stroke-width="0.4"/><path d="M732.3 436.3L734.2 437.4L729.2 443.5L727.3 442.3Z" fill="#b3bac1" stroke="#b3bac1" stroke-width="0.4"/><path d="M734.2 437.4L736.0 438.5L731.0 444.7L729.2 443.5Z" fill="#afb6bc" stroke="#afb6bc" stroke-width="0.4"/><path d="M736.0 438.5L737.9 439.7L732.9 445.8L731.0 444.7Z" fill="#acb3ba" stroke="#acb3ba" stroke-width="0.4"/><path d="M737.9 439.7L739.8 440.8L734.7 447.0L732.9 445.8Z" fill="#abb2b9" stroke="#abb2b9" stroke-width="0.4"/><path d="M739.8 440.8L741.7 441.9L736.6 448.1L734.7 447.0Z" fill="#acb3ba" stroke="#acb3ba" stroke-width="0.4"/><path d="M741.7 441.9L743.6 443.0L738.4 449.3L736.6 448.1Z" fill="#acb3ba" stroke="#acb3ba" stroke-width="0.4"/><path d="M743.6 443.0L745.4 444.2L740.3 450.5L738.4 449.3Z" fill="#abb2b9" stroke="#abb2b9" stroke-width="0.4"/><path d="M745.4 444.2L747.3 445.3L742.1 451.6L740.3 450.5Z" fill="#aab1b8" stroke="#aab1b8" stroke-width="0.4"/><path d="M747.3 445.3L749.2 446.4L744.0 452.8L742.1 451.6Z" fill="#a9b0b7" stroke="#a9b0b7" stroke-width="0.4"/><path d="M749.2 446.4L751.1 447.5L745.8 454.0L744.0 452.8Z" fill="#a9b0b7" stroke="#a9b0b7" stroke-width="0.4"/><path d="M671.8 407.5L673.7 408.6L669.6 413.4L667.8 412.2Z" fill="#a8aeb4" stroke="#a8aeb4" stroke-width="0.4"/><path d="M673.7 408.6L675.5 409.8L671.4 414.6L669.6 413.4Z" fill="#a8aeb4" stroke="#a8aeb4" stroke-width="0.4"/><path d="M675.5 409.8L677.4 410.9L673.2 415.8L671.4 414.6Z" fill="#a8aeb4" stroke="#a8aeb4" stroke-width="0.4"/><path d="M677.4 410.9L679.2 412.1L675.1 417.1L673.2 415.8Z" fill="#a8aeb4" stroke="#a8aeb4" stroke-width="0.4"/><path d="M679.2 412.1L681.1 413.3L676.9 418.3L675.1 417.1Z" fill="#a8aeb4" stroke="#a8aeb4" stroke-width="0.4"/><path d="M681.1 413.3L682.9 414.4L678.7 419.5L676.9 418.3Z" fill="#a8aeb4" stroke="#a8aeb4" stroke-width="0.4"/><path d="M682.9 414.4L684.8 415.6L680.5 420.7L678.7 419.5Z" fill="#acb2b8" stroke="#acb2b8" stroke-width="0.4"/><path d="M684.8 415.6L686.6 416.8L682.3 421.9L680.5 420.7Z" fill="#aab0b7" stroke="#aab0b7" stroke-width="0.4"/><path d="M686.6 416.8L688.5 417.9L684.1 423.1L682.3 421.9Z" fill="#abb1b7" stroke="#abb1b7" stroke-width="0.4"/><path d="M688.5 417.9L690.3 419.1L685.9 424.3L684.1 423.1Z" fill="#abb1b8" stroke="#abb1b8" stroke-width="0.4"/><path d="M690.3 419.1L692.2 420.2L687.7 425.5L685.9 424.3Z" fill="#acb2b9" stroke="#acb2b9" stroke-width="0.4"/><path d="M692.2 420.2L694.0 421.4L689.6 426.7L687.7 425.5Z" fill="#adb3b9" stroke="#adb3b9" stroke-width="0.4"/><path d="M694.0 421.4L695.9 422.6L691.4 427.9L689.6 426.7Z" fill="#aeb4ba" stroke="#aeb4ba" stroke-width="0.4"/><path d="M695.9 422.6L697.7 423.7L693.2 429.1L691.4 427.9Z" fill="#afb5bb" stroke="#afb5bb" stroke-width="0.4"/><path d="M697.7 423.7L699.6 424.9L695.0 430.3L693.2 429.1Z" fill="#b1b7bd" stroke="#b1b7bd" stroke-width="0.4"/><path d="M699.6 424.9L701.4 426.1L696.8 431.5L695.0 430.3Z" fill="#b4bac0" stroke="#b4bac0" stroke-width="0.4"/><path d="M701.4 426.1L703.3 427.2L698.6 432.7L696.8 431.5Z" fill="#b7bec4" stroke="#b7bec4" stroke-width="0.4"/><path d="M703.3 427.2L705.1 428.4L700.4 433.9L698.6 432.7Z" fill="#bbc1c7" stroke="#bbc1c7" stroke-width="0.4"/><path d="M705.1 428.4L707.0 429.5L702.3 435.1L700.4 433.9Z" fill="#bfc6cc" stroke="#bfc6cc" stroke-width="0.4"/><path d="M707.0 429.5L708.8 430.7L704.1 436.3L702.3 435.1Z" fill="#c5cbd1" stroke="#c5cbd1" stroke-width="0.4"/><path d="M708.8 430.7L710.7 431.9L705.9 437.5L704.1 436.3Z" fill="#cbd2d7" stroke="#cbd2d7" stroke-width="0.4"/><path d="M710.7 431.9L712.5 433.0L707.7 438.7L705.9 437.5Z" fill="#d1d7dc" stroke="#d1d7dc" stroke-width="0.4"/><path d="M712.5 433.0L714.4 434.2L709.5 439.9L707.7 438.7Z" fill="#d6dce1" stroke="#d6dce1" stroke-width="0.4"/><path d="M714.4 434.2L716.2 435.4L711.3 441.1L709.5 439.9Z" fill="#d6dce1" stroke="#d6dce1" stroke-width="0.4"/><path d="M716.2 435.4L718.1 436.5L713.1 442.3L711.3 441.1Z" fill="#d3dadf" stroke="#d3dadf" stroke-width="0.4"/><path d="M718.1 436.5L719.9 437.7L714.9 443.5L713.1 442.3Z" fill="#cfd5db" stroke="#cfd5db" stroke-width="0.4"/><path d="M719.9 437.7L721.8 438.8L716.8 444.7L714.9 443.5Z" fill="#c9d0d6" stroke="#c9d0d6" stroke-width="0.4"/><path d="M721.8 438.8L723.6 440.0L718.6 445.9L716.8 444.7Z" fill="#c4cbd1" stroke="#c4cbd1" stroke-width="0.4"/><path d="M723.6 440.0L725.5 441.2L720.4 447.1L718.6 445.9Z" fill="#bec5cb" stroke="#bec5cb" stroke-width="0.4"/><path d="M725.5 441.2L727.3 442.3L722.2 448.3L720.4 447.1Z" fill="#b9c0c7" stroke="#b9c0c7" stroke-width="0.4"/><path d="M727.3 442.3L729.2 443.5L724.0 449.5L722.2 448.3Z" fill="#b5bcc2" stroke="#b5bcc2" stroke-width="0.4"/><path d="M729.2 443.5L731.0 444.7L725.8 450.7L724.0 449.5Z" fill="#b0b7be" stroke="#b0b7be" stroke-width="0.4"/><path d="M731.0 444.7L732.9 445.8L727.6 451.9L725.8 450.7Z" fill="#adb4bb" stroke="#adb4bb" stroke-width="0.4"/><path d="M732.9 445.8L734.7 447.0L729.4 453.1L727.6 451.9Z" fill="#acb3ba" stroke="#acb3ba" stroke-width="0.4"/><path d="M734.7 447.0L736.6 448.1L731.3 454.3L729.4 453.1Z" fill="#acb3ba" stroke="#acb3ba" stroke-width="0.4"/><path d="M736.6 448.1L738.4 449.3L733.1 455.5L731.3 454.3Z" fill="#acb3ba" stroke="#acb3ba" stroke-width="0.4"/><path d="M738.4 449.3L740.3 450.5L734.9 456.7L733.1 455.5Z" fill="#abb2b9" stroke="#abb2b9" stroke-width="0.4"/><path d="M740.3 450.5L742.1 451.6L736.7 458.0L734.9 456.7Z" fill="#a9b0b7" stroke="#a9b0b7" stroke-width="0.4"/><path d="M742.1 451.6L744.0 452.8L738.5 459.2L736.7 458.0Z" fill="#a8afb6" stroke="#a8afb6" stroke-width="0.4"/><path d="M744.0 452.8L745.8 454.0L740.3 460.4L738.5 459.2Z" fill="#a7aeb5" stroke="#a7aeb5" stroke-width="0.4"/><path d="M667.8 412.2L669.6 413.4L665.5 418.2L663.7 416.9Z" fill="#a8aeb4" stroke="#a8aeb4" stroke-width="0.4"/><path d="M669.6 413.4L671.4 414.6L667.3 419.4L665.5 418.2Z" fill="#a8aeb4" stroke="#a8aeb4" stroke-width="0.4"/><path d="M671.4 414.6L673.2 415.8L669.1 420.6L667.3 419.4Z" fill="#a8aeb4" stroke="#a8aeb4" stroke-width="0.4"/><path d="M673.2 415.8L675.1 417.1L670.8 421.9L669.1 420.6Z" fill="#a8aeb4" stroke="#a8aeb4" stroke-width="0.4"/><path d="M675.1 417.1L676.9 418.3L672.6 423.1L670.8 421.9Z" fill="#a8aeb4" stroke="#a8aeb4" stroke-width="0.4"/><path d="M676.9 418.3L678.7 419.5L674.4 424.4L672.6 423.1Z" fill="#a8aeb4" stroke="#a8aeb4" stroke-width="0.4"/><path d="M678.7 419.5L680.5 420.7L676.1 425.6L674.4 424.4Z" fill="#adb3b9" stroke="#adb3b9" stroke-width="0.4"/><path d="M680.5 420.7L682.3 421.9L677.9 426.9L676.1 425.6Z" fill="#adb3b9" stroke="#adb3b9" stroke-width="0.4"/><path d="M682.3 421.9L684.1 423.1L679.7 428.1L677.9 426.9Z" fill="#aeb4ba" stroke="#aeb4ba" stroke-width="0.4"/><path d="M684.1 423.1L685.9 424.3L681.5 429.4L679.7 428.1Z" fill="#afb5bb" stroke="#afb5bb" stroke-width="0.4"/><path d="M685.9 424.3L687.7 425.5L683.2 430.6L681.5 429.4Z" fill="#b0b6bc" stroke="#b0b6bc" stroke-width="0.4"/><path d="M687.7 425.5L689.6 426.7L685.0 431.9L683.2 430.6Z" fill="#b1b7bd" stroke="#b1b7bd" stroke-width="0.4"/><path d="M689.6 426.7L691.4 427.9L686.8 433.1L685.0 431.9Z" fill="#b1b7be" stroke="#b1b7be" stroke-width="0.4"/><path d="M691.4 427.9L693.2 429.1L688.5 434.4L686.8 433.1Z" fill="#b2b8bf" stroke="#b2b8bf" stroke-width="0.4"/><path d="M693.2 429.1L695.0 430.3L690.3 435.6L688.5 434.4Z" fill="#b5bbc1" stroke="#b5bbc1" stroke-width="0.4"/><path d="M695.0 430.3L696.8 431.5L692.1 436.8L690.3 435.6Z" fill="#b8bfc5" stroke="#b8bfc5" stroke-width="0.4"/><path d="M696.8 431.5L698.6 432.7L693.9 438.1L692.1 436.8Z" fill="#bcc2c8" stroke="#bcc2c8" stroke-width="0.4"/><path d="M698.6 432.7L700.4 433.9L695.6 439.3L693.9 438.1Z" fill="#c0c6cc" stroke="#c0c6cc" stroke-width="0.4"/><path d="M700.4 433.9L702.3 435.1L697.4 440.6L695.6 439.3Z" fill="#c5cbd1" stroke="#c5cbd1" stroke-width="0.4"/><path d="M702.3 435.1L704.1 436.3L699.2 441.8L697.4 440.6Z" fill="#cbd2d7" stroke="#cbd2d7" stroke-width="0.4"/><path d="M704.1 436.3L705.9 437.5L700.9 443.1L699.2 441.8Z" fill="#d2d8dd" stroke="#d2d8dd" stroke-width="0.4"/><path d="M705.9 437.5L707.7 438.7L702.7 444.3L700.9 443.1Z" fill="#d8dee3" stroke="#d8dee3" stroke-width="0.4"/><path d="M707.7 438.7L709.5 439.9L704.5 445.6L702.7 444.3Z" fill="#dee3e8" stroke="#dee3e8" stroke-width="0.4"/><path d="M709.5 439.9L711.3 441.1L706.3 446.8L704.5 445.6Z" fill="#dde3e7" stroke="#dde3e7" stroke-width="0.4"/><path d="M711.3 441.1L713.1 442.3L708.0 448.1L706.3 446.8Z" fill="#dae0e4" stroke="#dae0e4" stroke-width="0.4"/><path d="M713.1 442.3L714.9 443.5L709.8 449.3L708.0 448.1Z" fill="#d4dadf" stroke="#d4dadf" stroke-width="0.4"/><path d="M714.9 443.5L716.8 444.7L711.6 450.6L709.8 449.3Z" fill="#cdd4da" stroke="#cdd4da" stroke-width="0.4"/><path d="M716.8 444.7L718.6 445.9L713.3 451.8L711.6 450.6Z" fill="#c7ced4" stroke="#c7ced4" stroke-width="0.4"/><path d="M718.6 445.9L720.4 447.1L715.1 453.0L713.3 451.8Z" fill="#c0c7ce" stroke="#c0c7ce" stroke-width="0.4"/><path d="M720.4 447.1L722.2 448.3L716.9 454.3L715.1 453.0Z" fill="#bbc2c9" stroke="#bbc2c9" stroke-width="0.4"/><path d="M722.2 448.3L724.0 449.5L718.7 455.5L716.9 454.3Z" fill="#b6bdc4" stroke="#b6bdc4" stroke-width="0.4"/><path d="M724.0 449.5L725.8 450.7L720.4 456.8L718.7 455.5Z" fill="#b1b8bf" stroke="#b1b8bf" stroke-width="0.4"/><path d="M725.8 450.7L727.6 451.9L722.2 458.0L720.4 456.8Z" fill="#aeb5bc" stroke="#aeb5bc" stroke-width="0.4"/><path d="M727.6 451.9L729.4 453.1L724.0 459.3L722.2 458.0Z" fill="#acb3ba" stroke="#acb3ba" stroke-width="0.4"/><path d="M729.4 453.1L731.3 454.3L725.7 460.5L724.0 459.3Z" fill="#acb3ba" stroke="#acb3ba" stroke-width="0.4"/><path d="M731.3 454.3L733.1 455.5L727.5 461.8L725.7 460.5Z" fill="#abb2b9" stroke="#abb2b9" stroke-width="0.4"/><path d="M733.1 455.5L734.9 456.7L729.3 463.0L727.5 461.8Z" fill="#aab1b8" stroke="#aab1b8" stroke-width="0.4"/><path d="M734.9 456.7L736.7 458.0L731.1 464.3L729.3 463.0Z" fill="#a9b0b7" stroke="#a9b0b7" stroke-width="0.4"/><path d="M736.7 458.0L738.5 459.2L732.8 465.5L731.1 464.3Z" fill="#a7aeb5" stroke="#a7aeb5" stroke-width="0.4"/><path d="M738.5 459.2L740.3 460.4L734.6 466.7L732.8 465.5Z" fill="#a6adb4" stroke="#a6adb4" stroke-width="0.4"/><path d="M663.7 416.9L665.5 418.2L661.4 422.8L659.7 421.5Z" fill="#a8aeb4" stroke="#a8aeb4" stroke-width="0.4"/><path d="M665.5 418.2L667.3 419.4L663.1 424.1L661.4 422.8Z" fill="#a8aeb4" stroke="#a8aeb4" stroke-width="0.4"/><path d="M667.3 419.4L669.1 420.6L664.8 425.3L663.1 424.1Z" fill="#a8aeb4" stroke="#a8aeb4" stroke-width="0.4"/><path d="M669.1 420.6L670.8 421.9L666.6 426.6L664.8 425.3Z" fill="#a8aeb4" stroke="#a8aeb4" stroke-width="0.4"/><path d="M670.8 421.9L672.6 423.1L668.3 427.9L666.6 426.6Z" fill="#a9afb5" stroke="#a9afb5" stroke-width="0.4"/><path d="M672.6 423.1L674.4 424.4L670.0 429.2L668.3 427.9Z" fill="#a9afb5" stroke="#a9afb5" stroke-width="0.4"/><path d="M674.4 424.4L676.1 425.6L671.7 430.5L670.0 429.2Z" fill="#aeb4ba" stroke="#aeb4ba" stroke-width="0.4"/><path d="M676.1 425.6L677.9 426.9L673.5 431.8L671.7 430.5Z" fill="#b0b6bc" stroke="#b0b6bc" stroke-width="0.4"/><path d="M677.9 426.9L679.7 428.1L675.2 433.1L673.5 431.8Z" fill="#b1b7bd" stroke="#b1b7bd" stroke-width="0.4"/><path d="M679.7 428.1L681.5 429.4L676.9 434.4L675.2 433.1Z" fill="#b2b8be" stroke="#b2b8be" stroke-width="0.4"/><path d="M681.5 429.4L683.2 430.6L678.6 435.7L676.9 434.4Z" fill="#b3b9bf" stroke="#b3b9bf" stroke-width="0.4"/><path d="M683.2 430.6L685.0 431.9L680.4 437.0L678.6 435.7Z" fill="#b4bac0" stroke="#b4bac0" stroke-width="0.4"/><path d="M685.0 431.9L686.8 433.1L682.1 438.3L680.4 437.0Z" fill="#b5bbc1" stroke="#b5bbc1" stroke-width="0.4"/><path d="M686.8 433.1L688.5 434.4L683.8 439.6L682.1 438.3Z" fill="#b6bcc2" stroke="#b6bcc2" stroke-width="0.4"/><path d="M688.5 434.4L690.3 435.6L685.5 440.8L683.8 439.6Z" fill="#b8bec4" stroke="#b8bec4" stroke-width="0.4"/><path d="M690.3 435.6L692.1 436.8L687.3 442.1L685.5 440.8Z" fill="#bcc2c8" stroke="#bcc2c8" stroke-width="0.4"/><path d="M692.1 436.8L693.9 438.1L689.0 443.4L687.3 442.1Z" fill="#c0c6cc" stroke="#c0c6cc" stroke-width="0.4"/><path d="M693.9 438.1L695.6 439.3L690.7 444.7L689.0 443.4Z" fill="#c4cbd0" stroke="#c4cbd0" stroke-width="0.4"/><path d="M695.6 439.3L697.4 440.6L692.4 446.0L690.7 444.7Z" fill="#c9d0d5" stroke="#c9d0d5" stroke-width="0.4"/><path d="M697.4 440.6L699.2 441.8L694.2 447.3L692.4 446.0Z" fill="#d1d7dc" stroke="#d1d7dc" stroke-width="0.4"/><path d="M699.2 441.8L700.9 443.1L695.9 448.6L694.2 447.3Z" fill="#d8dee3" stroke="#d8dee3" stroke-width="0.4"/><path d="M700.9 443.1L702.7 444.3L697.6 449.9L695.9 448.6Z" fill="#dfe4e8" stroke="#dfe4e8" stroke-width="0.4"/><path d="M702.7 444.3L704.5 445.6L699.3 451.2L697.6 449.9Z" fill="#e4eaed" stroke="#e4eaed" stroke-width="0.4"/><path d="M704.5 445.6L706.3 446.8L701.1 452.5L699.3 451.2Z" fill="#e3e9ed" stroke="#e3e9ed" stroke-width="0.4"/><path d="M706.3 446.8L708.0 448.1L702.8 453.8L701.1 452.5Z" fill="#dfe5e9" stroke="#dfe5e9" stroke-width="0.4"/><path d="M708.0 448.1L709.8 449.3L704.5 455.1L702.8 453.8Z" fill="#d8dfe4" stroke="#d8dfe4" stroke-width="0.4"/><path d="M709.8 449.3L711.6 450.6L706.2 456.3L704.5 455.1Z" fill="#d1d7dd" stroke="#d1d7dd" stroke-width="0.4"/><path d="M711.6 450.6L713.3 451.8L708.0 457.6L706.2 456.3Z" fill="#c9d0d6" stroke="#c9d0d6" stroke-width="0.4"/><path d="M713.3 451.8L715.1 453.0L709.7 458.9L708.0 457.6Z" fill="#c2c9d0" stroke="#c2c9d0" stroke-width="0.4"/><path d="M715.1 453.0L716.9 454.3L711.4 460.2L709.7 458.9Z" fill="#bdc4ca" stroke="#bdc4ca" stroke-width="0.4"/><path d="M716.9 454.3L718.7 455.5L713.1 461.5L711.4 460.2Z" fill="#b7bec5" stroke="#b7bec5" stroke-width="0.4"/><path d="M718.7 455.5L720.4 456.8L714.9 462.8L713.1 461.5Z" fill="#b2b9c0" stroke="#b2b9c0" stroke-width="0.4"/><path d="M720.4 456.8L722.2 458.0L716.6 464.1L714.9 462.8Z" fill="#aeb5bc" stroke="#aeb5bc" stroke-width="0.4"/><path d="M722.2 458.0L724.0 459.3L718.3 465.4L716.6 464.1Z" fill="#adb4bb" stroke="#adb4bb" stroke-width="0.4"/><path d="M724.0 459.3L725.7 460.5L720.0 466.7L718.3 465.4Z" fill="#acb3ba" stroke="#acb3ba" stroke-width="0.4"/><path d="M725.7 460.5L727.5 461.8L721.8 468.0L720.0 466.7Z" fill="#abb2b9" stroke="#abb2b9" stroke-width="0.4"/><path d="M727.5 461.8L729.3 463.0L723.5 469.3L721.8 468.0Z" fill="#a9b0b7" stroke="#a9b0b7" stroke-width="0.4"/><path d="M729.3 463.0L731.1 464.3L725.2 470.5L723.5 469.3Z" fill="#a8afb6" stroke="#a8afb6" stroke-width="0.4"/><path d="M731.1 464.3L732.8 465.5L726.9 471.8L725.2 470.5Z" fill="#a7aeb5" stroke="#a7aeb5" stroke-width="0.4"/><path d="M732.8 465.5L734.6 466.7L728.6 473.1L726.9 471.8Z" fill="#a5acb3" stroke="#a5acb3" stroke-width="0.4"/><path d="M659.7 421.5L661.4 422.8L657.3 427.3L655.6 425.9Z" fill="#a8aeb4" stroke="#a8aeb4" stroke-width="0.4"/><path d="M661.4 422.8L663.1 424.1L658.9 428.6L657.3 427.3Z" fill="#a8aeb4" stroke="#a8aeb4" stroke-width="0.4"/><path d="M663.1 424.1L664.8 425.3L660.6 429.9L658.9 428.6Z" fill="#a8aeb4" stroke="#a8aeb4" stroke-width="0.4"/><path d="M664.8 425.3L666.6 426.6L662.3 431.3L660.6 429.9Z" fill="#a9afb5" stroke="#a9afb5" stroke-width="0.4"/><path d="M666.6 426.6L668.3 427.9L663.9 432.6L662.3 431.3Z" fill="#a9afb5" stroke="#a9afb5" stroke-width="0.4"/><path d="M668.3 427.9L670.0 429.2L665.6 434.0L663.9 432.6Z" fill="#a9afb5" stroke="#a9afb5" stroke-width="0.4"/><path d="M670.0 429.2L671.7 430.5L667.3 435.3L665.6 434.0Z" fill="#aeb4ba" stroke="#aeb4ba" stroke-width="0.4"/><path d="M671.7 430.5L673.5 431.8L669.0 436.6L667.3 435.3Z" fill="#b2b8be" stroke="#b2b8be" stroke-width="0.4"/><path d="M673.5 431.8L675.2 433.1L670.6 438.0L669.0 436.6Z" fill="#b3b9bf" stroke="#b3b9bf" stroke-width="0.4"/><path d="M675.2 433.1L676.9 434.4L672.3 439.3L670.6 438.0Z" fill="#b4bac0" stroke="#b4bac0" stroke-width="0.4"/><path d="M676.9 434.4L678.6 435.7L674.0 440.7L672.3 439.3Z" fill="#b5bbc1" stroke="#b5bbc1" stroke-width="0.4"/><path d="M678.6 435.7L680.4 437.0L675.6 442.0L674.0 440.7Z" fill="#b6bcc2" stroke="#b6bcc2" stroke-width="0.4"/><path d="M680.4 437.0L682.1 438.3L677.3 443.3L675.6 442.0Z" fill="#b7bdc3" stroke="#b7bdc3" stroke-width="0.4"/><path d="M682.1 438.3L683.8 439.6L679.0 444.7L677.3 443.3Z" fill="#b8bec4" stroke="#b8bec4" stroke-width="0.4"/><path d="M683.8 439.6L685.5 440.8L680.7 446.0L679.0 444.7Z" fill="#bbc1c7" stroke="#bbc1c7" stroke-width="0.4"/><path d="M685.5 440.8L687.3 442.1L682.3 447.4L680.7 446.0Z" fill="#bfc5cb" stroke="#bfc5cb" stroke-width="0.4"/><path d="M687.3 442.1L689.0 443.4L684.0 448.7L682.3 447.4Z" fill="#c3c9cf" stroke="#c3c9cf" stroke-width="0.4"/><path d="M689.0 443.4L690.7 444.7L685.7 450.0L684.0 448.7Z" fill="#c7ced3" stroke="#c7ced3" stroke-width="0.4"/><path d="M690.7 444.7L692.4 446.0L687.4 451.4L685.7 450.0Z" fill="#cdd4d9" stroke="#cdd4d9" stroke-width="0.4"/><path d="M692.4 446.0L694.2 447.3L689.0 452.7L687.4 451.4Z" fill="#d5dbe0" stroke="#d5dbe0" stroke-width="0.4"/><path d="M694.2 447.3L695.9 448.6L690.7 454.1L689.0 452.7Z" fill="#dde3e7" stroke="#dde3e7" stroke-width="0.4"/><path d="M695.9 448.6L697.6 449.9L692.4 455.4L690.7 454.1Z" fill="#e3e9ed" stroke="#e3e9ed" stroke-width="0.4"/><path d="M697.6 449.9L699.3 451.2L694.0 456.7L692.4 455.4Z" fill="#e9eef2" stroke="#e9eef2" stroke-width="0.4"/><path d="M699.3 451.2L701.1 452.5L695.7 458.1L694.0 456.7Z" fill="#e8edf1" stroke="#e8edf1" stroke-width="0.4"/><path d="M701.1 452.5L702.8 453.8L697.4 459.4L695.7 458.1Z" fill="#e3e9ed" stroke="#e3e9ed" stroke-width="0.4"/><path d="M702.8 453.8L704.5 455.1L699.1 460.8L697.4 459.4Z" fill="#dce2e7" stroke="#dce2e7" stroke-width="0.4"/><path d="M704.5 455.1L706.2 456.3L700.7 462.1L699.1 460.8Z" fill="#d3dadf" stroke="#d3dadf" stroke-width="0.4"/><path d="M706.2 456.3L708.0 457.6L702.4 463.4L700.7 462.1Z" fill="#cbd2d8" stroke="#cbd2d8" stroke-width="0.4"/><path d="M708.0 457.6L709.7 458.9L704.1 464.8L702.4 463.4Z" fill="#c4cbd1" stroke="#c4cbd1" stroke-width="0.4"/><path d="M709.7 458.9L711.4 460.2L705.7 466.1L704.1 464.8Z" fill="#bec5cc" stroke="#bec5cc" stroke-width="0.4"/><path d="M711.4 460.2L713.1 461.5L707.4 467.5L705.7 466.1Z" fill="#b8bfc6" stroke="#b8bfc6" stroke-width="0.4"/><path d="M713.1 461.5L714.9 462.8L709.1 468.8L707.4 467.5Z" fill="#b3bac0" stroke="#b3bac0" stroke-width="0.4"/><path d="M714.9 462.8L716.6 464.1L710.8 470.1L709.1 468.8Z" fill="#afb6bd" stroke="#afb6bd" stroke-width="0.4"/><path d="M716.6 464.1L718.3 465.4L712.4 471.5L710.8 470.1Z" fill="#adb4bb" stroke="#adb4bb" stroke-width="0.4"/><path d="M718.3 465.4L720.0 466.7L714.1 472.8L712.4 471.5Z" fill="#acb3ba" stroke="#acb3ba" stroke-width="0.4"/><path d="M720.0 466.7L721.8 468.0L715.8 474.2L714.1 472.8Z" fill="#aab1b8" stroke="#aab1b8" stroke-width="0.4"/><path d="M721.8 468.0L723.5 469.3L717.5 475.5L715.8 474.2Z" fill="#a9b0b7" stroke="#a9b0b7" stroke-width="0.4"/><path d="M723.5 469.3L725.2 470.5L719.1 476.8L717.5 475.5Z" fill="#a7aeb5" stroke="#a7aeb5" stroke-width="0.4"/><path d="M725.2 470.5L726.9 471.8L720.8 478.2L719.1 476.8Z" fill="#a6adb4" stroke="#a6adb4" stroke-width="0.4"/><path d="M726.9 471.8L728.6 473.1L722.5 479.5L720.8 478.2Z" fill="#a4abb2" stroke="#a4abb2" stroke-width="0.4"/><path d="M655.6 425.9L657.3 427.3L653.1 431.6L651.5 430.2Z" fill="#a8aeb4" stroke="#a8aeb4" stroke-width="0.4"/><path d="M657.3 427.3L658.9 428.6L654.7 433.0L653.1 431.6Z" fill="#a8aeb4" stroke="#a8aeb4" stroke-width="0.4"/><path d="M658.9 428.6L660.6 429.9L656.4 434.4L654.7 433.0Z" fill="#a8aeb4" stroke="#a8aeb4" stroke-width="0.4"/><path d="M660.6 429.9L662.3 431.3L658.0 435.8L656.4 434.4Z" fill="#a9afb5" stroke="#a9afb5" stroke-width="0.4"/><path d="M662.3 431.3L663.9 432.6L659.6 437.2L658.0 435.8Z" fill="#a9afb5" stroke="#a9afb5" stroke-width="0.4"/><path d="M663.9 432.6L665.6 434.0L661.2 438.6L659.6 437.2Z" fill="#a9afb5" stroke="#a9afb5" stroke-width="0.4"/><path d="M665.6 434.0L667.3 435.3L662.8 440.0L661.2 438.6Z" fill="#afb5bb" stroke="#afb5bb" stroke-width="0.4"/><path d="M667.3 435.3L669.0 436.6L664.4 441.4L662.8 440.0Z" fill="#b3b9bf" stroke="#b3b9bf" stroke-width="0.4"/><path d="M669.0 436.6L670.6 438.0L666.0 442.8L664.4 441.4Z" fill="#b4bac0" stroke="#b4bac0" stroke-width="0.4"/><path d="M670.6 438.0L672.3 439.3L667.7 444.1L666.0 442.8Z" fill="#b5bbc1" stroke="#b5bbc1" stroke-width="0.4"/><path d="M672.3 439.3L674.0 440.7L669.3 445.5L667.7 444.1Z" fill="#b6bcc2" stroke="#b6bcc2" stroke-width="0.4"/><path d="M674.0 440.7L675.6 442.0L670.9 446.9L669.3 445.5Z" fill="#b7bdc3" stroke="#b7bdc3" stroke-width="0.4"/><path d="M675.6 442.0L677.3 443.3L672.5 448.3L670.9 446.9Z" fill="#b8bec4" stroke="#b8bec4" stroke-width="0.4"/><path d="M677.3 443.3L679.0 444.7L674.1 449.7L672.5 448.3Z" fill="#b9bfc5" stroke="#b9bfc5" stroke-width="0.4"/><path d="M679.0 444.7L680.7 446.0L675.7 451.1L674.1 449.7Z" fill="#bcc2c8" stroke="#bcc2c8" stroke-width="0.4"/><path d="M680.7 446.0L682.3 447.4L677.3 452.5L675.7 451.1Z" fill="#c0c7cc" stroke="#c0c7cc" stroke-width="0.4"/><path d="M682.3 447.4L684.0 448.7L678.9 453.9L677.3 452.5Z" fill="#c4cbd0" stroke="#c4cbd0" stroke-width="0.4"/><path d="M684.0 448.7L685.7 450.0L680.6 455.3L678.9 453.9Z" fill="#c9d0d5" stroke="#c9d0d5" stroke-width="0.4"/><path d="M685.7 450.0L687.4 451.4L682.2 456.7L680.6 455.3Z" fill="#cfd6da" stroke="#cfd6da" stroke-width="0.4"/><path d="M687.4 451.4L689.0 452.7L683.8 458.1L682.2 456.7Z" fill="#d7dde2" stroke="#d7dde2" stroke-width="0.4"/><path d="M689.0 452.7L690.7 454.1L685.4 459.5L683.8 458.1Z" fill="#dfe5e9" stroke="#dfe5e9" stroke-width="0.4"/><path d="M690.7 454.1L692.4 455.4L687.0 460.8L685.4 459.5Z" fill="#e6ecef" stroke="#e6ecef" stroke-width="0.4"/><path d="M692.4 455.4L694.0 456.7L688.6 462.2L687.0 460.8Z" fill="#ecf1f4" stroke="#ecf1f4" stroke-width="0.4"/><path d="M694.0 456.7L695.7 458.1L690.2 463.6L688.6 462.2Z" fill="#eaf0f3" stroke="#eaf0f3" stroke-width="0.4"/><path d="M695.7 458.1L697.4 459.4L691.9 465.0L690.2 463.6Z" fill="#e5ebef" stroke="#e5ebef" stroke-width="0.4"/><path d="M697.4 459.4L699.1 460.8L693.5 466.4L691.9 465.0Z" fill="#dee4e8" stroke="#dee4e8" stroke-width="0.4"/><path d="M699.1 460.8L700.7 462.1L695.1 467.8L693.5 466.4Z" fill="#d5dbe1" stroke="#d5dbe1" stroke-width="0.4"/><path d="M700.7 462.1L702.4 463.4L696.7 469.2L695.1 467.8Z" fill="#ccd3d9" stroke="#ccd3d9" stroke-width="0.4"/><path d="M702.4 463.4L704.1 464.8L698.3 470.6L696.7 469.2Z" fill="#c5ccd2" stroke="#c5ccd2" stroke-width="0.4"/><path d="M704.1 464.8L705.7 466.1L699.9 472.0L698.3 470.6Z" fill="#bfc6cc" stroke="#bfc6cc" stroke-width="0.4"/><path d="M705.7 466.1L707.4 467.5L701.5 473.4L699.9 472.0Z" fill="#b9c0c7" stroke="#b9c0c7" stroke-width="0.4"/><path d="M707.4 467.5L709.1 468.8L703.2 474.8L701.5 473.4Z" fill="#b3bac1" stroke="#b3bac1" stroke-width="0.4"/><path d="M709.1 468.8L710.8 470.1L704.8 476.1L703.2 474.8Z" fill="#afb6bd" stroke="#afb6bd" stroke-width="0.4"/><path d="M710.8 470.1L712.4 471.5L706.4 477.5L704.8 476.1Z" fill="#aeb5bc" stroke="#aeb5bc" stroke-width="0.4"/><path d="M712.4 471.5L714.1 472.8L708.0 478.9L706.4 477.5Z" fill="#acb3ba" stroke="#acb3ba" stroke-width="0.4"/><path d="M714.1 472.8L715.8 474.2L709.6 480.3L708.0 478.9Z" fill="#aab1b8" stroke="#aab1b8" stroke-width="0.4"/><path d="M715.8 474.2L717.5 475.5L711.2 481.7L709.6 480.3Z" fill="#a9b0b7" stroke="#a9b0b7" stroke-width="0.4"/><path d="M717.5 475.5L719.1 476.8L712.8 483.1L711.2 481.7Z" fill="#a7aeb5" stroke="#a7aeb5" stroke-width="0.4"/><path d="M719.1 476.8L720.8 478.2L714.4 484.5L712.8 483.1Z" fill="#a5acb3" stroke="#a5acb3" stroke-width="0.4"/><path d="M720.8 478.2L722.5 479.5L716.1 485.9L714.4 484.5Z" fill="#a4abb2" stroke="#a4abb2" stroke-width="0.4"/><path d="M651.5 430.2L653.1 431.6L649.0 435.9L647.5 434.4Z" fill="#a8aeb4" stroke="#a8aeb4" stroke-width="0.4"/><path d="M653.1 431.6L654.7 433.0L650.6 437.3L649.0 435.9Z" fill="#a8aeb4" stroke="#a8aeb4" stroke-width="0.4"/><path d="M654.7 433.0L656.4 434.4L652.1 438.8L650.6 437.3Z" fill="#a8aeb4" stroke="#a8aeb4" stroke-width="0.4"/><path d="M656.4 434.4L658.0 435.8L653.7 440.2L652.1 438.8Z" fill="#a9afb5" stroke="#a9afb5" stroke-width="0.4"/><path d="M658.0 435.8L659.6 437.2L655.2 441.7L653.7 440.2Z" fill="#a9afb5" stroke="#a9afb5" stroke-width="0.4"/><path d="M659.6 437.2L661.2 438.6L656.8 443.1L655.2 441.7Z" fill="#a9afb5" stroke="#a9afb5" stroke-width="0.4"/><path d="M661.2 438.6L662.8 440.0L658.3 444.6L656.8 443.1Z" fill="#afb5bb" stroke="#afb5bb" stroke-width="0.4"/><path d="M662.8 440.0L664.4 441.4L659.9 446.0L658.3 444.6Z" fill="#b3b9bf" stroke="#b3b9bf" stroke-width="0.4"/><path d="M664.4 441.4L666.0 442.8L661.4 447.4L659.9 446.0Z" fill="#b4bac0" stroke="#b4bac0" stroke-width="0.4"/><path d="M666.0 442.8L667.7 444.1L663.0 448.9L661.4 447.4Z" fill="#b5bbc1" stroke="#b5bbc1" stroke-width="0.4"/><path d="M667.7 444.1L669.3 445.5L664.5 450.3L663.0 448.9Z" fill="#b6bcc2" stroke="#b6bcc2" stroke-width="0.4"/><path d="M669.3 445.5L670.9 446.9L666.1 451.8L664.5 450.3Z" fill="#b7bdc3" stroke="#b7bdc3" stroke-width="0.4"/><path d="M670.9 446.9L672.5 448.3L667.6 453.2L666.1 451.8Z" fill="#b8bec4" stroke="#b8bec4" stroke-width="0.4"/><path d="M672.5 448.3L674.1 449.7L669.2 454.7L667.6 453.2Z" fill="#b9bfc5" stroke="#b9bfc5" stroke-width="0.4"/><path d="M674.1 449.7L675.7 451.1L670.7 456.1L669.2 454.7Z" fill="#bcc2c8" stroke="#bcc2c8" stroke-width="0.4"/><path d="M675.7 451.1L677.3 452.5L672.3 457.6L670.7 456.1Z" fill="#c0c7cc" stroke="#c0c7cc" stroke-width="0.4"/><path d="M677.3 452.5L678.9 453.9L673.8 459.0L672.3 457.6Z" fill="#c5cbd1" stroke="#c5cbd1" stroke-width="0.4"/><path d="M678.9 453.9L680.6 455.3L675.4 460.5L673.8 459.0Z" fill="#c9d0d5" stroke="#c9d0d5" stroke-width="0.4"/><path d="M680.6 455.3L682.2 456.7L676.9 461.9L675.4 460.5Z" fill="#cfd6db" stroke="#cfd6db" stroke-width="0.4"/><path d="M682.2 456.7L683.8 458.1L678.5 463.3L676.9 461.9Z" fill="#d7dee2" stroke="#d7dee2" stroke-width="0.4"/><path d="M683.8 458.1L685.4 459.5L680.0 464.8L678.5 463.3Z" fill="#e0e6ea" stroke="#e0e6ea" stroke-width="0.4"/><path d="M685.4 459.5L687.0 460.8L681.6 466.2L680.0 464.8Z" fill="#e6ecf0" stroke="#e6ecf0" stroke-width="0.4"/><path d="M687.0 460.8L688.6 462.2L683.1 467.7L681.6 466.2Z" fill="#ecf1f4" stroke="#ecf1f4" stroke-width="0.4"/><path d="M688.6 462.2L690.2 463.6L684.6 469.1L683.1 467.7Z" fill="#eaf0f3" stroke="#eaf0f3" stroke-width="0.4"/><path d="M690.2 463.6L691.9 465.0L686.2 470.6L684.6 469.1Z" fill="#e5ebef" stroke="#e5ebef" stroke-width="0.4"/><path d="M691.9 465.0L693.5 466.4L687.7 472.0L686.2 470.6Z" fill="#dee4e9" stroke="#dee4e9" stroke-width="0.4"/><path d="M693.5 466.4L695.1 467.8L689.3 473.5L687.7 472.0Z" fill="#d5dce1" stroke="#d5dce1" stroke-width="0.4"/><path d="M695.1 467.8L696.7 469.2L690.8 474.9L689.3 473.5Z" fill="#ccd3d9" stroke="#ccd3d9" stroke-width="0.4"/><path d="M696.7 469.2L698.3 470.6L692.4 476.4L690.8 474.9Z" fill="#c5ccd2" stroke="#c5ccd2" stroke-width="0.4"/><path d="M698.3 470.6L699.9 472.0L693.9 477.8L692.4 476.4Z" fill="#bfc6cc" stroke="#bfc6cc" stroke-width="0.4"/><path d="M699.9 472.0L701.5 473.4L695.5 479.3L693.9 477.8Z" fill="#b9c0c7" stroke="#b9c0c7" stroke-width="0.4"/><path d="M701.5 473.4L703.2 474.8L697.0 480.7L695.5 479.3Z" fill="#b3bac1" stroke="#b3bac1" stroke-width="0.4"/><path d="M703.2 474.8L704.8 476.1L698.6 482.1L697.0 480.7Z" fill="#afb6bd" stroke="#afb6bd" stroke-width="0.4"/><path d="M704.8 476.1L706.4 477.5L700.1 483.6L698.6 482.1Z" fill="#aeb5bc" stroke="#aeb5bc" stroke-width="0.4"/><path d="M706.4 477.5L708.0 478.9L701.7 485.0L700.1 483.6Z" fill="#acb3ba" stroke="#acb3ba" stroke-width="0.4"/><path d="M708.0 478.9L709.6 480.3L703.2 486.5L701.7 485.0Z" fill="#aab1b8" stroke="#aab1b8" stroke-width="0.4"/><path d="M709.6 480.3L711.2 481.7L704.8 487.9L703.2 486.5Z" fill="#a9b0b7" stroke="#a9b0b7" stroke-width="0.4"/><path d="M711.2 481.7L712.8 483.1L706.3 489.4L704.8 487.9Z" fill="#a7aeb5" stroke="#a7aeb5" stroke-width="0.4"/><path d="M712.8 483.1L714.4 484.5L707.9 490.8L706.3 489.4Z" fill="#a5acb3" stroke="#a5acb3" stroke-width="0.4"/><path d="M714.4 484.5L716.1 485.9L709.4 492.3L707.9 490.8Z" fill="#a4abb2" stroke="#a4abb2" stroke-width="0.4"/><path d="M647.5 434.4L649.0 435.9L645.0 440.0L643.5 438.5Z" fill="#a8aeb4" stroke="#a8aeb4" stroke-width="0.4"/><path d="M649.0 435.9L650.6 437.3L646.4 441.5L645.0 440.0Z" fill="#a8aeb4" stroke="#a8aeb4" stroke-width="0.4"/><path d="M650.6 437.3L652.1 438.8L647.9 443.0L646.4 441.5Z" fill="#a8aeb4" stroke="#a8aeb4" stroke-width="0.4"/><path d="M652.1 438.8L653.7 440.2L649.4 444.5L647.9 443.0Z" fill="#a9afb5" stroke="#a9afb5" stroke-width="0.4"/><path d="M653.7 440.2L655.2 441.7L650.9 446.0L649.4 444.5Z" fill="#a9afb5" stroke="#a9afb5" stroke-width="0.4"/><path d="M655.2 441.7L656.8 443.1L652.4 447.5L650.9 446.0Z" fill="#a9afb5" stroke="#a9afb5" stroke-width="0.4"/><path d="M656.8 443.1L658.3 444.6L653.8 449.0L652.4 447.5Z" fill="#afb5bb" stroke="#afb5bb" stroke-width="0.4"/><path d="M658.3 444.6L659.9 446.0L655.3 450.5L653.8 449.0Z" fill="#b3b9bf" stroke="#b3b9bf" stroke-width="0.4"/><path d="M659.9 446.0L661.4 447.4L656.8 452.0L655.3 450.5Z" fill="#b4bac0" stroke="#b4bac0" stroke-width="0.4"/><path d="M661.4 447.4L663.0 448.9L658.3 453.5L656.8 452.0Z" fill="#b5bbc1" stroke="#b5bbc1" stroke-width="0.4"/><path d="M663.0 448.9L664.5 450.3L659.7 455.0L658.3 453.5Z" fill="#b6bcc2" stroke="#b6bcc2" stroke-width="0.4"/><path d="M664.5 450.3L666.1 451.8L661.2 456.5L659.7 455.0Z" fill="#b7bdc3" stroke="#b7bdc3" stroke-width="0.4"/><path d="M666.1 451.8L667.6 453.2L662.7 458.0L661.2 456.5Z" fill="#b8bec4" stroke="#b8bec4" stroke-width="0.4"/><path d="M667.6 453.2L669.2 454.7L664.2 459.5L662.7 458.0Z" fill="#b9bfc5" stroke="#b9bfc5" stroke-width="0.4"/><path d="M669.2 454.7L670.7 456.1L665.6 461.1L664.2 459.5Z" fill="#bcc2c8" stroke="#bcc2c8" stroke-width="0.4"/><path d="M670.7 456.1L672.3 457.6L667.1 462.6L665.6 461.1Z" fill="#c0c7cc" stroke="#c0c7cc" stroke-width="0.4"/><path d="M672.3 457.6L673.8 459.0L668.6 464.1L667.1 462.6Z" fill="#c5cbd1" stroke="#c5cbd1" stroke-width="0.4"/><path d="M673.8 459.0L675.4 460.5L670.1 465.6L668.6 464.1Z" fill="#c9d0d5" stroke="#c9d0d5" stroke-width="0.4"/><path d="M675.4 460.5L676.9 461.9L671.5 467.1L670.1 465.6Z" fill="#cfd6db" stroke="#cfd6db" stroke-width="0.4"/><path d="M676.9 461.9L678.5 463.3L673.0 468.6L671.5 467.1Z" fill="#d7dee2" stroke="#d7dee2" stroke-width="0.4"/><path d="M678.5 463.3L680.0 464.8L674.5 470.1L673.0 468.6Z" fill="#e0e6ea" stroke="#e0e6ea" stroke-width="0.4"/><path d="M680.0 464.8L681.6 466.2L676.0 471.6L674.5 470.1Z" fill="#e6ecf0" stroke="#e6ecf0" stroke-width="0.4"/><path d="M681.6 466.2L683.1 467.7L677.5 473.1L676.0 471.6Z" fill="#ecf1f4" stroke="#ecf1f4" stroke-width="0.4"/><path d="M683.1 467.7L684.6 469.1L678.9 474.6L677.5 473.1Z" fill="#eaf0f3" stroke="#eaf0f3" stroke-width="0.4"/><path d="M684.6 469.1L686.2 470.6L680.4 476.1L678.9 474.6Z" fill="#e5ebef" stroke="#e5ebef" stroke-width="0.4"/><path d="M686.2 470.6L687.7 472.0L681.9 477.6L680.4 476.1Z" fill="#dee4e9" stroke="#dee4e9" stroke-width="0.4"/><path d="M687.7 472.0L689.3 473.5L683.4 479.1L681.9 477.6Z" fill="#d5dce1" stroke="#d5dce1" stroke-width="0.4"/><path d="M689.3 473.5L690.8 474.9L684.8 480.6L683.4 479.1Z" fill="#ccd3d9" stroke="#ccd3d9" stroke-width="0.4"/><path d="M690.8 474.9L692.4 476.4L686.3 482.1L684.8 480.6Z" fill="#c5ccd2" stroke="#c5ccd2" stroke-width="0.4"/><path d="M692.4 476.4L693.9 477.8L687.8 483.6L686.3 482.1Z" fill="#bfc6cc" stroke="#bfc6cc" stroke-width="0.4"/><path d="M693.9 477.8L695.5 479.3L689.3 485.1L687.8 483.6Z" fill="#b9c0c7" stroke="#b9c0c7" stroke-width="0.4"/><path d="M695.5 479.3L697.0 480.7L690.7 486.6L689.3 485.1Z" fill="#b3bac1" stroke="#b3bac1" stroke-width="0.4"/><path d="M697.0 480.7L698.6 482.1L692.2 488.1L690.7 486.6Z" fill="#afb6bd" stroke="#afb6bd" stroke-width="0.4"/><path d="M698.6 482.1L700.1 483.6L693.7 489.6L692.2 488.1Z" fill="#aeb5bc" stroke="#aeb5bc" stroke-width="0.4"/><path d="M700.1 483.6L701.7 485.0L695.2 491.1L693.7 489.6Z" fill="#acb3ba" stroke="#acb3ba" stroke-width="0.4"/><path d="M701.7 485.0L703.2 486.5L696.7 492.6L695.2 491.1Z" fill="#aab1b8" stroke="#aab1b8" stroke-width="0.4"/><path d="M703.2 486.5L704.8 487.9L698.1 494.1L696.7 492.6Z" fill="#a9b0b7" stroke="#a9b0b7" stroke-width="0.4"/><path d="M704.8 487.9L706.3 489.4L699.6 495.6L698.1 494.1Z" fill="#a7aeb5" stroke="#a7aeb5" stroke-width="0.4"/><path d="M706.3 489.4L707.9 490.8L701.1 497.1L699.6 495.6Z" fill="#a5acb3" stroke="#a5acb3" stroke-width="0.4"/><path d="M707.9 490.8L709.4 492.3L702.6 498.6L701.1 497.1Z" fill="#a4abb2" stroke="#a4abb2" stroke-width="0.4"/><path d="M643.5 438.5L645.0 440.0L641.0 444.0L639.6 442.4Z" fill="#a8aeb4" stroke="#a8aeb4" stroke-width="0.4"/><path d="M645.0 440.0L646.4 441.5L642.4 445.6L641.0 444.0Z" fill="#a8aeb4" stroke="#a8aeb4" stroke-width="0.4"/><path d="M646.4 441.5L647.9 443.0L643.8 447.1L642.4 445.6Z" fill="#a8aeb4" stroke="#a8aeb4" stroke-width="0.4"/><path d="M647.9 443.0L649.4 444.5L645.1 448.7L643.8 447.1Z" fill="#a9afb5" stroke="#a9afb5" stroke-width="0.4"/><path d="M649.4 444.5L650.9 446.0L646.5 450.3L645.1 448.7Z" fill="#a9afb5" stroke="#a9afb5" stroke-width="0.4"/><path d="M650.9 446.0L652.4 447.5L647.9 451.8L646.5 450.3Z" fill="#a9afb5" stroke="#a9afb5" stroke-width="0.4"/><path d="M652.4 447.5L653.8 449.0L649.3 453.4L647.9 451.8Z" fill="#afb5bb" stroke="#afb5bb" stroke-width="0.4"/><path d="M653.8 449.0L655.3 450.5L650.7 454.9L649.3 453.4Z" fill="#b3b9bf" stroke="#b3b9bf" stroke-width="0.4"/><path d="M655.3 450.5L656.8 452.0L652.1 456.5L650.7 454.9Z" fill="#b4bac0" stroke="#b4bac0" stroke-width="0.4"/><path d="M656.8 452.0L658.3 453.5L653.5 458.1L652.1 456.5Z" fill="#b5bbc1" stroke="#b5bbc1" stroke-width="0.4"/><path d="M658.3 453.5L659.7 455.0L654.9 459.6L653.5 458.1Z" fill="#b6bcc2" stroke="#b6bcc2" stroke-width="0.4"/><path d="M659.7 455.0L661.2 456.5L656.3 461.2L654.9 459.6Z" fill="#b7bdc3" stroke="#b7bdc3" stroke-width="0.4"/><path d="M661.2 456.5L662.7 458.0L657.7 462.8L656.3 461.2Z" fill="#b8bec4" stroke="#b8bec4" stroke-width="0.4"/><path d="M662.7 458.0L664.2 459.5L659.1 464.3L657.7 462.8Z" fill="#b9bfc5" stroke="#b9bfc5" stroke-width="0.4"/><path d="M664.2 459.5L665.6 461.1L660.5 465.9L659.1 464.3Z" fill="#bcc2c8" stroke="#bcc2c8" stroke-width="0.4"/><path d="M665.6 461.1L667.1 462.6L661.9 467.5L660.5 465.9Z" fill="#c0c7cc" stroke="#c0c7cc" stroke-width="0.4"/><path d="M667.1 462.6L668.6 464.1L663.3 469.0L661.9 467.5Z" fill="#c5cbd1" stroke="#c5cbd1" stroke-width="0.4"/><path d="M668.6 464.1L670.1 465.6L664.7 470.6L663.3 469.0Z" fill="#c9d0d5" stroke="#c9d0d5" stroke-width="0.4"/><path d="M670.1 465.6L671.5 467.1L666.1 472.2L664.7 470.6Z" fill="#cfd6db" stroke="#cfd6db" stroke-width="0.4"/><path d="M671.5 467.1L673.0 468.6L667.5 473.7L666.1 472.2Z" fill="#d7dee2" stroke="#d7dee2" stroke-width="0.4"/><path d="M673.0 468.6L674.5 470.1L668.9 475.3L667.5 473.7Z" fill="#e0e6ea" stroke="#e0e6ea" stroke-width="0.4"/><path d="M674.5 470.1L676.0 471.6L670.3 476.9L668.9 475.3Z" fill="#e6ecf0" stroke="#e6ecf0" stroke-width="0.4"/><path d="M676.0 471.6L677.5 473.1L671.7 478.4L670.3 476.9Z" fill="#ecf1f4" stroke="#ecf1f4" stroke-width="0.4"/><path d="M677.5 473.1L678.9 474.6L673.1 480.0L671.7 478.4Z" fill="#eaf0f3" stroke="#eaf0f3" stroke-width="0.4"/><path d="M678.9 474.6L680.4 476.1L674.5 481.5L673.1 480.0Z" fill="#e5ebef" stroke="#e5ebef" stroke-width="0.4"/><path d="M680.4 476.1L681.9 477.6L675.9 483.1L674.5 481.5Z" fill="#dee4e9" stroke="#dee4e9" stroke-width="0.4"/><path d="M681.9 477.6L683.4 479.1L677.3 484.7L675.9 483.1Z" fill="#d5dce1" stroke="#d5dce1" stroke-width="0.4"/><path d="M683.4 479.1L684.8 480.6L678.7 486.2L677.3 484.7Z" fill="#ccd3d9" stroke="#ccd3d9" stroke-width="0.4"/><path d="M684.8 480.6L686.3 482.1L680.1 487.8L678.7 486.2Z" fill="#c5ccd2" stroke="#c5ccd2" stroke-width="0.4"/><path d="M686.3 482.1L687.8 483.6L681.5 489.4L680.1 487.8Z" fill="#bfc6cc" stroke="#bfc6cc" stroke-width="0.4"/><path d="M687.8 483.6L689.3 485.1L682.9 490.9L681.5 489.4Z" fill="#b9c0c7" stroke="#b9c0c7" stroke-width="0.4"/><path d="M689.3 485.1L690.7 486.6L684.3 492.5L682.9 490.9Z" fill="#b3bac1" stroke="#b3bac1" stroke-width="0.4"/><path d="M690.7 486.6L692.2 488.1L685.7 494.1L684.3 492.5Z" fill="#afb6bd" stroke="#afb6bd" stroke-width="0.4"/><path d="M692.2 488.1L693.7 489.6L687.1 495.6L685.7 494.1Z" fill="#aeb5bc" stroke="#aeb5bc" stroke-width="0.4"/><path d="M693.7 489.6L695.2 491.1L688.5 497.2L687.1 495.6Z" fill="#acb3ba" stroke="#acb3ba" stroke-width="0.4"/><path d="M695.2 491.1L696.7 492.6L689.9 498.8L688.5 497.2Z" fill="#aab1b8" stroke="#aab1b8" stroke-width="0.4"/><path d="M696.7 492.6L698.1 494.1L691.3 500.3L689.9 498.8Z" fill="#a9b0b7" stroke="#a9b0b7" stroke-width="0.4"/><path d="M698.1 494.1L699.6 495.6L692.7 501.9L691.3 500.3Z" fill="#a7aeb5" stroke="#a7aeb5" stroke-width="0.4"/><path d="M699.6 495.6L701.1 497.1L694.1 503.5L692.7 501.9Z" fill="#a5acb3" stroke="#a5acb3" stroke-width="0.4"/><path d="M701.1 497.1L702.6 498.6L695.5 505.0L694.1 503.5Z" fill="#a4abb2" stroke="#a4abb2" stroke-width="0.4"/><path d="M639.6 442.4L641.0 444.0L637.0 447.9L635.7 446.2Z" fill="#a8aeb4" stroke="#a8aeb4" stroke-width="0.4"/><path d="M641.0 444.0L642.4 445.6L638.3 449.5L637.0 447.9Z" fill="#a8aeb4" stroke="#a8aeb4" stroke-width="0.4"/><path d="M642.4 445.6L643.8 447.1L639.6 451.1L638.3 449.5Z" fill="#a8aeb4" stroke="#a8aeb4" stroke-width="0.4"/><path d="M643.8 447.1L645.1 448.7L640.9 452.7L639.6 451.1Z" fill="#a9afb5" stroke="#a9afb5" stroke-width="0.4"/><path d="M645.1 448.7L646.5 450.3L642.3 454.4L640.9 452.7Z" fill="#a9afb5" stroke="#a9afb5" stroke-width="0.4"/><path d="M646.5 450.3L647.9 451.8L643.6 456.0L642.3 454.4Z" fill="#a9afb5" stroke="#a9afb5" stroke-width="0.4"/><path d="M647.9 451.8L649.3 453.4L644.9 457.6L643.6 456.0Z" fill="#afb5bb" stroke="#afb5bb" stroke-width="0.4"/><path d="M649.3 453.4L650.7 454.9L646.2 459.3L644.9 457.6Z" fill="#b3b9bf" stroke="#b3b9bf" stroke-width="0.4"/><path d="M650.7 454.9L652.1 456.5L647.5 460.9L646.2 459.3Z" fill="#b4bac0" stroke="#b4bac0" stroke-width="0.4"/><path d="M652.1 456.5L653.5 458.1L648.8 462.5L647.5 460.9Z" fill="#b5bbc1" stroke="#b5bbc1" stroke-width="0.4"/><path d="M653.5 458.1L654.9 459.6L650.1 464.2L648.8 462.5Z" fill="#b6bcc2" stroke="#b6bcc2" stroke-width="0.4"/><path d="M654.9 459.6L656.3 461.2L651.4 465.8L650.1 464.2Z" fill="#b7bdc3" stroke="#b7bdc3" stroke-width="0.4"/><path d="M656.3 461.2L657.7 462.8L652.7 467.4L651.4 465.8Z" fill="#b8bec4" stroke="#b8bec4" stroke-width="0.4"/><path d="M657.7 462.8L659.1 464.3L654.0 469.0L652.7 467.4Z" fill="#b9bfc5" stroke="#b9bfc5" stroke-width="0.4"/><path d="M659.1 464.3L660.5 465.9L655.4 470.7L654.0 469.0Z" fill="#bcc2c8" stroke="#bcc2c8" stroke-width="0.4"/><path d="M660.5 465.9L661.9 467.5L656.7 472.3L655.4 470.7Z" fill="#c0c7cc" stroke="#c0c7cc" stroke-width="0.4"/><path d="M661.9 467.5L663.3 469.0L658.0 473.9L656.7 472.3Z" fill="#c5cbd1" stroke="#c5cbd1" stroke-width="0.4"/><path d="M663.3 469.0L664.7 470.6L659.3 475.6L658.0 473.9Z" fill="#c9d0d5" stroke="#c9d0d5" stroke-width="0.4"/><path d="M664.7 470.6L666.1 472.2L660.6 477.2L659.3 475.6Z" fill="#cfd6db" stroke="#cfd6db" stroke-width="0.4"/><path d="M666.1 472.2L667.5 473.7L661.9 478.8L660.6 477.2Z" fill="#d7dee2" stroke="#d7dee2" stroke-width="0.4"/><path d="M667.5 473.7L668.9 475.3L663.2 480.4L661.9 478.8Z" fill="#e0e6ea" stroke="#e0e6ea" stroke-width="0.4"/><path d="M668.9 475.3L670.3 476.9L664.5 482.1L663.2 480.4Z" fill="#e6ecf0" stroke="#e6ecf0" stroke-width="0.4"/><path d="M670.3 476.9L671.7 478.4L665.8 483.7L664.5 482.1Z" fill="#ecf1f4" stroke="#ecf1f4" stroke-width="0.4"/><path d="M671.7 478.4L673.1 480.0L667.2 485.3L665.8 483.7Z" fill="#eaf0f3" stroke="#eaf0f3" stroke-width="0.4"/><path d="M673.1 480.0L674.5 481.5L668.5 487.0L667.2 485.3Z" fill="#e5ebef" stroke="#e5ebef" stroke-width="0.4"/><path d="M674.5 481.5L675.9 483.1L669.8 488.6L668.5 487.0Z" fill="#dee4e9" stroke="#dee4e9" stroke-width="0.4"/><path d="M675.9 483.1L677.3 484.7L671.1 490.2L669.8 488.6Z" fill="#d5dce1" stroke="#d5dce1" stroke-width="0.4"/><path d="M677.3 484.7L678.7 486.2L672.4 491.9L671.1 490.2Z" fill="#ccd3d9" stroke="#ccd3d9" stroke-width="0.4"/><path d="M678.7 486.2L680.1 487.8L673.7 493.5L672.4 491.9Z" fill="#c5ccd2" stroke="#c5ccd2" stroke-width="0.4"/><path d="M680.1 487.8L681.5 489.4L675.0 495.1L673.7 493.5Z" fill="#bfc6cc" stroke="#bfc6cc" stroke-width="0.4"/><path d="M681.5 489.4L682.9 490.9L676.3 496.7L675.0 495.1Z" fill="#b9c0c7" stroke="#b9c0c7" stroke-width="0.4"/><path d="M682.9 490.9L684.3 492.5L677.6 498.4L676.3 496.7Z" fill="#b3bac1" stroke="#b3bac1" stroke-width="0.4"/><path d="M684.3 492.5L685.7 494.1L679.0 500.0L677.6 498.4Z" fill="#afb6bd" stroke="#afb6bd" stroke-width="0.4"/><path d="M685.7 494.1L687.1 495.6L680.3 501.6L679.0 500.0Z" fill="#aeb5bc" stroke="#aeb5bc" stroke-width="0.4"/><path d="M687.1 495.6L688.5 497.2L681.6 503.3L680.3 501.6Z" fill="#acb3ba" stroke="#acb3ba" stroke-width="0.4"/><path d="M688.5 497.2L689.9 498.8L682.9 504.9L681.6 503.3Z" fill="#aab1b8" stroke="#aab1b8" stroke-width="0.4"/><path d="M689.9 498.8L691.3 500.3L684.2 506.5L682.9 504.9Z" fill="#a9b0b7" stroke="#a9b0b7" stroke-width="0.4"/><path d="M691.3 500.3L692.7 501.9L685.5 508.1L684.2 506.5Z" fill="#a7aeb5" stroke="#a7aeb5" stroke-width="0.4"/><path d="M692.7 501.9L694.1 503.5L686.8 509.8L685.5 508.1Z" fill="#a5acb3" stroke="#a5acb3" stroke-width="0.4"/><path d="M694.1 503.5L695.5 505.0L688.1 511.4L686.8 509.8Z" fill="#a4abb2" stroke="#a4abb2" stroke-width="0.4"/><path d="M635.7 446.2L637.0 447.9L633.1 451.6L631.9 449.9Z" fill="#a8aeb4" stroke="#a8aeb4" stroke-width="0.4"/><path d="M637.0 447.9L638.3 449.5L634.4 453.3L633.1 451.6Z" fill="#a8aeb4" stroke="#a8aeb4" stroke-width="0.4"/><path d="M638.3 449.5L639.6 451.1L635.6 455.0L634.4 453.3Z" fill="#a8aeb4" stroke="#a8aeb4" stroke-width="0.4"/><path d="M639.6 451.1L640.9 452.7L636.8 456.7L635.6 455.0Z" fill="#a9afb5" stroke="#a9afb5" stroke-width="0.4"/><path d="M640.9 452.7L642.3 454.4L638.0 458.4L636.8 456.7Z" fill="#a9afb5" stroke="#a9afb5" stroke-width="0.4"/><path d="M642.3 454.4L643.6 456.0L639.2 460.1L638.0 458.4Z" fill="#a9afb5" stroke="#a9afb5" stroke-width="0.4"/><path d="M643.6 456.0L644.9 457.6L640.4 461.8L639.2 460.1Z" fill="#afb5bb" stroke="#afb5bb" stroke-width="0.4"/><path d="M644.9 457.6L646.2 459.3L641.7 463.5L640.4 461.8Z" fill="#b3b9bf" stroke="#b3b9bf" stroke-width="0.4"/><path d="M646.2 459.3L647.5 460.9L642.9 465.2L641.7 463.5Z" fill="#b4bac0" stroke="#b4bac0" stroke-width="0.4"/><path d="M647.5 460.9L648.8 462.5L644.1 466.9L642.9 465.2Z" fill="#b5bbc1" stroke="#b5bbc1" stroke-width="0.4"/><path d="M648.8 462.5L650.1 464.2L645.3 468.6L644.1 466.9Z" fill="#b6bcc2" stroke="#b6bcc2" stroke-width="0.4"/><path d="M650.1 464.2L651.4 465.8L646.5 470.3L645.3 468.6Z" fill="#b7bdc3" stroke="#b7bdc3" stroke-width="0.4"/><path d="M651.4 465.8L652.7 467.4L647.7 472.0L646.5 470.3Z" fill="#b8bec4" stroke="#b8bec4" stroke-width="0.4"/><path d="M652.7 467.4L654.0 469.0L649.0 473.7L647.7 472.0Z" fill="#b9bfc5" stroke="#b9bfc5" stroke-width="0.4"/><path d="M654.0 469.0L655.4 470.7L650.2 475.3L649.0 473.7Z" fill="#bcc2c8" stroke="#bcc2c8" stroke-width="0.4"/><path d="M655.4 470.7L656.7 472.3L651.4 477.0L650.2 475.3Z" fill="#c0c7cc" stroke="#c0c7cc" stroke-width="0.4"/><path d="M656.7 472.3L658.0 473.9L652.6 478.7L651.4 477.0Z" fill="#c5cbd1" stroke="#c5cbd1" stroke-width="0.4"/><path d="M658.0 473.9L659.3 475.6L653.8 480.4L652.6 478.7Z" fill="#c9d0d5" stroke="#c9d0d5" stroke-width="0.4"/><path d="M659.3 475.6L660.6 477.2L655.0 482.1L653.8 480.4Z" fill="#cfd6db" stroke="#cfd6db" stroke-width="0.4"/><path d="M660.6 477.2L661.9 478.8L656.2 483.8L655.0 482.1Z" fill="#d7dee2" stroke="#d7dee2" stroke-width="0.4"/><path d="M661.9 478.8L663.2 480.4L657.5 485.5L656.2 483.8Z" fill="#e0e6ea" stroke="#e0e6ea" stroke-width="0.4"/><path d="M663.2 480.4L664.5 482.1L658.7 487.2L657.5 485.5Z" fill="#e6ecf0" stroke="#e6ecf0" stroke-width="0.4"/><path d="M664.5 482.1L665.8 483.7L659.9 488.9L658.7 487.2Z" fill="#ecf1f4" stroke="#ecf1f4" stroke-width="0.4"/><path d="M665.8 483.7L667.2 485.3L661.1 490.6L659.9 488.9Z" fill="#eaf0f3" stroke="#eaf0f3" stroke-width="0.4"/><path d="M667.2 485.3L668.5 487.0L662.3 492.3L661.1 490.6Z" fill="#e5ebef" stroke="#e5ebef" stroke-width="0.4"/><path d="M668.5 487.0L669.8 488.6L663.5 494.0L662.3 492.3Z" fill="#dee4e9" stroke="#dee4e9" stroke-width="0.4"/><path d="M669.8 488.6L671.1 490.2L664.8 495.7L663.5 494.0Z" fill="#d5dce1" stroke="#d5dce1" stroke-width="0.4"/><path d="M671.1 490.2L672.4 491.9L666.0 497.4L664.8 495.7Z" fill="#ccd3d9" stroke="#ccd3d9" stroke-width="0.4"/><path d="M672.4 491.9L673.7 493.5L667.2 499.1L666.0 497.4Z" fill="#c5ccd2" stroke="#c5ccd2" stroke-width="0.4"/><path d="M673.7 493.5L675.0 495.1L668.4 500.8L667.2 499.1Z" fill="#bfc6cc" stroke="#bfc6cc" stroke-width="0.4"/><path d="M675.0 495.1L676.3 496.7L669.6 502.5L668.4 500.8Z" fill="#b9c0c7" stroke="#b9c0c7" stroke-width="0.4"/><path d="M676.3 496.7L677.6 498.4L670.8 504.2L669.6 502.5Z" fill="#b3bac1" stroke="#b3bac1" stroke-width="0.4"/><path d="M677.6 498.4L679.0 500.0L672.1 505.9L670.8 504.2Z" fill="#afb6bd" stroke="#afb6bd" stroke-width="0.4"/><path d="M679.0 500.0L680.3 501.6L673.3 507.6L672.1 505.9Z" fill="#aeb5bc" stroke="#aeb5bc" stroke-width="0.4"/><path d="M680.3 501.6L681.6 503.3L674.5 509.3L673.3 507.6Z" fill="#acb3ba" stroke="#acb3ba" stroke-width="0.4"/><path d="M681.6 503.3L682.9 504.9L675.7 511.0L674.5 509.3Z" fill="#aab1b8" stroke="#aab1b8" stroke-width="0.4"/><path d="M682.9 504.9L684.2 506.5L676.9 512.7L675.7 511.0Z" fill="#a9b0b7" stroke="#a9b0b7" stroke-width="0.4"/><path d="M684.2 506.5L685.5 508.1L678.1 514.4L676.9 512.7Z" fill="#a7aeb5" stroke="#a7aeb5" stroke-width="0.4"/><path d="M685.5 508.1L686.8 509.8L679.4 516.1L678.1 514.4Z" fill="#a5acb3" stroke="#a5acb3" stroke-width="0.4"/><path d="M686.8 509.8L688.1 511.4L680.6 517.8L679.4 516.1Z" fill="#a4abb2" stroke="#a4abb2" stroke-width="0.4"/><path d="M631.9 449.9L633.1 451.6L629.4 455.2L628.3 453.4Z" fill="#a8aeb4" stroke="#a8aeb4" stroke-width="0.4"/><path d="M633.1 451.6L634.4 453.3L630.5 456.9L629.4 455.2Z" fill="#a8aeb4" stroke="#a8aeb4" stroke-width="0.4"/><path d="M634.4 453.3L635.6 455.0L631.6 458.7L630.5 456.9Z" fill="#a8aeb4" stroke="#a8aeb4" stroke-width="0.4"/><path d="M635.6 455.0L636.8 456.7L632.7 460.5L631.6 458.7Z" fill="#a9afb5" stroke="#a9afb5" stroke-width="0.4"/><path d="M636.8 456.7L638.0 458.4L633.8 462.2L632.7 460.5Z" fill="#a9afb5" stroke="#a9afb5" stroke-width="0.4"/><path d="M638.0 458.4L639.2 460.1L634.9 464.0L633.8 462.2Z" fill="#a9afb5" stroke="#a9afb5" stroke-width="0.4"/><path d="M639.2 460.1L640.4 461.8L636.0 465.8L634.9 464.0Z" fill="#afb5bb" stroke="#afb5bb" stroke-width="0.4"/><path d="M640.4 461.8L641.7 463.5L637.2 467.6L636.0 465.8Z" fill="#b3b9bf" stroke="#b3b9bf" stroke-width="0.4"/><path d="M641.7 463.5L642.9 465.2L638.3 469.3L637.2 467.6Z" fill="#b4bac0" stroke="#b4bac0" stroke-width="0.4"/><path d="M642.9 465.2L644.1 466.9L639.4 471.1L638.3 469.3Z" fill="#b5bbc1" stroke="#b5bbc1" stroke-width="0.4"/><path d="M644.1 466.9L645.3 468.6L640.5 472.9L639.4 471.1Z" fill="#b6bcc2" stroke="#b6bcc2" stroke-width="0.4"/><path d="M645.3 468.6L646.5 470.3L641.6 474.6L640.5 472.9Z" fill="#b7bdc3" stroke="#b7bdc3" stroke-width="0.4"/><path d="M646.5 470.3L647.7 472.0L642.7 476.4L641.6 474.6Z" fill="#b8bec4" stroke="#b8bec4" stroke-width="0.4"/><path d="M647.7 472.0L649.0 473.7L643.8 478.2L642.7 476.4Z" fill="#b9bfc5" stroke="#b9bfc5" stroke-width="0.4"/><path d="M649.0 473.7L650.2 475.3L645.0 479.9L643.8 478.2Z" fill="#bcc2c8" stroke="#bcc2c8" stroke-width="0.4"/><path d="M650.2 475.3L651.4 477.0L646.1 481.7L645.0 479.9Z" fill="#c0c7cc" stroke="#c0c7cc" stroke-width="0.4"/><path d="M651.4 477.0L652.6 478.7L647.2 483.5L646.1 481.7Z" fill="#c5cbd1" stroke="#c5cbd1" stroke-width="0.4"/><path d="M652.6 478.7L653.8 480.4L648.3 485.3L647.2 483.5Z" fill="#c9d0d5" stroke="#c9d0d5" stroke-width="0.4"/><path d="M653.8 480.4L655.0 482.1L649.4 487.0L648.3 485.3Z" fill="#cfd6db" stroke="#cfd6db" stroke-width="0.4"/><path d="M655.0 482.1L656.2 483.8L650.5 488.8L649.4 487.0Z" fill="#d7dee2" stroke="#d7dee2" stroke-width="0.4"/><path d="M656.2 483.8L657.5 485.5L651.6 490.6L650.5 488.8Z" fill="#e0e6ea" stroke="#e0e6ea" stroke-width="0.4"/><path d="M657.5 485.5L658.7 487.2L652.7 492.3L651.6 490.6Z" fill="#e6ecf0" stroke="#e6ecf0" stroke-width="0.4"/><path d="M658.7 487.2L659.9 488.9L653.9 494.1L652.7 492.3Z" fill="#ecf1f4" stroke="#ecf1f4" stroke-width="0.4"/><path d="M659.9 488.9L661.1 490.6L655.0 495.9L653.9 494.1Z" fill="#eaf0f3" stroke="#eaf0f3" stroke-width="0.4"/><path d="M661.1 490.6L662.3 492.3L656.1 497.6L655.0 495.9Z" fill="#e5ebef" stroke="#e5ebef" stroke-width="0.4"/><path d="M662.3 492.3L663.5 494.0L657.2 499.4L656.1 497.6Z" fill="#dee4e9" stroke="#dee4e9" stroke-width="0.4"/><path d="M663.5 494.0L664.8 495.7L658.3 501.2L657.2 499.4Z" fill="#d5dce1" stroke="#d5dce1" stroke-width="0.4"/><path d="M664.8 495.7L666.0 497.4L659.4 503.0L658.3 501.2Z" fill="#ccd3d9" stroke="#ccd3d9" stroke-width="0.4"/><path d="M666.0 497.4L667.2 499.1L660.5 504.7L659.4 503.0Z" fill="#c5ccd2" stroke="#c5ccd2" stroke-width="0.4"/><path d="M667.2 499.1L668.4 500.8L661.6 506.5L660.5 504.7Z" fill="#bfc6cc" stroke="#bfc6cc" stroke-width="0.4"/><path d="M668.4 500.8L669.6 502.5L662.8 508.3L661.6 506.5Z" fill="#b9c0c7" stroke="#b9c0c7" stroke-width="0.4"/><path d="M669.6 502.5L670.8 504.2L663.9 510.0L662.8 508.3Z" fill="#b3bac1" stroke="#b3bac1" stroke-width="0.4"/><path d="M670.8 504.2L672.1 505.9L665.0 511.8L663.9 510.0Z" fill="#afb6bd" stroke="#afb6bd" stroke-width="0.4"/><path d="M672.1 505.9L673.3 507.6L666.1 513.6L665.0 511.8Z" fill="#aeb5bc" stroke="#aeb5bc" stroke-width="0.4"/><path d="M673.3 507.6L674.5 509.3L667.2 515.4L666.1 513.6Z" fill="#acb3ba" stroke="#acb3ba" stroke-width="0.4"/><path d="M674.5 509.3L675.7 511.0L668.3 517.1L667.2 515.4Z" fill="#aab1b8" stroke="#aab1b8" stroke-width="0.4"/><path d="M675.7 511.0L676.9 512.7L669.4 518.9L668.3 517.1Z" fill="#a9b0b7" stroke="#a9b0b7" stroke-width="0.4"/><path d="M676.9 512.7L678.1 514.4L670.5 520.7L669.4 518.9Z" fill="#a7aeb5" stroke="#a7aeb5" stroke-width="0.4"/><path d="M678.1 514.4L679.4 516.1L671.7 522.4L670.5 520.7Z" fill="#a5acb3" stroke="#a5acb3" stroke-width="0.4"/><path d="M679.4 516.1L680.6 517.8L672.8 524.2L671.7 522.4Z" fill="#a4abb2" stroke="#a4abb2" stroke-width="0.4"/><path d="M628.3 453.4L629.4 455.2L625.7 458.6L624.7 456.7Z" fill="#a8aeb4" stroke="#a8aeb4" stroke-width="0.4"/><path d="M629.4 455.2L630.5 456.9L626.7 460.4L625.7 458.6Z" fill="#a8aeb4" stroke="#a8aeb4" stroke-width="0.4"/><path d="M630.5 456.9L631.6 458.7L627.7 462.3L626.7 460.4Z" fill="#a8aeb4" stroke="#a8aeb4" stroke-width="0.4"/><path d="M631.6 458.7L632.7 460.5L628.7 464.1L627.7 462.3Z" fill="#a9afb5" stroke="#a9afb5" stroke-width="0.4"/><path d="M632.7 460.5L633.8 462.2L629.7 466.0L628.7 464.1Z" fill="#a9afb5" stroke="#a9afb5" stroke-width="0.4"/><path d="M633.8 462.2L634.9 464.0L630.7 467.8L629.7 466.0Z" fill="#a9afb5" stroke="#a9afb5" stroke-width="0.4"/><path d="M634.9 464.0L636.0 465.8L631.7 469.7L630.7 467.8Z" fill="#afb5bb" stroke="#afb5bb" stroke-width="0.4"/><path d="M636.0 465.8L637.2 467.6L632.7 471.5L631.7 469.7Z" fill="#b3b9bf" stroke="#b3b9bf" stroke-width="0.4"/><path d="M637.2 467.6L638.3 469.3L633.7 473.4L632.7 471.5Z" fill="#b4bac0" stroke="#b4bac0" stroke-width="0.4"/><path d="M638.3 469.3L639.4 471.1L634.7 475.2L633.7 473.4Z" fill="#b5bbc1" stroke="#b5bbc1" stroke-width="0.4"/><path d="M639.4 471.1L640.5 472.9L635.7 477.1L634.7 475.2Z" fill="#b6bcc2" stroke="#b6bcc2" stroke-width="0.4"/><path d="M640.5 472.9L641.6 474.6L636.7 478.9L635.7 477.1Z" fill="#b7bdc3" stroke="#b7bdc3" stroke-width="0.4"/><path d="M641.6 474.6L642.7 476.4L637.7 480.8L636.7 478.9Z" fill="#b8bec4" stroke="#b8bec4" stroke-width="0.4"/><path d="M642.7 476.4L643.8 478.2L638.7 482.6L637.7 480.8Z" fill="#b9bfc5" stroke="#b9bfc5" stroke-width="0.4"/><path d="M643.8 478.2L645.0 479.9L639.7 484.4L638.7 482.6Z" fill="#bcc2c8" stroke="#bcc2c8" stroke-width="0.4"/><path d="M645.0 479.9L646.1 481.7L640.7 486.3L639.7 484.4Z" fill="#c0c7cc" stroke="#c0c7cc" stroke-width="0.4"/><path d="M646.1 481.7L647.2 483.5L641.7 488.1L640.7 486.3Z" fill="#c5cbd1" stroke="#c5cbd1" stroke-width="0.4"/><path d="M647.2 483.5L648.3 485.3L642.7 490.0L641.7 488.1Z" fill="#c9d0d5" stroke="#c9d0d5" stroke-width="0.4"/><path d="M648.3 485.3L649.4 487.0L643.7 491.8L642.7 490.0Z" fill="#cfd6db" stroke="#cfd6db" stroke-width="0.4"/><path d="M649.4 487.0L650.5 488.8L644.7 493.7L643.7 491.8Z" fill="#d7dee2" stroke="#d7dee2" stroke-width="0.4"/><path d="M650.5 488.8L651.6 490.6L645.7 495.5L644.7 493.7Z" fill="#e0e6ea" stroke="#e0e6ea" stroke-width="0.4"/><path d="M651.6 490.6L652.7 492.3L646.7 497.4L645.7 495.5Z" fill="#e6ecf0" stroke="#e6ecf0" stroke-width="0.4"/><path d="M652.7 492.3L653.9 494.1L647.7 499.2L646.7 497.4Z" fill="#ecf1f4" stroke="#ecf1f4" stroke-width="0.4"/><path d="M653.9 494.1L655.0 495.9L648.7 501.1L647.7 499.2Z" fill="#eaf0f3" stroke="#eaf0f3" stroke-width="0.4"/><path d="M655.0 495.9L656.1 497.6L649.7 502.9L648.7 501.1Z" fill="#e5ebef" stroke="#e5ebef" stroke-width="0.4"/><path d="M656.1 497.6L657.2 499.4L650.7 504.8L649.7 502.9Z" fill="#dee4e9" stroke="#dee4e9" stroke-width="0.4"/><path d="M657.2 499.4L658.3 501.2L651.7 506.6L650.7 504.8Z" fill="#d5dce1" stroke="#d5dce1" stroke-width="0.4"/><path d="M658.3 501.2L659.4 503.0L652.7 508.5L651.7 506.6Z" fill="#ccd3d9" stroke="#ccd3d9" stroke-width="0.4"/><path d="M659.4 503.0L660.5 504.7L653.7 510.3L652.7 508.5Z" fill="#c5ccd2" stroke="#c5ccd2" stroke-width="0.4"/><path d="M660.5 504.7L661.6 506.5L654.7 512.2L653.7 510.3Z" fill="#bfc6cc" stroke="#bfc6cc" stroke-width="0.4"/><path d="M661.6 506.5L662.8 508.3L655.7 514.0L654.7 512.2Z" fill="#b9c0c7" stroke="#b9c0c7" stroke-width="0.4"/><path d="M662.8 508.3L663.9 510.0L656.7 515.8L655.7 514.0Z" fill="#b3bac1" stroke="#b3bac1" stroke-width="0.4"/><path d="M663.9 510.0L665.0 511.8L657.7 517.7L656.7 515.8Z" fill="#afb6bd" stroke="#afb6bd" stroke-width="0.4"/><path d="M665.0 511.8L666.1 513.6L658.7 519.5L657.7 517.7Z" fill="#aeb5bc" stroke="#aeb5bc" stroke-width="0.4"/><path d="M666.1 513.6L667.2 515.4L659.7 521.4L658.7 519.5Z" fill="#acb3ba" stroke="#acb3ba" stroke-width="0.4"/><path d="M667.2 515.4L668.3 517.1L660.7 523.2L659.7 521.4Z" fill="#aab1b8" stroke="#aab1b8" stroke-width="0.4"/><path d="M668.3 517.1L669.4 518.9L661.7 525.1L660.7 523.2Z" fill="#a9b0b7" stroke="#a9b0b7" stroke-width="0.4"/><path d="M669.4 518.9L670.5 520.7L662.7 526.9L661.7 525.1Z" fill="#a7aeb5" stroke="#a7aeb5" stroke-width="0.4"/><path d="M670.5 520.7L671.7 522.4L663.7 528.8L662.7 526.9Z" fill="#a5acb3" stroke="#a5acb3" stroke-width="0.4"/><path d="M671.7 522.4L672.8 524.2L664.7 530.6L663.7 528.8Z" fill="#a4abb2" stroke="#a4abb2" stroke-width="0.4"/><path d="M624.7 456.7L625.7 458.6L622.2 461.9L621.3 460.0Z" fill="#a8aeb4" stroke="#a8aeb4" stroke-width="0.4"/><path d="M625.7 458.6L626.7 460.4L623.0 463.8L622.2 461.9Z" fill="#a8aeb4" stroke="#a8aeb4" stroke-width="0.4"/><path d="M626.7 460.4L627.7 462.3L623.9 465.7L623.0 463.8Z" fill="#a8aeb4" stroke="#a8aeb4" stroke-width="0.4"/><path d="M627.7 462.3L628.7 464.1L624.8 467.7L623.9 465.7Z" fill="#a9afb5" stroke="#a9afb5" stroke-width="0.4"/><path d="M628.7 464.1L629.7 466.0L625.7 469.6L624.8 467.7Z" fill="#a9afb5" stroke="#a9afb5" stroke-width="0.4"/><path d="M629.7 466.0L630.7 467.8L626.6 471.5L625.7 469.6Z" fill="#a9afb5" stroke="#a9afb5" stroke-width="0.4"/><path d="M630.7 467.8L631.7 469.7L627.4 473.4L626.6 471.5Z" fill="#afb5bb" stroke="#afb5bb" stroke-width="0.4"/><path d="M631.7 469.7L632.7 471.5L628.3 475.4L627.4 473.4Z" fill="#b3b9bf" stroke="#b3b9bf" stroke-width="0.4"/><path d="M632.7 471.5L633.7 473.4L629.2 477.3L628.3 475.4Z" fill="#b4bac0" stroke="#b4bac0" stroke-width="0.4"/><path d="M633.7 473.4L634.7 475.2L630.1 479.2L629.2 477.3Z" fill="#b5bbc1" stroke="#b5bbc1" stroke-width="0.4"/><path d="M634.7 475.2L635.7 477.1L631.0 481.2L630.1 479.2Z" fill="#b6bcc2" stroke="#b6bcc2" stroke-width="0.4"/><path d="M635.7 477.1L636.7 478.9L631.8 483.1L631.0 481.2Z" fill="#b7bdc3" stroke="#b7bdc3" stroke-width="0.4"/><path d="M636.7 478.9L637.7 480.8L632.7 485.0L631.8 483.1Z" fill="#b8bec4" stroke="#b8bec4" stroke-width="0.4"/><path d="M637.7 480.8L638.7 482.6L633.6 486.9L632.7 485.0Z" fill="#b9bfc5" stroke="#b9bfc5" stroke-width="0.4"/><path d="M638.7 482.6L639.7 484.4L634.5 488.9L633.6 486.9Z" fill="#bcc2c8" stroke="#bcc2c8" stroke-width="0.4"/><path d="M639.7 484.4L640.7 486.3L635.4 490.8L634.5 488.9Z" fill="#c0c7cc" stroke="#c0c7cc" stroke-width="0.4"/><path d="M640.7 486.3L641.7 488.1L636.2 492.7L635.4 490.8Z" fill="#c5cbd1" stroke="#c5cbd1" stroke-width="0.4"/><path d="M641.7 488.1L642.7 490.0L637.1 494.6L636.2 492.7Z" fill="#c9d0d5" stroke="#c9d0d5" stroke-width="0.4"/><path d="M642.7 490.0L643.7 491.8L638.0 496.6L637.1 494.6Z" fill="#cfd6db" stroke="#cfd6db" stroke-width="0.4"/><path d="M643.7 491.8L644.7 493.7L638.9 498.5L638.0 496.6Z" fill="#d7dee2" stroke="#d7dee2" stroke-width="0.4"/><path d="M644.7 493.7L645.7 495.5L639.8 500.4L638.9 498.5Z" fill="#e0e6ea" stroke="#e0e6ea" stroke-width="0.4"/><path d="M645.7 495.5L646.7 497.4L640.6 502.4L639.8 500.4Z" fill="#e6ecf0" stroke="#e6ecf0" stroke-width="0.4"/><path d="M646.7 497.4L647.7 499.2L641.5 504.3L640.6 502.4Z" fill="#ecf1f4" stroke="#ecf1f4" stroke-width="0.4"/><path d="M647.7 499.2L648.7 501.1L642.4 506.2L641.5 504.3Z" fill="#eaf0f3" stroke="#eaf0f3" stroke-width="0.4"/><path d="M648.7 501.1L649.7 502.9L643.3 508.1L642.4 506.2Z" fill="#e5ebef" stroke="#e5ebef" stroke-width="0.4"/><path d="M649.7 502.9L650.7 504.8L644.2 510.1L643.3 508.1Z" fill="#dee4e9" stroke="#dee4e9" stroke-width="0.4"/><path d="M650.7 504.8L651.7 506.6L645.0 512.0L644.2 510.1Z" fill="#d5dce1" stroke="#d5dce1" stroke-width="0.4"/><path d="M651.7 506.6L652.7 508.5L645.9 513.9L645.0 512.0Z" fill="#ccd3d9" stroke="#ccd3d9" stroke-width="0.4"/><path d="M652.7 508.5L653.7 510.3L646.8 515.8L645.9 513.9Z" fill="#c5ccd2" stroke="#c5ccd2" stroke-width="0.4"/><path d="M653.7 510.3L654.7 512.2L647.7 517.8L646.8 515.8Z" fill="#bfc6cc" stroke="#bfc6cc" stroke-width="0.4"/><path d="M654.7 512.2L655.7 514.0L648.6 519.7L647.7 517.8Z" fill="#b9c0c7" stroke="#b9c0c7" stroke-width="0.4"/><path d="M655.7 514.0L656.7 515.8L649.4 521.6L648.6 519.7Z" fill="#b3bac1" stroke="#b3bac1" stroke-width="0.4"/><path d="M656.7 515.8L657.7 517.7L650.3 523.6L649.4 521.6Z" fill="#afb6bd" stroke="#afb6bd" stroke-width="0.4"/><path d="M657.7 517.7L658.7 519.5L651.2 525.5L650.3 523.6Z" fill="#aeb5bc" stroke="#aeb5bc" stroke-width="0.4"/><path d="M658.7 519.5L659.7 521.4L652.1 527.4L651.2 525.5Z" fill="#acb3ba" stroke="#acb3ba" stroke-width="0.4"/><path d="M659.7 521.4L660.7 523.2L653.0 529.3L652.1 527.4Z" fill="#aab1b8" stroke="#aab1b8" stroke-width="0.4"/><path d="M660.7 523.2L661.7 525.1L653.9 531.3L653.0 529.3Z" fill="#a9b0b7" stroke="#a9b0b7" stroke-width="0.4"/><path d="M661.7 525.1L662.7 526.9L654.7 533.2L653.9 531.3Z" fill="#a7aeb5" stroke="#a7aeb5" stroke-width="0.4"/><path d="M662.7 526.9L663.7 528.8L655.6 535.1L654.7 533.2Z" fill="#a5acb3" stroke="#a5acb3" stroke-width="0.4"/><path d="M663.7 528.8L664.7 530.6L656.5 537.1L655.6 535.1Z" fill="#a4abb2" stroke="#a4abb2" stroke-width="0.4"/><path d="M621.3 460.0L622.2 461.9L618.8 465.0L618.0 463.0Z" fill="#a8aeb4" stroke="#a8aeb4" stroke-width="0.4"/><path d="M622.2 461.9L623.0 463.8L619.5 467.0L618.8 465.0Z" fill="#a8aeb4" stroke="#a8aeb4" stroke-width="0.4"/><path d="M623.0 463.8L623.9 465.7L620.2 469.0L619.5 467.0Z" fill="#a8aeb4" stroke="#a8aeb4" stroke-width="0.4"/><path d="M623.9 465.7L624.8 467.7L621.0 471.1L620.2 469.0Z" fill="#a9afb5" stroke="#a9afb5" stroke-width="0.4"/><path d="M624.8 467.7L625.7 469.6L621.8 473.1L621.0 471.1Z" fill="#a9afb5" stroke="#a9afb5" stroke-width="0.4"/><path d="M625.7 469.6L626.6 471.5L622.5 475.1L621.8 473.1Z" fill="#a9afb5" stroke="#a9afb5" stroke-width="0.4"/><path d="M626.6 471.5L627.4 473.4L623.2 477.1L622.5 475.1Z" fill="#afb5bb" stroke="#afb5bb" stroke-width="0.4"/><path d="M627.4 473.4L628.3 475.4L624.0 479.1L623.2 477.1Z" fill="#b3b9bf" stroke="#b3b9bf" stroke-width="0.4"/><path d="M628.3 475.4L629.2 477.3L624.8 481.1L624.0 479.1Z" fill="#b4bac0" stroke="#b4bac0" stroke-width="0.4"/><path d="M629.2 477.3L630.1 479.2L625.5 483.1L624.8 481.1Z" fill="#b5bbc1" stroke="#b5bbc1" stroke-width="0.4"/><path d="M630.1 479.2L631.0 481.2L626.2 485.1L625.5 483.1Z" fill="#b6bcc2" stroke="#b6bcc2" stroke-width="0.4"/><path d="M631.0 481.2L631.8 483.1L627.0 487.1L626.2 485.1Z" fill="#b7bdc3" stroke="#b7bdc3" stroke-width="0.4"/><path d="M631.8 483.1L632.7 485.0L627.8 489.2L627.0 487.1Z" fill="#b8bec4" stroke="#b8bec4" stroke-width="0.4"/><path d="M632.7 485.0L633.6 486.9L628.5 491.2L627.8 489.2Z" fill="#b9bfc5" stroke="#b9bfc5" stroke-width="0.4"/><path d="M633.6 486.9L634.5 488.9L629.2 493.2L628.5 491.2Z" fill="#bcc2c8" stroke="#bcc2c8" stroke-width="0.4"/><path d="M634.5 488.9L635.4 490.8L630.0 495.2L629.2 493.2Z" fill="#c0c7cc" stroke="#c0c7cc" stroke-width="0.4"/><path d="M635.4 490.8L636.2 492.7L630.8 497.2L630.0 495.2Z" fill="#c5cbd1" stroke="#c5cbd1" stroke-width="0.4"/><path d="M636.2 492.7L637.1 494.6L631.5 499.2L630.8 497.2Z" fill="#c9d0d5" stroke="#c9d0d5" stroke-width="0.4"/><path d="M637.1 494.6L638.0 496.6L632.2 501.2L631.5 499.2Z" fill="#cfd6db" stroke="#cfd6db" stroke-width="0.4"/><path d="M638.0 496.6L638.9 498.5L633.0 503.2L632.2 501.2Z" fill="#d7dee2" stroke="#d7dee2" stroke-width="0.4"/><path d="M638.9 498.5L639.8 500.4L633.8 505.3L633.0 503.2Z" fill="#e0e6ea" stroke="#e0e6ea" stroke-width="0.4"/><path d="M639.8 500.4L640.6 502.4L634.5 507.3L633.8 505.3Z" fill="#e6ecf0" stroke="#e6ecf0" stroke-width="0.4"/><path d="M640.6 502.4L641.5 504.3L635.2 509.3L634.5 507.3Z" fill="#ecf1f4" stroke="#ecf1f4" stroke-width="0.4"/><path d="M641.5 504.3L642.4 506.2L636.0 511.3L635.2 509.3Z" fill="#eaf0f3" stroke="#eaf0f3" stroke-width="0.4"/><path d="M642.4 506.2L643.3 508.1L636.8 513.3L636.0 511.3Z" fill="#e5ebef" stroke="#e5ebef" stroke-width="0.4"/><path d="M643.3 508.1L644.2 510.1L637.5 515.3L636.8 513.3Z" fill="#dee4e9" stroke="#dee4e9" stroke-width="0.4"/><path d="M644.2 510.1L645.0 512.0L638.2 517.3L637.5 515.3Z" fill="#d5dce1" stroke="#d5dce1" stroke-width="0.4"/><path d="M645.0 512.0L645.9 513.9L639.0 519.4L638.2 517.3Z" fill="#ccd3d9" stroke="#ccd3d9" stroke-width="0.4"/><path d="M645.9 513.9L646.8 515.8L639.8 521.4L639.0 519.4Z" fill="#c5ccd2" stroke="#c5ccd2" stroke-width="0.4"/><path d="M646.8 515.8L647.7 517.8L640.5 523.4L639.8 521.4Z" fill="#bfc6cc" stroke="#bfc6cc" stroke-width="0.4"/><path d="M647.7 517.8L648.6 519.7L641.2 525.4L640.5 523.4Z" fill="#b9c0c7" stroke="#b9c0c7" stroke-width="0.4"/><path d="M648.6 519.7L649.4 521.6L642.0 527.4L641.2 525.4Z" fill="#b3bac1" stroke="#b3bac1" stroke-width="0.4"/><path d="M649.4 521.6L650.3 523.6L642.8 529.4L642.0 527.4Z" fill="#afb6bd" stroke="#afb6bd" stroke-width="0.4"/><path d="M650.3 523.6L651.2 525.5L643.5 531.4L642.8 529.4Z" fill="#aeb5bc" stroke="#aeb5bc" stroke-width="0.4"/><path d="M651.2 525.5L652.1 527.4L644.2 533.4L643.5 531.4Z" fill="#acb3ba" stroke="#acb3ba" stroke-width="0.4"/><path d="M652.1 527.4L653.0 529.3L645.0 535.5L644.2 533.4Z" fill="#aab1b8" stroke="#aab1b8" stroke-width="0.4"/><path d="M653.0 529.3L653.9 531.3L645.8 537.5L645.0 535.5Z" fill="#a9b0b7" stroke="#a9b0b7" stroke-width="0.4"/><path d="M653.9 531.3L654.7 533.2L646.5 539.5L645.8 537.5Z" fill="#a7aeb5" stroke="#a7aeb5" stroke-width="0.4"/><path d="M654.7 533.2L655.6 535.1L647.2 541.5L646.5 539.5Z" fill="#a5acb3" stroke="#a5acb3" stroke-width="0.4"/><path d="M655.6 535.1L656.5 537.1L648.0 543.5L647.2 541.5Z" fill="#a4abb2" stroke="#a4abb2" stroke-width="0.4"/></g>
 </g>
 <path d="M723.8 283C729.4 356.8 656.4 427.4 618 463M648 543.5C751.3 466 804.1 392.7 810 306" fill="none" stroke="#4a4f55" stroke-width="1" stroke-dasharray="1.6 0.6"/>
 <ellipse cx="767" cy="295.4" rx="45.2" ry="9.8" transform="rotate(14.2 767 295.4)" fill="url(#capg)" stroke="#efad00" stroke-width="1.2"/>
 <path d="M766.5 301C766.2 320 758.1 348.6 743.7 378.8" fill="none" stroke="#5a6168" stroke-width="1.1" stroke-dasharray="30 1.2 20 1.2 12 1.5"/>
 <path d="M743.7 378.8C723.8 420.5 692.1 465.4 652.8 492.3" fill="none" stroke="#5a6168" stroke-width="1.3" stroke-dasharray="8 2.5"/>
 <ellipse cx="629.5" cy="506" rx="44.2" ry="27.5" transform="rotate(78.6 629.5 506)" fill="#a3a9af"/>
 <path d="M629.5 455V560L700 560V455Z" fill="#8d939a" clip-path="url(#capc)"/>
 <ellipse cx="629.5" cy="506" rx="44.2" ry="27.5" transform="rotate(78.6 629.5 506)" fill="none" stroke="#50565c" stroke-width="1.2"/>
 <path d="M630 505.6L652.8 492.3" stroke="#5a6168" stroke-width="1.3"/>
 <circle cx="630" cy="505.6" r="1.9" fill="#5a6168"/>
 <circle cx="767.2" cy="295.3" r="4.3" fill="#fff" stroke="#333" stroke-width="2"/>
 <circle cx="767.2" cy="295.3" r="1.7" fill="#333"/>
</svg>

<!-- VIEWCUBE -->
<svg style="left:1260px;top:80px" width="179" height="180" viewBox="1260 80 179 180">
 <g fill="#d7dfe8">
  <path d="M1350 91.6L1357.6 100.4H1342.4Z"/>
  <path d="M1350 240.4L1357.6 231.4H1342.4Z"/>
  <path d="M1275.5 166L1284.9 158.4V173.6Z"/>
  <path d="M1424.3 166L1414.9 158.4V173.6Z"/>
 </g>
 <g fill="none" stroke="#d7dfe8" stroke-width="4.2">
  <path d="M1329.5 103.5C1318 106 1309 112 1302.5 119"/>
  <path d="M1370.5 103.5C1382 106 1391 112 1397.5 119"/>
 </g>
 <g fill="#d7dfe8">
  <path d="M1295.5 125.5L1297.5 113.5L1307.5 122Z"/>
  <path d="M1404.5 125.5L1402.5 113.5L1392.5 122Z"/>
 </g>
 <!-- cube body -->
 <path d="M1322 129.5L1336 129.2L1381 142.5L1388 147L1393.5 154L1391 190L1385 198L1376 202.5L1350 202L1318 190L1308.5 183.5L1305.5 175L1312 140L1316 132Z" fill="#d4dce5"/>
 <path d="M1323.5 140.5L1339.5 146.5Q1344 148.3 1343.6 153L1341.4 181.5Q1341 186.5 1336.2 185L1316.5 178.5Q1312.2 177 1312.6 172.5L1314.6 145.5Q1315 139 1323.5 140.5Z" fill="#fff"/>
 <path d="M1361 154.8L1381.5 157.6Q1386.2 158.3 1386 163L1384.5 191.5Q1384.2 196.8 1379 196.2L1357 193.2Q1352 192.5 1352.2 187.5L1353.6 160Q1354 154 1361 154.8Z" fill="#fff"/>
 <path d="M1333 130.8C1346 131.2 1364 133.5 1375 137.5C1380 139.5 1382.5 141.5 1381 143.8C1372 145 1361 144.2 1352.5 141.8C1344 139.5 1336 136.5 1331 133.8C1329.8 133 1330.5 131 1333 130.8Z" fill="#fff"/>
 <circle cx="1353.3" cy="150.3" r="6.3" fill="#fff"/>
 <ellipse cx="1342.4" cy="194.8" rx="6.6" ry="4.6" transform="rotate(15 1342.4 194.8)" fill="#fff"/>
 <path d="M1318.5 136L1323 131" stroke="#fff" stroke-width="1.3"/>
 <path d="M1388 149L1390.5 156" stroke="#fff" stroke-width="1.3"/>
 <text x="0" y="0" font-family="Liberation Sans" font-size="10" fill="#333" transform="translate(1316.5 165.8) rotate(18) scale(0.86 1)">Front</text>
 <text x="0" y="0" font-family="Liberation Sans" font-size="10" font-style="italic" fill="#333" transform="translate(1357.5 178.2) rotate(-3) scale(0.92 1)">Right</text>
 <text x="0" y="0" font-family="Liberation Sans" font-size="5.5" fill="#555" transform="translate(1351.5 136) rotate(22) scale(1 -0.7)">doT</text>
 <!-- axes -->
 <path d="M1300.8 184L1314.7 128.7" stroke="#2222dd" stroke-width="1.3"/>
 <path d="M1300.8 184L1338.9 202.7" stroke="#dd2a2a" stroke-width="1.6"/>
 <path d="M1300.8 184L1344 185.4" stroke="#3fae3f" stroke-width="1"/>
 <text x="1317.3" y="123.8" font-family="Liberation Sans" font-size="11.5" font-weight="bold" fill="#2222dd" text-anchor="middle">Z</text>
 <text x="1344.6" y="211.4" font-family="Liberation Sans" font-size="11.5" font-weight="bold" fill="#dd2a2a" text-anchor="middle">X</text>
 <text x="1351" y="190.2" font-family="Liberation Sans" font-size="10.5" fill="#7fcf7f" text-anchor="middle">Y</text>
 <!-- home cube -->
 <rect x="1403" y="221.6" width="24" height="28.6" rx="6" fill="none" stroke="#bcc5ce" stroke-width="1.5"/>
 <g fill="none" stroke="#bcc5ce" stroke-width="1.3" stroke-linejoin="round"><path d="M1415 224.3L1425 230.9V241.2L1415 247.6L1405 241.2V230.9Z"/><path d="M1405 230.9L1415 237.6L1425 230.9M1415 237.6V247.6"/></g>
</svg>

<!-- LEFT PANEL -->
<div class="a" style="left:0;top:79px;width:200px;height:623px;background:rgba(255,255,255,0.94);box-shadow:2px 0 4px rgba(0,0,0,0.09),0 1.5px 1px rgba(0,0,0,0.22)"></div>
<div class="a" style="left:190px;top:140px;width:6px;height:407px;background:#f3f5f8"></div>
<div class="a" style="left:190px;top:578px;width:6px;height:124px;background:#f3f5f8"></div>
<div class="a" style="left:10.5px;top:88.4px;font-size:13px;font-weight:bold;color:#333">Features (7)</div>
<div class="a" style="left:10px;top:109px;width:181px;height:27px;border:1px solid #c8c8c8;background:#fff"></div>
<div class="a" style="left:14px;top:117.6px;font-size:11.5px;font-style:italic;color:#a8a8a8">Filter by name or type</div>
<svg style="left:0;top:0" width="30" height="170"><path d="M10.6 148L16 153.6L21.4 148" fill="none" stroke="#444" stroke-width="2"/></svg>
<div class="a" style="left:26.3px;top:145.0px;font-size:12px;color:#333">Default geometry</div>
<div class="a" style="left:46.9px;top:169.6px;font-size:13px;color:#333">Origin</div>
<div class="a" style="left:46.9px;top:196.6px;font-size:13px;color:#333">Top</div>
<div class="a" style="left:46.9px;top:223.6px;font-size:13px;color:#333">Front</div>
<div class="a" style="left:46.9px;top:250.6px;font-size:13px;color:#333">Right</div>
<div class="a" style="left:27px;top:277.8px;font-size:13px;color:#333">Sketch 1</div>
<div class="a" style="left:21px;top:298px;width:164px;height:24px;background:#e9eff3"></div>
<div class="a" style="left:21px;top:322px;width:164px;height:1px;background:#8fcaf0"></div>
<div class="a" style="left:27px;top:304.8px;font-size:13px;color:#333">Sketch 2</div>
<div class="a" style="left:21px;top:325px;width:164px;height:25px;background:#b2dcf5"></div>
<div class="a" style="left:27px;top:331.8px;font-size:13px;font-weight:bold;color:#333">Sweep 1</div>
<div class="a" style="left:21px;top:356px;width:150px;height:7px;background:#bdbdbd"></div>
<div class="a" style="left:6px;top:547px;width:194px;height:1px;background:#d6dde6"></div>
<div class="a" style="left:10.5px;top:557px;font-size:13px;font-weight:bold;color:#333">Parts (1)</div>
<div class="a" style="left:27.4px;top:586.8px;font-size:13px;color:#333">Part 1</div>

<!-- DIALOG -->
<div class="a" style="left:200px;top:79px;width:191.5px;height:190.5px;background:#fff;border:1px solid #c5cbd1;border-top-color:#e3e7eb;box-shadow:1px 3px 7px rgba(0,0,0,0.3)"></div>
<div class="a" style="left:201px;top:107.5px;width:189.5px;height:1px;background:#d5dade"></div>
<div class="a" style="left:207px;top:89.2px;font-size:12.5px;font-weight:bold;color:#333">Sweep 1</div>
<div class="a" style="left:334.8px;top:80px;width:27.9px;height:28px;background:#009405"></div>
<svg style="left:0;top:0" width="400" height="280">
 <path d="M341.2 93.4L347.4 99.3L356.2 89.2" fill="none" stroke="#fff" stroke-width="2.8"/>
 <path d="M372.3 89.3L382.1 99.1M382.1 89.3L372.3 99.1" stroke="#e2572b" stroke-width="2.9" stroke-linecap="round"/>
 <circle cx="382" cy="259.8" r="6.2" fill="#7b8086"/>
 <path d="M379.6 257.8C379.6 256.2 380.7 255.4 382.1 255.4C383.6 255.4 384.6 256.3 384.6 257.6C384.6 259.3 382.2 259.4 382.2 261.2" fill="none" stroke="#fff" stroke-width="1.9"/><rect x="381.1" y="262.4" width="2.2" height="2" fill="#fff"/>
 <rect x="208" y="258.2" width="92.4" height="1.7" fill="#444"/>
 <circle cx="271.2" cy="259.1" r="5.1" fill="#fff" stroke="#555" stroke-width="1.1"/>
</svg>
<div class="a" style="left:205px;top:116.7px;font-size:13px;font-weight:bold;color:#1d5eb0">Solid</div>
<div class="a" style="left:205px;top:129.6px;width:34px;height:1.4px;background:#1d5eb0"></div>
<div class="a" style="left:241.8px;top:116.7px;font-size:13px;color:#6b7680">Surface</div>
<div class="a" style="left:202px;top:134px;width:187px;height:1px;background:#eef0f2"></div>
<div class="a" style="left:205px;top:140.7px;font-size:13px;font-weight:bold;color:#1d5eb0">New</div>
<div class="a" style="left:205px;top:153.6px;width:30px;height:1.4px;background:#1d5eb0"></div>
<div class="a" style="left:238.4px;top:140.7px;font-size:13px;color:#6b7680">Add</div>
<div class="a" style="left:266.4px;top:140.7px;font-size:13px;color:#6b7680">Remove</div>
<div class="a" style="left:317.9px;top:140.7px;font-size:13px;color:#6b7680">Intersect</div>
<div class="a" style="left:202px;top:158px;width:187px;height:1px;background:#eef0f2"></div>
<div class="a" style="left:202px;top:160.5px;width:188px;height:27px;background:#dbeef9;border:1.5px solid #8ecdf2"></div>
<div class="a" style="left:210.5px;top:165.6px;font-size:13px;color:#333">Face of Sketch 2</div>
<div class="a" style="left:202px;top:190.3px;width:187.5px;height:27.3px;background:#fff;border:1px solid #d3d3d3"></div>
<div class="a" style="left:210.5px;top:195.4px;font-size:13px;color:#333">Edge of Sketch 1</div>
<div class="a" style="left:208.2px;top:223.4px;width:11.4px;height:11.2px;background:#fff;border:1px solid #aaa;border-radius:2px"></div>
<div class="a" style="left:229px;top:221.8px;font-size:13px;color:#333">Keep profile orientation</div>

<!-- TAB BAR -->
<div class="a" style="left:0;top:703.5px;width:1439px;height:28px;background:#d3d3d3;box-shadow:inset 0 1.5px 0.8px rgba(0,0,0,0.13)"></div>
<div class="a" style="left:94px;top:704.2px;width:200px;height:25.6px;background:#fff;border-radius:0 0 4.5px 4.5px"></div>
<div class="a" style="left:295px;top:704.2px;width:201.3px;height:25.6px;background:#e6e6e6;border-radius:0 0 4.5px 4.5px"></div>
<svg style="left:0;top:700px" width="500" height="31">
 <path d="M16 18.8H30M23 12V25.6" stroke="#666" stroke-width="3"/>
 <g fill="#666"><rect x="62" y="12.2" width="1.6" height="2"/><rect x="65.3" y="12.2" width="10.6" height="2"/><rect x="62" y="16" width="1.6" height="2"/><rect x="65.3" y="16" width="10.6" height="2"/><rect x="62" y="19.8" width="1.6" height="2"/><rect x="65.3" y="19.8" width="10.6" height="2"/><rect x="62" y="23.6" width="1.6" height="2"/><rect x="65.3" y="23.6" width="10.6" height="2"/></g>
 <path d="M111.6 9.6H116.3L118.6 12V23.3H108.3L105.2 21V16.2H111.6Z" fill="#fff" stroke="#222" stroke-width="1.2" stroke-linejoin="round"/>
 <path d="M106 16.8L107.8 18.4H113.2V10.4M107.8 18.4V23" fill="none" stroke="#aaa" stroke-width="0.8"/>
 <path d="M307.5 10.4L309.5 9.2H318.5L320.6 11V23.6H310L307.5 21.6Z" fill="#fff" stroke="#444" stroke-width="1.1"/>
 <path d="M308.8 10.6H318.3V20.4H310.5L308.8 19Z" fill="#8c8c8c"/>
</svg>
<div class="a" style="left:123px;top:709.8px;font-size:14px;color:#333;letter-spacing:-0.1px">Part Studio 1</div>
<div class="a" style="left:325.3px;top:709.8px;font-size:14px;color:#777;letter-spacing:-0.15px">Assembly 1</div>

<!-- AREA -->
<div class="a" style="left:1316px;top:674px;width:123px;height:28px;background:#f7f8fa"></div>
<div class="a" style="left:1322.6px;top:683px;font-size:13px;color:#666">Area: <b>9.621</b> sq mm</div>
</body></html>
